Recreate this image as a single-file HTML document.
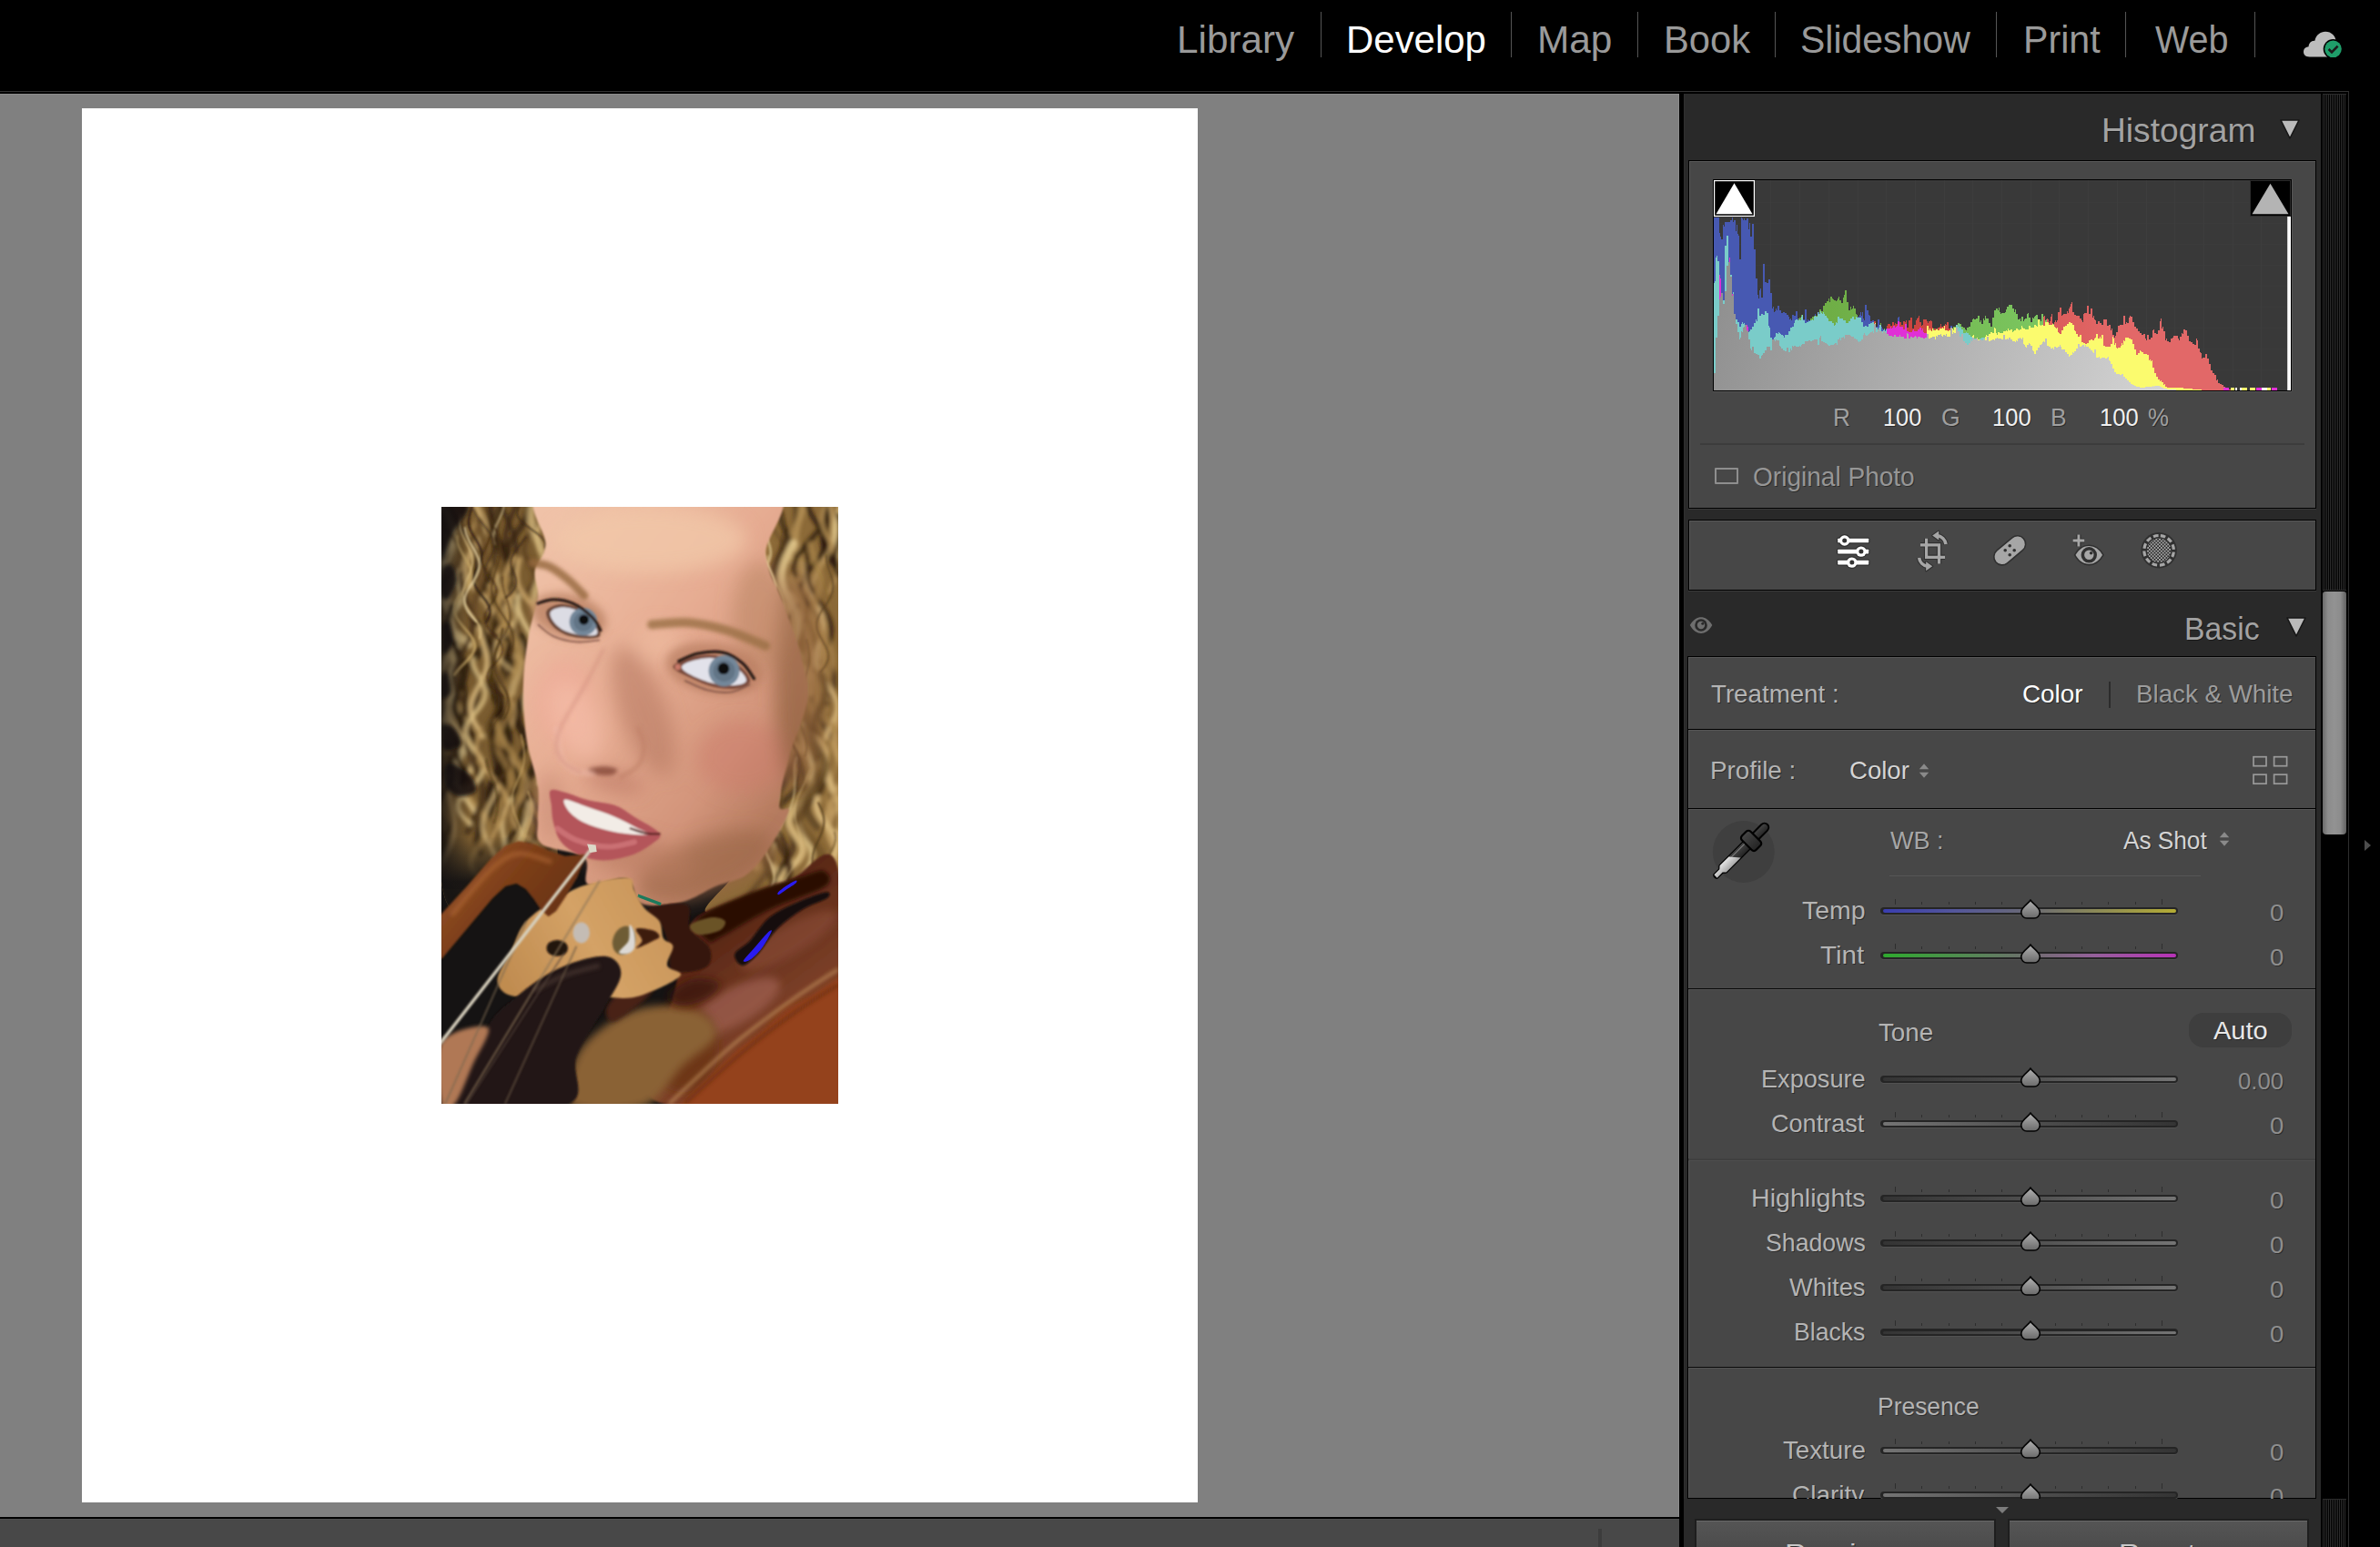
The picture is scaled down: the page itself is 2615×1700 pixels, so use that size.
<!DOCTYPE html><html><head><meta charset="utf-8"><title>Lightroom Classic - Develop</title><style>
*{margin:0;padding:0;box-sizing:border-box}
html,body{width:2615px;height:1700px;background:#000;overflow:hidden}
body{position:relative;font-family:"Liberation Sans",sans-serif}
.a{position:absolute}
.t{position:absolute;white-space:nowrap;line-height:1;transform-origin:0 0;font-family:"Liberation Sans",sans-serif}
.box{position:absolute;left:1855px;width:690px;background:#474747;border:1px solid #000;box-shadow:inset 1px 1px 0 #585858}
.trk{position:absolute;left:2066px;width:327px;height:8px;border-radius:4px;background:#252525;box-shadow:0 1px 0 #525252}
.trk i{position:absolute;left:2.5px;right:2.5px;top:2.3px;height:3.4px;border-radius:2px}
.kn{position:absolute;left:2218px}
.tk{position:absolute;left:2082px;width:294px;height:3px;background:repeating-linear-gradient(90deg,#2e2e2e 0,#2e2e2e 1px,transparent 1px,transparent 29.3px)}
.tk:before,.tk:after{content:"";position:absolute;top:-3px;width:1px;height:4px;background:#2e2e2e}
.tk:before{left:0}.tk:after{left:293px}
.sep{position:absolute;left:1855px;width:689px;height:1px}
.tri{position:absolute;width:0;height:0}
</style></head><body>
<svg width="0" height="0" style="position:absolute"><defs><linearGradient id="kg" x1="0" y1="0" x2="0" y2="1"><stop offset="0" stop-color="#b4b4b4"/><stop offset="0.5" stop-color="#8e8e8e"/><stop offset="1" stop-color="#6a6a6a"/></linearGradient></defs></svg>
<div class="a" style="left:0;top:100px;width:2581px;height:1px;background:#333"></div>
<div class="a" style="left:2580px;top:100px;width:1px;height:1600px;background:#2e2e2e"></div>
<div class="a" style="left:1451.0px;top:13px;width:1px;height:50px;background:#555"></div>
<div class="a" style="left:1660.1px;top:13px;width:1px;height:50px;background:#555"></div>
<div class="a" style="left:1798.9px;top:13px;width:1px;height:50px;background:#555"></div>
<div class="a" style="left:1949.9px;top:13px;width:1px;height:50px;background:#555"></div>
<div class="a" style="left:2192.5px;top:13px;width:1px;height:50px;background:#555"></div>
<div class="a" style="left:2334.5px;top:13px;width:1px;height:50px;background:#555"></div>
<div class="a" style="left:2476.5px;top:13px;width:1px;height:50px;background:#555"></div>
<div class="a" style="left:0;top:103px;width:1845px;height:1564px;background:#808080;box-shadow:inset 0 1px 0 #8c8c8c,inset -1px 0 0 #8c8c8c"></div>
<div class="a" style="left:90px;top:119px;width:1226px;height:1532px;background:#fff"></div>
<div class="a" style="left:485px;top:557px;width:436px;height:656px;background:#7a5030;overflow:hidden"><svg width="436" height="656" viewBox="0 0 436 656" style="position:absolute;left:0;top:0"><defs><filter id="b1" filterUnits="userSpaceOnUse" x="-40" y="-40" width="516" height="736"><feGaussianBlur stdDeviation="0.8"/></filter><filter id="b2" filterUnits="userSpaceOnUse" x="-40" y="-40" width="516" height="736"><feGaussianBlur stdDeviation="2"/></filter><filter id="b4" filterUnits="userSpaceOnUse" x="-40" y="-40" width="516" height="736"><feGaussianBlur stdDeviation="5"/></filter><filter id="b8" filterUnits="userSpaceOnUse" x="-40" y="-40" width="516" height="736"><feGaussianBlur stdDeviation="10"/></filter><linearGradient id="skin" gradientUnits="userSpaceOnUse" x1="90" y1="60" x2="400" y2="300"><stop offset="0" stop-color="#f0c2a8"/><stop offset="0.45" stop-color="#e6ac92"/><stop offset="0.8" stop-color="#d2947a"/><stop offset="1" stop-color="#b47a5e"/></linearGradient><linearGradient id="hairL" gradientUnits="userSpaceOnUse" x1="0" y1="0" x2="110" y2="60"><stop offset="0" stop-color="#5e4426"/><stop offset="0.5" stop-color="#a8864e"/><stop offset="1" stop-color="#866434"/></linearGradient><linearGradient id="hairR" gradientUnits="userSpaceOnUse" x1="350" y1="0" x2="436" y2="60"><stop offset="0" stop-color="#8e6c3c"/><stop offset="0.5" stop-color="#b8945a"/><stop offset="1" stop-color="#94703c"/></linearGradient><linearGradient id="vbody" gradientUnits="userSpaceOnUse" x1="260" y1="420" x2="436" y2="656"><stop offset="0" stop-color="#40180c"/><stop offset="0.35" stop-color="#66301c"/><stop offset="0.6" stop-color="#7c4028"/><stop offset="1" stop-color="#8a3c1c"/></linearGradient><linearGradient id="frog" gradientUnits="userSpaceOnUse" x1="20" y1="380" x2="130" y2="470"><stop offset="0" stop-color="#96522a"/><stop offset="0.45" stop-color="#7c3e18"/><stop offset="1" stop-color="#643014"/></linearGradient><linearGradient id="bridge" gradientUnits="userSpaceOnUse" x1="70" y1="520" x2="250" y2="420"><stop offset="0" stop-color="#c08c50"/><stop offset="0.5" stop-color="#d4a266"/><stop offset="1" stop-color="#c89458"/></linearGradient><linearGradient id="hfade" gradientUnits="userSpaceOnUse" x1="0" y1="362" x2="0" y2="412"><stop offset="0" stop-color="#151313" stop-opacity="0"/><stop offset="0.6" stop-color="#151313" stop-opacity="0.55"/><stop offset="1" stop-color="#151313" stop-opacity="0.95"/></linearGradient><linearGradient id="hfadeL" gradientUnits="userSpaceOnUse" x1="0" y1="0" x2="30" y2="0"><stop offset="0" stop-color="#151313" stop-opacity="0.75"/><stop offset="1" stop-color="#151313" stop-opacity="0"/></linearGradient><clipPath id="pc"><rect x="0" y="0" width="436" height="656"/></clipPath></defs><g clip-path="url(#pc)"><rect width="436" height="656" fill="#151313"/><clipPath id="hcL"><path d="M0.0 0.0 C23.2 -68.7 117.0 -7.0 139.0 0.0 C161.0 7.0 134.8 30.3 132.0 42.0 C129.2 53.7 123.3 60.3 122.0 70.0 C120.7 79.7 125.5 88.7 124.0 100.0 C122.5 111.3 115.8 122.8 113.0 138.0 C110.2 153.2 107.7 171.7 107.0 191.0 C106.3 210.3 106.5 234.7 109.0 254.0 C111.5 273.3 118.2 294.7 122.0 307.0 C125.8 319.3 131.0 318.2 132.0 328.0 C133.0 337.8 130.0 354.0 128.0 366.0 C126.0 378.0 131.3 392.0 120.0 400.0 C108.7 408.0 80.0 412.0 60.0 414.0 C40.0 416.0 10.0 481.0 0.0 412.0 C-10.0 343.0 -23.2 68.7 0.0 0.0 Z"/></clipPath><clipPath id="hcR"><path d="M436.0 0.0 C419.7 -67.5 354.5 -8.8 338.0 0.0 C321.5 8.8 334.2 35.3 337.0 53.0 C339.8 70.7 348.8 88.0 355.0 106.0 C361.2 124.0 369.5 143.3 374.0 161.0 C378.5 178.7 383.7 192.8 382.0 212.0 C380.3 231.2 368.5 256.7 364.0 276.0 C359.5 295.3 357.0 316.5 355.0 328.0 C353.0 339.5 357.0 333.0 352.0 345.0 C347.0 357.0 335.3 383.3 325.0 400.0 C314.7 416.7 285.8 439.2 290.0 445.0 C294.2 450.8 325.7 441.7 350.0 435.0 C374.3 428.3 421.7 477.5 436.0 405.0 C450.3 332.5 452.3 67.5 436.0 0.0 Z"/></clipPath><g clip-path="url(#hcL)"><rect x="0" y="0" width="436" height="470" fill="#7a5c30"/><g filter="url(#b2)"><path d="M104.0 274.2 C103.8 275.4 103.5 279.2 102.6 281.8 C101.8 284.3 100.3 286.8 98.8 289.3 C97.4 291.9 95.4 294.4 93.8 296.9 C92.1 299.4 90.3 302.0 89.1 304.5 C87.9 307.0 86.9 309.5 86.5 312.1 C86.2 314.6 86.4 317.1 87.1 319.6 C87.9 322.2 89.3 324.7 90.8 327.2 C92.4 329.7 94.6 332.3 96.5 334.8 C98.3 337.3 100.5 339.8 102.1 342.3 C103.6 344.9 105.0 347.4 105.5 349.9 C106.1 352.4 106.1 355.0 105.5 357.5 C104.9 360.0 103.4 362.5 101.7 365.1 C100.0 367.6 97.5 370.1 95.2 372.6 C93.0 375.2 90.3 377.7 88.3 380.2 C86.3 382.7 84.3 385.3 83.3 387.8 C82.2 390.3 81.7 392.8 82.0 395.4 C82.3 397.9 83.5 400.4 85.2 402.9 C86.8 405.5 89.4 408.0 91.7 410.5 C94.1 413.0 97.2 415.6 99.5 418.1 C101.8 420.6 104.3 423.1 105.7 425.7 C107.1 428.2 108.1 430.7 108.0 433.2 C108.0 435.8 107.0 438.3 105.4 440.8 C103.8 443.3 101.1 445.9 98.5 448.4 C95.9 450.9 92.4 453.4 89.6 456.0 C86.8 458.5 83.0 462.3 81.7 463.5" fill="none" stroke="#34220e" stroke-width="6.1" opacity="0.81" stroke-linecap="round"/><path d="M-0.7 58.3 C-0.1 59.5 1.3 63.1 2.8 65.5 C4.3 67.8 6.4 70.2 8.5 72.6 C10.5 75.0 12.9 77.3 14.9 79.7 C16.8 82.1 18.9 84.5 20.1 86.8 C21.4 89.2 22.3 91.6 22.5 94.0 C22.6 96.4 22.1 98.7 21.2 101.1 C20.3 103.5 18.5 105.9 16.9 108.2 C15.4 110.6 13.2 113.0 11.7 115.4 C10.3 117.7 8.7 120.1 8.1 122.5 C7.6 124.9 7.5 127.3 8.3 129.6 C9.1 132.0 10.9 134.4 13.1 136.8 C15.3 139.1 18.5 141.5 21.5 143.9 C24.6 146.3 29.6 149.8 31.2 151.0" fill="none" stroke="#e2c88c" stroke-width="8.8" opacity="0.83" stroke-linecap="round"/><path d="M74.7 183.0 C74.6 184.3 74.3 188.1 73.9 190.6 C73.6 193.1 73.1 195.6 72.5 198.1 C71.9 200.6 71.2 203.2 70.4 205.7 C69.6 208.2 68.7 210.7 67.8 213.2 C66.9 215.8 65.9 218.3 64.9 220.8 C64.0 223.3 63.0 225.8 62.2 228.4 C61.3 230.9 60.5 233.4 59.8 235.9 C59.1 238.4 58.5 240.9 58.1 243.5 C57.6 246.0 57.3 248.5 57.2 251.0 C57.0 253.5 57.1 256.1 57.2 258.6 C57.3 261.1 57.6 263.6 57.9 266.1 C58.2 268.6 58.6 271.2 59.0 273.7 C59.5 276.2 59.9 278.7 60.3 281.2 C60.7 283.8 61.1 286.3 61.3 288.8 C61.5 291.3 61.7 293.8 61.6 296.3 C61.6 298.9 61.4 301.4 61.0 303.9 C60.6 306.4 60.0 308.9 59.3 311.5 C58.6 314.0 57.7 316.5 56.7 319.0 C55.7 321.5 54.5 324.1 53.3 326.6 C52.1 329.1 50.8 331.6 49.5 334.1 C48.3 336.6 47.0 339.2 45.9 341.7 C44.8 344.2 43.7 346.7 42.9 349.2 C42.0 351.8 41.3 354.3 40.8 356.8 C40.3 359.3 40.0 361.8 39.9 364.3 C39.8 366.9 40.0 369.4 40.3 371.9 C40.6 374.4 41.4 378.2 41.7 379.5" fill="none" stroke="#2a1a0a" stroke-width="7.8" opacity="0.71" stroke-linecap="round"/><path d="M87.3 142.5 C87.6 143.7 88.3 147.4 89.1 149.8 C90.0 152.3 91.1 154.8 92.3 157.2 C93.4 159.7 94.8 162.1 96.0 164.6 C97.2 167.0 98.5 169.5 99.4 172.0 C100.3 174.4 101.1 176.9 101.6 179.3 C102.0 181.8 102.1 184.3 101.8 186.7 C101.6 189.2 100.9 191.6 100.0 194.1 C99.2 196.5 97.8 199.0 96.5 201.5 C95.1 203.9 93.4 206.4 91.9 208.8 C90.4 211.3 88.8 213.8 87.5 216.2 C86.2 218.7 85.0 221.1 84.3 223.6 C83.6 226.0 83.2 228.5 83.3 231.0 C83.4 233.4 83.9 235.9 84.8 238.3 C85.7 240.8 87.1 243.3 88.6 245.7 C90.1 248.2 92.1 250.6 93.9 253.1 C95.6 255.6 97.7 258.0 99.3 260.5 C101.0 262.9 102.6 265.4 103.6 267.8 C104.7 270.3 105.4 272.8 105.6 275.2 C105.8 277.7 105.5 280.1 104.7 282.6 C103.9 285.1 102.5 287.5 100.9 290.0 C99.3 292.4 97.2 294.9 95.1 297.3 C93.1 299.8 90.6 302.3 88.7 304.7 C86.7 307.2 84.0 310.9 83.1 312.1" fill="none" stroke="#2a1a0a" stroke-width="9.0" opacity="0.95" stroke-linecap="round"/><path d="M77.4 63.0 C77.5 64.1 78.0 67.6 78.3 70.0 C78.5 72.3 78.9 74.6 79.1 77.0 C79.3 79.3 79.6 81.7 79.6 84.0 C79.7 86.3 79.7 88.7 79.6 91.0 C79.4 93.3 79.1 95.7 78.7 98.0 C78.3 100.3 77.7 102.7 77.0 105.0 C76.3 107.4 75.4 109.7 74.5 112.0 C73.6 114.4 72.5 116.7 71.5 119.0 C70.4 121.4 69.3 123.7 68.2 126.0 C67.2 128.4 66.1 130.7 65.2 133.1 C64.3 135.4 63.5 137.7 62.9 140.1 C62.2 142.4 61.7 144.7 61.4 147.1 C61.2 149.4 61.1 151.7 61.2 154.1 C61.2 156.4 61.6 158.8 62.0 161.1 C62.4 163.4 63.1 165.8 63.7 168.1 C64.4 170.4 65.7 173.9 66.1 175.1" fill="none" stroke="#c8a468" stroke-width="8.2" opacity="0.74" stroke-linecap="round"/><path d="M90.6 -59.8 C91.2 -58.6 92.9 -54.9 94.1 -52.5 C95.4 -50.1 96.8 -47.6 98.2 -45.2 C99.6 -42.8 101.1 -40.3 102.4 -37.9 C103.8 -35.5 105.2 -33.1 106.4 -30.6 C107.7 -28.2 108.9 -25.8 109.8 -23.3 C110.8 -20.9 111.6 -18.5 112.1 -16.0 C112.7 -13.6 113.1 -11.2 113.3 -8.8 C113.4 -6.3 113.4 -3.9 113.2 -1.5 C112.9 1.0 112.5 3.4 111.9 5.8 C111.4 8.3 110.7 10.7 110.0 13.1 C109.3 15.5 108.5 18.0 107.9 20.4 C107.2 22.8 106.5 25.3 106.1 27.7 C105.7 30.1 105.3 32.6 105.2 35.0 C105.2 37.4 105.3 39.9 105.8 42.3 C106.3 44.7 107.6 48.4 108.0 49.6" fill="none" stroke="#d8b87c" stroke-width="3.9" opacity="0.82" stroke-linecap="round"/><path d="M22.5 -26.0 C23.4 -24.8 26.3 -21.1 28.3 -18.6 C30.3 -16.1 32.7 -13.6 34.6 -11.1 C36.5 -8.6 38.4 -6.2 39.6 -3.7 C40.7 -1.2 41.5 1.3 41.7 3.8 C41.8 6.2 41.3 8.7 40.5 11.2 C39.7 13.7 38.2 16.2 36.8 18.7 C35.5 21.1 33.7 23.6 32.5 26.1 C31.3 28.6 30.1 31.1 29.8 33.5 C29.5 36.0 29.6 38.5 30.5 41.0 C31.5 43.5 33.2 46.0 35.4 48.4 C37.5 50.9 40.5 53.4 43.3 55.9 C46.1 58.4 49.6 60.8 52.3 63.3 C54.9 65.8 57.7 68.3 59.4 70.8 C61.1 73.3 62.3 75.7 62.5 78.2 C62.7 80.7 62.0 83.2 60.7 85.7 C59.5 88.1 57.2 90.6 55.1 93.1 C53.0 95.6 49.3 99.3 48.1 100.5" fill="none" stroke="#bc985c" stroke-width="4.1" opacity="0.62" stroke-linecap="round"/><path d="M8.9 158.1 C8.7 159.4 7.7 163.1 7.8 165.6 C7.9 168.1 8.6 170.6 9.5 173.1 C10.4 175.6 11.9 178.1 13.1 180.6 C14.4 183.1 16.0 185.7 17.1 188.2 C18.1 190.7 19.2 193.2 19.5 195.7 C19.8 198.2 19.6 200.7 18.8 203.2 C18.1 205.7 16.6 208.2 14.8 210.7 C13.0 213.2 10.5 215.7 8.2 218.2 C6.0 220.7 3.2 223.2 1.2 225.7 C-0.9 228.2 -3.0 230.7 -4.1 233.2 C-5.3 235.7 -5.9 238.2 -5.8 240.7 C-5.7 243.2 -4.8 245.7 -3.4 248.2 C-2.1 250.7 0.1 253.2 2.0 255.7 C4.0 258.2 6.6 260.7 8.3 263.2 C10.1 265.7 11.9 268.2 12.7 270.7 C13.5 273.2 13.7 275.7 13.0 278.2 C12.3 280.7 10.6 283.2 8.5 285.7 C6.4 288.3 3.2 290.8 0.2 293.3 C-2.7 295.8 -7.6 299.5 -9.2 300.8" fill="none" stroke="#34220e" stroke-width="4.1" opacity="0.75" stroke-linecap="round"/><path d="M-0.4 277.1 C0.3 278.3 2.7 282.1 3.4 284.6 C4.2 287.0 4.4 289.5 3.9 292.0 C3.5 294.5 2.2 297.0 0.7 299.5 C-0.7 302.0 -3.0 304.5 -4.9 306.9 C-6.8 309.4 -9.1 311.9 -10.6 314.4 C-12.1 316.9 -13.4 319.4 -13.8 321.9 C-14.1 324.4 -13.8 326.9 -12.8 329.3 C-11.8 331.8 -9.8 334.3 -7.8 336.8 C-5.8 339.3 -2.9 341.8 -0.6 344.3 C1.6 346.8 4.2 349.3 5.8 351.7 C7.4 354.2 8.6 356.7 8.7 359.2 C8.9 361.7 8.1 364.2 6.8 366.7 C5.5 369.2 3.0 371.6 0.7 374.1 C-1.6 376.6 -4.8 379.1 -7.1 381.6 C-9.4 384.1 -11.9 386.6 -13.2 389.1 C-14.5 391.6 -15.1 394.0 -14.7 396.5 C-14.4 399.0 -12.8 401.5 -10.8 404.0 C-8.8 406.5 -5.6 409.0 -2.8 411.5 C0.0 413.9 3.6 416.4 6.1 418.9 C8.6 421.4 11.1 423.9 12.2 426.4 C13.3 428.9 13.6 431.4 12.8 433.9 C12.1 436.3 9.9 438.8 7.6 441.3 C5.2 443.8 1.5 446.3 -1.5 448.8 C-4.5 451.3 -8.2 453.8 -10.5 456.2 C-12.8 458.7 -14.9 461.2 -15.5 463.7 C-16.1 466.2 -15.6 468.7 -14.1 471.2 C-12.6 473.7 -9.6 476.2 -6.6 478.6 C-3.5 481.1 0.8 483.6 4.1 486.1 C7.5 488.6 12.1 492.3 13.6 493.6" fill="none" stroke="#5a4020" stroke-width="9.0" opacity="0.81" stroke-linecap="round"/><path d="M9.7 325.8 C10.1 327.0 11.5 330.7 12.1 333.2 C12.7 335.6 13.1 338.0 13.1 340.5 C13.0 342.9 12.6 345.4 11.8 347.8 C10.9 350.2 9.6 352.7 8.1 355.1 C6.5 357.6 4.5 360.0 2.5 362.4 C0.6 364.9 -1.7 367.3 -3.7 369.8 C-5.6 372.2 -7.6 374.7 -9.1 377.1 C-10.5 379.5 -11.7 382.0 -12.2 384.4 C-12.7 386.9 -12.8 389.3 -12.3 391.7 C-11.8 394.2 -10.6 396.6 -9.2 399.1 C-7.9 401.5 -5.9 403.9 -4.1 406.4 C-2.2 408.8 -0.0 411.3 1.7 413.7 C3.4 416.2 5.1 418.6 6.0 421.0 C7.0 423.5 7.5 425.9 7.3 428.4 C7.1 430.8 5.2 434.5 4.7 435.7" fill="none" stroke="#2a1a0a" stroke-width="3.9" opacity="0.63" stroke-linecap="round"/><path d="M73.5 -54.0 C73.5 -52.7 73.5 -49.1 73.2 -46.6 C73.0 -44.2 72.5 -41.8 72.1 -39.3 C71.6 -36.9 70.9 -34.5 70.3 -32.0 C69.7 -29.6 69.0 -27.1 68.5 -24.7 C67.9 -22.3 67.3 -19.8 67.0 -17.4 C66.6 -15.0 66.4 -12.5 66.3 -10.1 C66.3 -7.6 66.5 -5.2 66.9 -2.8 C67.2 -0.3 67.8 2.1 68.6 4.5 C69.3 7.0 70.3 9.4 71.3 11.9 C72.4 14.3 73.6 16.7 74.7 19.2 C75.8 21.6 77.0 24.0 78.0 26.5 C79.0 28.9 79.9 31.4 80.6 33.8 C81.3 36.2 81.8 38.7 82.0 41.1 C82.2 43.5 82.2 46.0 81.9 48.4 C81.6 50.9 81.0 53.3 80.3 55.7 C79.6 58.2 78.5 60.6 77.5 63.0 C76.5 65.5 75.3 67.9 74.2 70.4 C73.2 72.8 71.7 76.4 71.2 77.7" fill="none" stroke="#2a1a0a" stroke-width="4.2" opacity="0.74" stroke-linecap="round"/><path d="M8.8 294.3 C8.6 295.5 8.0 299.3 7.8 301.8 C7.6 304.3 7.6 306.8 7.7 309.2 C7.8 311.7 8.1 314.2 8.4 316.7 C8.8 319.2 9.3 321.7 9.9 324.2 C10.4 326.7 11.0 329.2 11.6 331.7 C12.2 334.2 12.8 336.7 13.2 339.2 C13.6 341.7 14.0 344.2 14.2 346.6 C14.4 349.1 14.5 351.6 14.3 354.1 C14.1 356.6 13.8 359.1 13.3 361.6 C12.7 364.1 12.0 366.6 11.1 369.1 C10.3 371.6 9.2 374.1 8.1 376.6 C7.1 379.1 5.9 381.6 4.7 384.1 C3.6 386.5 2.4 389.0 1.4 391.5 C0.4 394.0 -0.5 396.5 -1.2 399.0 C-1.9 401.5 -2.5 404.0 -2.7 406.5 C-3.0 409.0 -3.1 411.5 -2.9 414.0 C-2.8 416.5 -2.4 419.0 -1.8 421.5 C-1.2 423.9 -0.4 426.4 0.4 428.9 C1.2 431.4 2.2 433.9 3.2 436.4 C4.1 438.9 5.1 441.4 5.9 443.9 C6.6 446.4 7.4 448.9 7.8 451.4 C8.3 453.9 8.6 456.4 8.6 458.9 C8.6 461.3 8.3 463.8 7.8 466.3 C7.3 468.8 6.4 471.3 5.4 473.8 C4.4 476.3 3.1 478.8 1.7 481.3 C0.4 483.8 -2.0 487.5 -2.7 488.8" fill="none" stroke="#bc985c" stroke-width="4.6" opacity="0.93" stroke-linecap="round"/><path d="M64.6 104.4 C65.0 105.6 66.4 109.2 67.2 111.6 C68.0 114.1 68.9 116.5 69.3 118.9 C69.7 121.3 69.8 123.8 69.3 126.2 C68.8 128.6 67.9 131.0 66.3 133.5 C64.8 135.9 62.6 138.3 60.2 140.7 C57.8 143.2 54.7 145.6 51.9 148.0 C49.0 150.4 45.8 152.8 43.2 155.3 C40.5 157.7 37.9 160.1 36.2 162.5 C34.5 165.0 33.2 167.4 32.8 169.8 C32.3 172.2 32.7 174.7 33.6 177.1 C34.5 179.5 36.3 181.9 38.1 184.4 C40.0 186.8 42.5 189.2 44.5 191.6 C46.6 194.1 49.3 197.7 50.2 198.9" fill="none" stroke="#34220e" stroke-width="4.9" opacity="0.89" stroke-linecap="round"/><path d="M56.2 142.8 C56.5 144.1 57.5 147.8 57.8 150.3 C58.2 152.8 58.4 155.3 58.4 157.8 C58.4 160.3 58.2 162.8 57.9 165.3 C57.6 167.8 57.1 170.3 56.7 172.8 C56.3 175.3 55.7 177.8 55.3 180.3 C54.9 182.8 54.5 185.3 54.4 187.8 C54.2 190.3 54.2 192.9 54.4 195.4 C54.6 197.9 55.0 200.4 55.7 202.9 C56.3 205.4 57.2 207.9 58.2 210.4 C59.2 212.9 60.5 215.4 61.7 217.9 C63.0 220.4 64.4 222.9 65.6 225.4 C66.9 227.9 68.2 230.4 69.2 232.9 C70.2 235.4 71.1 237.9 71.7 240.4 C72.3 242.9 72.7 245.4 72.8 247.9 C73.0 250.4 72.8 252.9 72.4 255.4 C72.1 257.9 71.4 260.4 70.7 262.9 C70.1 265.4 69.2 267.9 68.4 270.4 C67.7 272.9 66.9 275.4 66.4 277.9 C65.8 280.4 65.4 282.9 65.3 285.4 C65.2 287.9 65.3 290.4 65.8 292.9 C66.2 295.4 67.0 297.9 68.0 300.4 C69.0 302.9 70.4 305.4 71.8 307.9 C73.2 310.4 75.0 312.9 76.5 315.4 C78.1 317.9 79.8 320.4 81.2 322.9 C82.7 325.4 84.0 327.9 85.0 330.4 C86.0 332.9 86.8 335.4 87.1 337.9 C87.5 340.4 87.5 342.9 87.3 345.4 C87.0 347.9 85.8 351.7 85.5 352.9" fill="none" stroke="#2a1a0a" stroke-width="6.9" opacity="0.63" stroke-linecap="round"/><path d="M104.3 19.6 C103.5 20.7 101.2 24.1 99.7 26.4 C98.2 28.7 96.4 31.0 95.1 33.3 C93.8 35.6 92.5 37.8 91.8 40.1 C91.1 42.4 90.7 44.7 90.8 47.0 C90.9 49.3 91.5 51.6 92.4 53.9 C93.2 56.1 94.6 58.4 95.8 60.7 C97.1 63.0 98.6 65.3 99.7 67.6 C100.7 69.9 101.8 72.1 102.1 74.4 C102.5 76.7 102.4 79.0 101.7 81.3 C101.0 83.6 99.6 85.9 97.8 88.2 C96.1 90.4 93.5 92.7 91.2 95.0 C88.8 97.3 84.8 100.7 83.5 101.9" fill="none" stroke="#5a4020" stroke-width="5.5" opacity="0.80" stroke-linecap="round"/><path d="M1.1 -6.0 C1.6 -4.8 2.7 -1.0 3.6 1.5 C4.6 4.0 5.8 6.5 6.8 9.0 C7.9 11.5 9.1 14.1 9.9 16.6 C10.7 19.1 11.5 21.6 11.8 24.1 C12.2 26.6 12.3 29.1 12.0 31.6 C11.6 34.1 10.9 36.6 9.9 39.2 C8.9 41.7 7.5 44.2 5.9 46.7 C4.4 49.2 2.4 51.7 0.7 54.2 C-1.1 56.7 -3.1 59.2 -4.7 61.7 C-6.4 64.2 -8.0 66.8 -9.1 69.3 C-10.2 71.8 -11.0 74.3 -11.3 76.8 C-11.6 79.3 -11.5 81.8 -10.9 84.3 C-10.3 86.8 -9.2 89.3 -7.9 91.9 C-6.6 94.4 -4.7 96.9 -3.0 99.4 C-1.2 101.9 0.9 104.4 2.6 106.9 C4.3 109.4 6.1 111.9 7.4 114.4 C8.6 117.0 9.6 119.5 9.9 122.0 C10.3 124.5 10.1 127.0 9.4 129.5 C8.7 132.0 6.3 135.8 5.7 137.0" fill="none" stroke="#e2c88c" stroke-width="6.7" opacity="0.92" stroke-linecap="round"/><path d="M101.5 213.4 C101.9 214.7 103.2 218.5 103.8 221.0 C104.5 223.6 105.2 226.2 105.5 228.7 C105.9 231.3 106.0 233.8 105.8 236.4 C105.5 238.9 105.0 241.5 104.1 244.1 C103.3 246.6 102.1 249.2 100.7 251.7 C99.3 254.3 97.6 256.8 95.9 259.4 C94.3 262.0 92.4 264.5 90.8 267.1 C89.2 269.6 87.5 272.2 86.3 274.7 C85.1 277.3 84.1 279.9 83.5 282.4 C83.0 285.0 82.8 287.5 82.9 290.1 C83.1 292.6 83.8 295.2 84.6 297.8 C85.4 300.3 86.7 302.9 87.9 305.4 C89.1 308.0 90.5 310.5 91.7 313.1 C92.9 315.7 94.1 318.2 94.9 320.8 C95.6 323.3 96.2 325.9 96.2 328.4 C96.2 331.0 95.8 333.6 94.9 336.1 C94.1 338.7 92.7 341.2 91.1 343.8 C89.5 346.3 87.4 348.9 85.3 351.5 C83.2 354.0 80.8 356.6 78.7 359.1 C76.6 361.7 74.3 364.2 72.7 366.8 C71.0 369.4 69.5 371.9 68.6 374.5 C67.8 377.0 67.4 379.6 67.5 382.1 C67.6 384.7 68.3 387.3 69.3 389.8 C70.3 392.4 71.9 394.9 73.5 397.5 C75.1 400.0 77.1 402.6 78.8 405.2 C80.5 407.7 82.3 410.3 83.5 412.8 C84.8 415.4 85.9 417.9 86.2 420.5 C86.6 423.1 85.9 426.9 85.8 428.2" fill="none" stroke="#34220e" stroke-width="5.3" opacity="0.95" stroke-linecap="round"/><path d="M50.5 83.4 C51.5 84.6 54.8 88.2 56.5 90.6 C58.2 93.0 59.8 95.4 60.7 97.8 C61.6 100.2 62.1 102.6 62.1 105.0 C62.1 107.4 61.5 109.8 60.6 112.2 C59.8 114.6 58.4 117.0 57.2 119.4 C56.1 121.8 54.6 124.2 53.7 126.5 C52.9 128.9 52.2 131.3 52.3 133.7 C52.4 136.1 53.0 138.5 54.4 140.9 C55.7 143.3 57.9 145.7 60.5 148.1 C63.0 150.5 66.4 152.9 69.5 155.3 C72.7 157.7 76.4 160.1 79.4 162.5 C82.3 164.9 85.9 168.5 87.3 169.7" fill="none" stroke="#c8a468" stroke-width="5.4" opacity="0.63" stroke-linecap="round"/><path d="M102.2 279.7 C101.8 280.9 100.4 284.6 99.5 287.0 C98.6 289.4 97.5 291.9 96.8 294.3 C96.0 296.7 95.3 299.2 94.9 301.6 C94.6 304.0 94.5 306.4 94.7 308.9 C95.0 311.3 95.5 313.7 96.5 316.2 C97.4 318.6 98.7 321.0 100.2 323.4 C101.7 325.9 103.6 328.3 105.5 330.7 C107.3 333.1 109.5 335.6 111.4 338.0 C113.2 340.4 115.3 342.9 116.8 345.3 C118.4 347.7 119.9 350.1 120.8 352.6 C121.8 355.0 122.4 357.4 122.6 359.9 C122.7 362.3 122.4 364.7 121.7 367.1 C121.0 369.6 119.8 372.0 118.4 374.4 C117.1 376.9 115.2 379.3 113.6 381.7 C111.9 384.1 109.9 386.6 108.2 389.0 C106.6 391.4 105.0 393.8 103.9 396.3 C102.8 398.7 101.9 401.1 101.6 403.6 C101.4 406.0 101.6 408.4 102.3 410.8 C103.1 413.3 105.6 416.9 106.2 418.1" fill="none" stroke="#34220e" stroke-width="5.6" opacity="0.80" stroke-linecap="round"/><path d="M-1.1 -24.6 C-1.5 -23.5 -3.0 -20.1 -3.5 -17.8 C-4.1 -15.5 -4.5 -13.2 -4.6 -10.9 C-4.6 -8.6 -4.4 -6.3 -4.0 -4.0 C-3.6 -1.7 -2.8 0.5 -2.1 2.8 C-1.3 5.1 -0.3 7.4 0.5 9.7 C1.4 12.0 2.4 14.3 3.0 16.6 C3.6 18.9 4.2 21.2 4.3 23.4 C4.4 25.7 4.2 28.0 3.7 30.3 C3.1 32.6 2.2 34.9 0.9 37.2 C-0.3 39.5 -2.0 41.8 -3.8 44.1 C-5.5 46.3 -7.6 48.6 -9.6 50.9 C-11.5 53.2 -13.7 55.5 -15.4 57.8 C-17.1 60.1 -18.8 62.4 -20.0 64.7 C-21.1 67.0 -21.9 70.4 -22.3 71.5" fill="none" stroke="#2a1a0a" stroke-width="7.3" opacity="0.76" stroke-linecap="round"/><path d="M90.7 -27.3 C91.1 -26.1 92.1 -22.4 92.8 -19.9 C93.5 -17.5 94.3 -15.0 94.9 -12.5 C95.4 -10.1 96.0 -7.6 96.2 -5.1 C96.4 -2.7 96.4 -0.2 96.1 2.3 C95.8 4.7 95.1 7.2 94.2 9.7 C93.2 12.1 91.9 14.6 90.5 17.1 C89.1 19.5 87.3 22.0 85.7 24.5 C84.0 27.0 82.1 29.4 80.4 31.9 C78.8 34.4 77.1 36.8 75.8 39.3 C74.6 41.8 73.5 44.2 72.8 46.7 C72.2 49.2 71.8 51.6 71.9 54.1 C72.0 56.6 72.5 59.0 73.2 61.5 C73.9 64.0 75.0 66.4 76.2 68.9 C77.3 71.4 78.7 73.8 79.9 76.3 C81.1 78.8 82.4 81.2 83.3 83.7 C84.2 86.2 84.9 88.6 85.1 91.1 C85.4 93.6 85.2 96.0 84.6 98.5 C84.0 101.0 82.9 103.4 81.5 105.9 C80.1 108.4 78.2 110.8 76.1 113.3 C74.1 115.8 71.7 118.2 69.5 120.7 C67.3 123.2 64.8 125.6 62.8 128.1 C60.8 130.6 58.9 133.0 57.5 135.5 C56.2 138.0 55.1 140.4 54.7 142.9 C54.2 145.4 54.3 147.8 54.8 150.3 C55.3 152.8 57.3 156.5 57.8 157.7" fill="none" stroke="#34220e" stroke-width="7.3" opacity="0.77" stroke-linecap="round"/><path d="M68.2 129.7 C68.4 130.9 68.6 134.7 69.0 137.3 C69.4 139.8 69.9 142.3 70.5 144.9 C71.1 147.4 71.8 150.0 72.4 152.5 C73.0 155.0 73.7 157.6 74.2 160.1 C74.7 162.6 75.2 165.2 75.5 167.7 C75.7 170.2 75.8 172.8 75.7 175.3 C75.6 177.9 75.3 180.4 74.8 182.9 C74.3 185.5 73.5 188.0 72.7 190.5 C71.9 193.1 70.9 195.6 70.0 198.2 C69.0 200.7 67.9 203.2 67.0 205.8 C66.0 208.3 65.0 210.8 64.3 213.4 C63.6 215.9 63.0 218.5 62.7 221.0 C62.3 223.5 62.2 226.1 62.3 228.6 C62.4 231.1 62.8 233.7 63.3 236.2 C63.9 238.7 64.7 241.3 65.5 243.8 C66.4 246.4 67.4 248.9 68.4 251.4 C69.3 254.0 70.4 256.5 71.2 259.0 C72.0 261.6 72.8 264.1 73.2 266.7 C73.7 269.2 74.0 271.7 74.0 274.3 C73.9 276.8 73.6 279.3 73.1 281.9 C72.5 284.4 71.6 287.0 70.6 289.5 C69.6 292.0 68.3 294.6 67.1 297.1 C65.8 299.6 64.3 302.2 63.1 304.7 C61.8 307.2 60.5 309.8 59.5 312.3 C58.5 314.9 57.6 317.4 57.0 319.9 C56.5 322.5 56.2 325.0 56.3 327.5 C56.4 330.1 57.2 333.9 57.4 335.2" fill="none" stroke="#2a1a0a" stroke-width="7.6" opacity="0.72" stroke-linecap="round"/><path d="M56.0 34.2 C56.3 35.4 57.2 39.0 57.7 41.4 C58.1 43.8 58.5 46.2 58.7 48.6 C58.8 51.0 58.8 53.4 58.6 55.8 C58.4 58.2 57.9 60.6 57.2 63.0 C56.6 65.3 55.7 67.7 54.6 70.1 C53.5 72.5 52.2 74.9 50.8 77.3 C49.5 79.7 47.9 82.1 46.4 84.5 C45.0 86.9 43.4 89.3 42.0 91.7 C40.6 94.1 39.2 96.5 38.1 98.9 C37.1 101.3 36.1 103.7 35.5 106.1 C34.8 108.5 34.5 110.9 34.4 113.3 C34.3 115.7 34.6 118.1 35.1 120.5 C35.6 122.9 36.4 125.3 37.4 127.7 C38.4 130.1 39.6 132.5 40.9 134.9 C42.1 137.3 43.6 139.7 44.9 142.1 C46.2 144.5 47.5 146.9 48.6 149.3 C49.6 151.7 50.6 154.1 51.2 156.5 C51.8 158.9 52.1 161.3 52.0 163.7 C52.0 166.0 51.0 169.6 50.8 170.8" fill="none" stroke="#34220e" stroke-width="4.6" opacity="0.67" stroke-linecap="round"/><path d="M70.7 63.4 C70.6 64.6 70.5 68.1 70.1 70.5 C69.7 72.9 69.0 75.2 68.2 77.6 C67.3 79.9 66.3 82.3 65.1 84.7 C64.0 87.0 62.7 89.4 61.4 91.7 C60.1 94.1 58.7 96.5 57.5 98.8 C56.3 101.2 55.1 103.5 54.1 105.9 C53.2 108.2 52.4 110.6 51.9 113.0 C51.5 115.3 51.2 117.7 51.4 120.0 C51.5 122.4 51.9 124.8 52.7 127.1 C53.4 129.5 54.5 131.8 55.8 134.2 C57.1 136.5 58.8 138.9 60.5 141.3 C62.1 143.6 64.1 146.0 65.9 148.3 C67.7 150.7 69.7 153.1 71.3 155.4 C73.0 157.8 75.0 161.3 75.8 162.5" fill="none" stroke="#5a4020" stroke-width="8.7" opacity="0.70" stroke-linecap="round"/><path d="M7.0 123.8 C7.5 125.1 9.3 128.8 10.4 131.3 C11.5 133.8 12.7 136.3 13.6 138.8 C14.5 141.3 15.4 143.8 16.0 146.3 C16.6 148.8 17.0 151.3 17.2 153.8 C17.3 156.3 17.2 158.8 16.8 161.3 C16.5 163.8 15.9 166.2 15.2 168.7 C14.5 171.2 13.6 173.7 12.8 176.2 C11.9 178.7 10.9 181.2 10.2 183.7 C9.5 186.2 8.8 188.7 8.4 191.2 C8.0 193.7 7.8 196.2 7.9 198.7 C8.1 201.2 8.5 203.7 9.2 206.2 C9.9 208.7 10.9 211.2 12.1 213.7 C13.3 216.2 14.8 218.6 16.3 221.1 C17.8 223.6 19.5 226.1 20.9 228.6 C22.4 231.1 23.9 233.6 25.0 236.1 C26.2 238.6 27.2 241.1 27.8 243.6 C28.5 246.1 28.8 248.6 28.7 251.1 C28.7 253.6 28.2 256.1 27.6 258.6 C26.9 261.1 25.8 263.6 24.7 266.1 C23.6 268.6 22.2 271.0 21.0 273.5 C19.8 276.0 18.4 278.5 17.4 281.0 C16.4 283.5 15.5 286.0 15.0 288.5 C14.6 291.0 14.4 293.5 14.6 296.0 C14.9 298.5 15.5 301.0 16.5 303.5 C17.5 306.0 19.0 308.5 20.6 311.0 C22.2 313.5 24.2 316.0 26.1 318.5 C27.9 321.0 30.1 323.4 31.8 325.9 C33.6 328.4 35.9 332.2 36.7 333.4" fill="none" stroke="#e2c88c" stroke-width="7.4" opacity="0.89" stroke-linecap="round"/><path d="M51.7 -30.9 C51.9 -29.7 52.8 -26.2 53.2 -23.8 C53.6 -21.5 53.8 -19.2 54.0 -16.8 C54.1 -14.5 54.1 -12.1 54.1 -9.8 C54.1 -7.4 54.0 -5.1 53.9 -2.7 C53.9 -0.4 53.8 2.0 53.8 4.3 C53.8 6.6 53.8 9.0 54.0 11.3 C54.2 13.7 54.5 16.0 55.0 18.4 C55.5 20.7 56.1 23.1 57.0 25.4 C57.9 27.7 58.9 30.1 60.2 32.4 C61.4 34.8 62.8 37.1 64.3 39.5 C65.8 41.8 67.4 44.2 69.0 46.5 C70.7 48.8 73.1 52.4 74.0 53.5" fill="none" stroke="#2a1a0a" stroke-width="5.2" opacity="0.88" stroke-linecap="round"/><path d="M65.4 98.0 C65.5 99.2 65.6 102.8 65.9 105.1 C66.2 107.5 66.7 109.9 67.3 112.2 C67.9 114.6 68.7 117.0 69.6 119.3 C70.5 121.7 71.6 124.1 72.7 126.4 C73.9 128.8 75.2 131.2 76.4 133.6 C77.6 135.9 78.9 138.3 80.1 140.7 C81.3 143.0 82.5 145.4 83.5 147.8 C84.4 150.1 85.3 152.5 86.0 154.9 C86.6 157.2 87.1 159.6 87.3 162.0 C87.5 164.3 87.5 166.7 87.3 169.1 C87.1 171.5 86.7 173.8 86.1 176.2 C85.5 178.6 84.7 180.9 84.0 183.3 C83.2 185.7 82.2 188.0 81.4 190.4 C80.6 192.8 79.6 195.1 79.0 197.5 C78.3 199.9 77.7 203.4 77.4 204.6" fill="none" stroke="#d8b87c" stroke-width="8.9" opacity="0.64" stroke-linecap="round"/><path d="M65.4 195.5 C66.2 196.7 68.7 200.4 70.4 202.9 C72.0 205.4 74.0 207.8 75.4 210.3 C76.9 212.8 78.3 215.3 79.2 217.7 C80.0 220.2 80.6 222.7 80.6 225.2 C80.6 227.6 80.2 230.1 79.4 232.6 C78.7 235.1 77.4 237.5 76.2 240.0 C75.1 242.5 73.5 245.0 72.4 247.4 C71.2 249.9 70.0 252.4 69.5 254.9 C68.9 257.3 68.6 259.8 69.0 262.3 C69.3 264.8 70.2 267.2 71.5 269.7 C72.9 272.2 74.8 274.7 76.9 277.1 C78.9 279.6 81.4 282.1 83.6 284.6 C85.8 287.0 88.2 289.5 89.9 292.0 C91.6 294.5 93.1 296.9 93.9 299.4 C94.7 301.9 94.9 304.4 94.6 306.8 C94.2 309.3 93.1 311.8 91.8 314.3 C90.5 316.7 88.5 319.2 86.8 321.7 C85.0 324.2 82.9 326.6 81.4 329.1 C79.9 331.6 78.5 334.1 77.9 336.5 C77.3 339.0 77.2 341.5 77.9 344.0 C78.5 346.4 80.0 348.9 81.9 351.4 C83.7 353.9 86.5 356.3 89.1 358.8 C91.7 361.3 94.9 363.8 97.5 366.2 C100.1 368.7 102.9 371.2 104.8 373.7 C106.6 376.1 108.1 378.6 108.6 381.1 C109.2 383.6 108.2 387.3 108.1 388.5" fill="none" stroke="#c8a468" stroke-width="4.5" opacity="0.60" stroke-linecap="round"/><path d="M61.5 -45.9 C62.0 -44.7 63.7 -40.9 64.6 -38.4 C65.4 -36.0 66.2 -33.5 66.8 -31.0 C67.4 -28.5 67.8 -26.0 68.0 -23.6 C68.2 -21.1 68.1 -18.6 67.9 -16.1 C67.7 -13.6 67.3 -11.1 66.8 -8.7 C66.2 -6.2 65.5 -3.7 64.7 -1.2 C64.0 1.3 63.1 3.8 62.3 6.2 C61.5 8.7 60.7 11.2 60.1 13.7 C59.4 16.2 58.9 18.6 58.6 21.1 C58.3 23.6 58.2 26.1 58.4 28.6 C58.6 31.1 59.1 33.5 59.8 36.0 C60.6 38.5 61.7 41.0 62.9 43.5 C64.2 46.0 65.8 48.4 67.5 50.9 C69.2 53.4 71.2 55.9 73.1 58.4 C75.0 60.8 78.1 64.6 79.0 65.8" fill="none" stroke="#34220e" stroke-width="9.0" opacity="0.66" stroke-linecap="round"/><path d="M104.5 -26.0 C104.3 -24.7 103.9 -21.0 103.4 -18.5 C103.0 -16.0 102.3 -13.5 101.7 -10.9 C101.1 -8.4 100.5 -5.9 99.9 -3.4 C99.4 -0.9 98.9 1.6 98.7 4.1 C98.4 6.6 98.3 9.1 98.4 11.6 C98.6 14.1 98.9 16.6 99.5 19.1 C100.0 21.6 100.8 24.1 101.7 26.7 C102.5 29.2 103.7 31.7 104.7 34.2 C105.7 36.7 106.9 39.2 107.9 41.7 C108.9 44.2 109.9 46.7 110.6 49.2 C111.3 51.7 111.9 54.2 112.1 56.7 C112.4 59.2 112.4 61.7 112.2 64.3 C112.0 66.8 111.4 69.3 110.8 71.8 C110.2 74.3 109.2 76.8 108.4 79.3 C107.5 81.8 106.5 84.3 105.6 86.8 C104.8 89.3 103.9 91.8 103.4 94.3 C102.9 96.8 102.5 99.3 102.4 101.9 C102.4 104.4 102.6 106.9 103.1 109.4 C103.6 111.9 104.5 114.4 105.5 116.9 C106.5 119.4 107.9 121.9 109.2 124.4 C110.5 126.9 112.0 129.4 113.4 131.9 C114.7 134.4 116.1 136.9 117.1 139.5 C118.1 142.0 119.0 144.5 119.5 147.0 C120.0 149.5 120.2 152.0 120.0 154.5 C119.9 157.0 119.3 159.5 118.6 162.0 C117.8 164.5 116.7 167.0 115.6 169.5 C114.5 172.0 113.1 174.5 111.9 177.1 C110.8 179.6 109.2 183.3 108.6 184.6" fill="none" stroke="#dcc084" stroke-width="8.5" opacity="0.73" stroke-linecap="round"/><path d="M76.5 136.0 C76.4 137.3 76.4 141.0 76.1 143.5 C75.8 146.0 75.3 148.5 74.8 151.0 C74.2 153.5 73.5 156.0 72.7 158.5 C72.0 161.0 71.1 163.5 70.2 166.0 C69.3 168.5 68.3 171.0 67.4 173.5 C66.6 176.0 65.6 178.5 64.9 181.0 C64.1 183.5 63.4 186.0 62.9 188.5 C62.3 191.0 61.9 193.5 61.7 195.9 C61.5 198.4 61.5 200.9 61.6 203.4 C61.7 205.9 62.1 208.4 62.5 210.9 C63.0 213.4 63.7 215.9 64.4 218.4 C65.1 220.9 66.0 223.4 66.8 225.9 C67.7 228.4 68.6 230.9 69.4 233.4 C70.3 235.9 71.1 238.4 71.8 240.9 C72.4 243.4 73.0 245.9 73.4 248.4 C73.8 250.9 74.0 253.4 73.9 255.9 C73.9 258.4 73.6 260.9 73.2 263.4 C72.7 265.8 72.0 268.3 71.1 270.8 C70.2 273.3 69.1 275.8 68.0 278.3 C66.8 280.8 65.5 283.3 64.2 285.8 C62.9 288.3 61.5 290.8 60.2 293.3 C59.0 295.8 57.7 298.3 56.7 300.8 C55.6 303.3 54.7 305.8 54.0 308.3 C53.4 310.8 52.9 313.3 52.7 315.8 C52.6 318.3 52.6 320.8 53.0 323.3 C53.3 325.8 54.4 329.5 54.7 330.8" fill="none" stroke="#2a1a0a" stroke-width="8.3" opacity="0.88" stroke-linecap="round"/><path d="M14.5 34.5 C14.3 35.7 13.8 39.5 13.3 42.0 C12.8 44.5 12.1 47.0 11.3 49.5 C10.4 51.9 9.5 54.4 8.4 56.9 C7.3 59.4 6.1 61.9 4.9 64.4 C3.6 66.9 2.3 69.4 1.0 71.9 C-0.3 74.4 -1.7 76.9 -2.9 79.4 C-4.1 81.9 -5.3 84.4 -6.3 86.9 C-7.3 89.3 -8.2 91.8 -8.8 94.3 C-9.5 96.8 -10.0 99.3 -10.3 101.8 C-10.6 104.3 -10.7 106.8 -10.6 109.3 C-10.5 111.8 -10.1 114.3 -9.7 116.8 C-9.3 119.3 -8.7 121.8 -8.1 124.2 C-7.5 126.7 -6.7 129.2 -6.1 131.7 C-5.4 134.2 -4.7 136.7 -4.2 139.2 C-3.7 141.7 -3.2 144.2 -3.0 146.7 C-2.8 149.2 -2.8 151.7 -3.0 154.2 C-3.2 156.7 -3.7 159.2 -4.4 161.6 C-5.1 164.1 -6.9 167.9 -7.4 169.1" fill="none" stroke="#dcc084" stroke-width="4.9" opacity="0.85" stroke-linecap="round"/><path d="M28.5 -27.7 C28.6 -26.5 28.4 -22.7 28.9 -20.3 C29.3 -17.8 30.1 -15.3 31.1 -12.8 C32.1 -10.3 33.4 -7.8 34.8 -5.3 C36.1 -2.9 37.8 -0.4 39.2 2.1 C40.6 4.6 42.1 7.1 43.3 9.6 C44.4 12.1 45.5 14.6 46.0 17.0 C46.6 19.5 46.8 22.0 46.6 24.5 C46.4 27.0 45.7 29.5 44.7 32.0 C43.8 34.4 42.3 36.9 40.8 39.4 C39.3 41.9 37.3 44.4 35.6 46.9 C33.9 49.4 32.0 51.8 30.5 54.3 C29.0 56.8 27.6 59.3 26.8 61.8 C26.0 64.3 25.5 66.8 25.6 69.3 C25.7 71.7 26.3 74.2 27.4 76.7 C28.4 79.2 30.1 81.7 31.9 84.2 C33.7 86.7 36.1 89.1 38.3 91.6 C40.5 94.1 43.0 96.6 45.0 99.1 C47.0 101.6 49.1 104.1 50.5 106.5 C51.9 109.0 52.8 112.8 53.3 114.0" fill="none" stroke="#d8b87c" stroke-width="8.0" opacity="0.62" stroke-linecap="round"/><path d="M16.2 70.7 C15.7 71.9 14.2 75.7 13.2 78.3 C12.2 80.8 11.1 83.3 10.3 85.9 C9.4 88.4 8.6 91.0 8.0 93.5 C7.5 96.0 7.1 98.6 6.9 101.1 C6.7 103.6 6.7 106.2 6.9 108.7 C7.1 111.3 7.6 113.8 8.1 116.3 C8.6 118.9 9.2 121.4 9.8 123.9 C10.4 126.5 11.1 129.0 11.6 131.5 C12.1 134.1 12.6 136.6 12.7 139.2 C12.9 141.7 12.9 144.2 12.6 146.8 C12.4 149.3 11.8 151.8 11.1 154.4 C10.3 156.9 9.2 159.5 8.1 162.0 C6.9 164.5 5.5 167.1 4.2 169.6 C2.9 172.1 1.4 174.7 0.1 177.2 C-1.2 179.8 -2.5 182.3 -3.4 184.8 C-4.4 187.4 -5.2 189.9 -5.6 192.4 C-6.1 195.0 -6.2 197.5 -6.1 200.1 C-6.0 202.6 -5.5 205.1 -4.9 207.7 C-4.3 210.2 -3.4 212.7 -2.5 215.3 C-1.6 217.8 -0.5 220.4 0.4 222.9 C1.3 225.4 2.3 228.0 2.9 230.5 C3.5 233.0 4.0 235.6 4.1 238.1 C4.2 240.7 4.0 243.2 3.4 245.7 C2.8 248.3 1.9 250.8 0.7 253.3 C-0.5 255.9 -2.9 259.7 -3.6 261.0" fill="none" stroke="#d8b87c" stroke-width="8.1" opacity="0.84" stroke-linecap="round"/><path d="M65.3 208.7 C64.8 210.0 63.5 213.7 62.6 216.2 C61.6 218.7 60.6 221.1 59.7 223.6 C58.7 226.1 57.8 228.6 57.0 231.1 C56.3 233.5 55.6 236.0 55.2 238.5 C54.8 241.0 54.5 243.5 54.5 246.0 C54.5 248.4 54.7 250.9 55.1 253.4 C55.6 255.9 56.2 258.4 57.0 260.8 C57.8 263.3 58.9 265.8 59.9 268.3 C61.0 270.8 62.2 273.2 63.3 275.7 C64.4 278.2 65.6 280.7 66.5 283.2 C67.5 285.7 68.4 288.1 69.0 290.6 C69.6 293.1 70.1 295.6 70.2 298.1 C70.4 300.5 70.3 303.0 69.9 305.5 C69.5 308.0 68.8 310.5 67.9 312.9 C67.0 315.4 65.8 317.9 64.5 320.4 C63.3 322.9 61.7 325.4 60.3 327.8 C58.9 330.3 57.2 332.8 55.9 335.3 C54.5 337.8 53.1 340.2 52.0 342.7 C50.9 345.2 50.0 347.7 49.4 350.2 C48.9 352.7 48.5 355.1 48.6 357.6 C48.7 360.1 49.1 362.6 49.7 365.1 C50.4 367.5 51.5 370.0 52.7 372.5 C53.9 375.0 55.5 377.5 57.0 379.9 C58.6 382.4 60.4 384.9 62.0 387.4 C63.6 389.9 65.9 393.6 66.6 394.8" fill="none" stroke="#34220e" stroke-width="4.4" opacity="0.78" stroke-linecap="round"/><path d="M24.6 201.8 C24.2 203.1 22.6 206.9 21.9 209.4 C21.1 212.0 20.4 214.5 20.1 217.1 C19.9 219.6 19.9 222.2 20.3 224.7 C20.7 227.2 21.6 229.8 22.7 232.3 C23.8 234.9 25.4 237.4 26.9 240.0 C28.5 242.5 30.4 245.0 32.1 247.6 C33.7 250.1 35.5 252.7 36.7 255.2 C38.0 257.8 39.1 260.3 39.6 262.9 C40.2 265.4 40.3 267.9 40.1 270.5 C39.8 273.0 38.9 275.6 37.9 278.1 C36.9 280.7 35.4 283.2 34.1 285.7 C32.7 288.3 31.0 290.8 29.8 293.4 C28.6 295.9 27.4 298.5 26.8 301.0 C26.3 303.6 26.0 306.1 26.4 308.6 C26.7 311.2 27.6 313.7 28.9 316.3 C30.2 318.8 32.1 321.4 34.1 323.9 C36.0 326.4 38.5 329.0 40.6 331.5 C42.7 334.1 45.0 336.6 46.7 339.2 C48.4 341.7 49.9 344.3 50.7 346.8 C51.5 349.3 51.8 351.9 51.5 354.4 C51.2 357.0 50.2 359.5 48.9 362.1 C47.7 364.6 45.7 367.1 44.0 369.7 C42.2 372.2 39.9 374.8 38.3 377.3 C36.6 379.9 34.8 382.4 33.9 385.0 C32.9 387.5 32.3 390.0 32.5 392.6 C32.7 395.1 33.5 397.7 34.9 400.2 C36.3 402.8 38.5 405.3 40.8 407.8 C43.0 410.4 47.3 414.2 48.6 415.5" fill="none" stroke="#a8844a" stroke-width="6.5" opacity="0.70" stroke-linecap="round"/><path d="M14.8 149.0 C14.9 150.3 15.2 154.0 15.5 156.5 C15.8 159.0 16.3 161.5 16.8 164.0 C17.3 166.6 17.9 169.1 18.5 171.6 C19.2 174.1 19.9 176.6 20.6 179.1 C21.3 181.6 22.0 184.1 22.7 186.6 C23.3 189.1 23.9 191.6 24.4 194.1 C24.9 196.6 25.4 199.2 25.7 201.7 C26.0 204.2 26.1 206.7 26.2 209.2 C26.2 211.7 26.0 214.2 25.8 216.7 C25.6 219.2 25.1 221.7 24.7 224.2 C24.2 226.7 23.6 229.2 22.9 231.7 C22.3 234.3 21.6 236.8 20.9 239.3 C20.3 241.8 19.6 244.3 19.0 246.8 C18.4 249.3 17.9 251.8 17.5 254.3 C17.1 256.8 16.9 259.3 16.8 261.8 C16.7 264.3 16.8 266.9 17.1 269.4 C17.3 271.9 17.8 274.4 18.4 276.9 C19.0 279.4 19.8 281.9 20.7 284.4 C21.6 286.9 22.6 289.4 23.7 291.9 C24.7 294.4 26.4 298.2 26.9 299.4" fill="none" stroke="#34220e" stroke-width="5.7" opacity="0.88" stroke-linecap="round"/><path d="M5.9 -23.6 C5.9 -22.4 5.7 -18.7 5.8 -16.3 C5.9 -13.8 6.0 -11.3 6.4 -8.9 C6.8 -6.4 7.3 -4.0 8.0 -1.5 C8.7 1.0 9.6 3.4 10.7 5.9 C11.8 8.3 13.1 10.8 14.6 13.3 C16.0 15.7 17.7 18.2 19.3 20.6 C21.0 23.1 22.8 25.6 24.6 28.0 C26.3 30.5 28.1 33.0 29.7 35.4 C31.4 37.9 33.0 40.3 34.3 42.8 C35.6 45.3 36.8 47.7 37.6 50.2 C38.5 52.6 39.1 55.1 39.5 57.6 C39.8 60.0 39.8 62.5 39.6 64.9 C39.4 67.4 38.9 69.9 38.3 72.3 C37.7 74.8 36.3 78.5 35.9 79.7" fill="none" stroke="#2a1a0a" stroke-width="5.7" opacity="0.69" stroke-linecap="round"/><path d="M11.2 109.1 C10.8 110.4 9.6 114.1 8.9 116.6 C8.2 119.1 7.4 121.6 6.9 124.1 C6.4 126.6 6.1 129.1 6.1 131.5 C6.2 134.0 6.6 136.5 7.3 139.0 C7.9 141.5 9.0 144.0 10.3 146.5 C11.5 149.0 13.2 151.5 14.7 153.9 C16.3 156.4 18.1 158.9 19.6 161.4 C21.1 163.9 22.6 166.4 23.7 168.9 C24.8 171.4 25.7 173.9 26.1 176.4 C26.5 178.8 26.5 181.3 26.2 183.8 C25.8 186.3 25.0 188.8 24.1 191.3 C23.1 193.8 21.8 196.3 20.6 198.8 C19.4 201.3 18.0 203.7 17.0 206.2 C16.0 208.7 15.0 211.2 14.6 213.7 C14.2 216.2 14.1 218.7 14.5 221.2 C14.9 223.7 15.9 226.2 17.1 228.6 C18.4 231.1 20.2 233.6 22.1 236.1 C24.0 238.6 26.3 241.1 28.3 243.6 C30.3 246.1 32.5 248.6 34.2 251.0 C35.9 253.5 37.4 256.0 38.3 258.5 C39.2 261.0 39.7 263.5 39.6 266.0 C39.5 268.5 38.8 271.0 37.8 273.5 C36.8 275.9 35.2 278.4 33.6 280.9 C32.1 283.4 30.1 285.9 28.5 288.4 C26.9 290.9 25.2 293.4 24.2 295.9 C23.1 298.4 22.6 302.1 22.3 303.3" fill="none" stroke="#34220e" stroke-width="6.9" opacity="0.92" stroke-linecap="round"/><path d="M76.3 321.1 C75.7 322.3 73.8 325.9 72.6 328.2 C71.5 330.6 70.4 332.9 69.6 335.3 C68.7 337.7 68.0 340.0 67.6 342.4 C67.1 344.7 66.9 347.1 66.8 349.5 C66.8 351.8 67.0 354.2 67.2 356.6 C67.5 358.9 68.0 361.3 68.3 363.6 C68.6 366.0 69.1 368.4 69.3 370.7 C69.4 373.1 69.5 375.4 69.3 377.8 C69.0 380.2 68.6 382.5 67.8 384.9 C67.0 387.2 65.8 389.6 64.5 392.0 C63.2 394.3 61.5 396.7 59.7 399.0 C58.0 401.4 55.2 404.9 54.3 406.1" fill="none" stroke="#e2c88c" stroke-width="4.8" opacity="0.77" stroke-linecap="round"/><path d="M84.7 -12.1 C84.4 -10.9 83.6 -7.1 82.8 -4.5 C82.0 -2.0 81.0 0.5 80.0 3.0 C79.0 5.6 77.8 8.1 76.7 10.6 C75.7 13.1 74.5 15.7 73.6 18.2 C72.7 20.7 71.9 23.2 71.3 25.8 C70.7 28.3 70.4 30.8 70.2 33.3 C70.1 35.8 70.3 38.4 70.6 40.9 C70.9 43.4 71.5 45.9 72.2 48.5 C72.8 51.0 73.8 53.5 74.5 56.0 C75.3 58.6 76.3 61.1 76.9 63.6 C77.6 66.1 78.3 68.7 78.6 71.2 C78.9 73.7 79.0 76.2 78.8 78.8 C78.6 81.3 78.1 83.8 77.3 86.3 C76.5 88.9 75.4 91.4 74.1 93.9 C72.9 96.4 71.3 99.0 69.8 101.5 C68.3 104.0 66.6 106.5 65.2 109.1 C63.7 111.6 62.2 114.1 61.1 116.6 C60.0 119.2 59.0 121.7 58.5 124.2 C58.0 126.7 57.8 129.3 57.9 131.8 C58.1 134.3 59.1 138.1 59.4 139.4" fill="none" stroke="#34220e" stroke-width="5.6" opacity="0.74" stroke-linecap="round"/><path d="M69.8 149.9 C69.4 151.1 68.2 154.9 67.4 157.3 C66.5 159.8 65.5 162.3 64.7 164.8 C63.9 167.3 63.1 169.7 62.7 172.2 C62.2 174.7 62.0 177.2 62.0 179.7 C62.1 182.1 62.5 184.6 63.2 187.1 C63.8 189.6 64.8 192.1 65.8 194.5 C66.8 197.0 68.1 199.5 69.2 202.0 C70.2 204.5 71.4 206.9 72.2 209.4 C73.0 211.9 73.6 214.4 73.9 216.9 C74.1 219.4 74.0 221.8 73.6 224.3 C73.1 226.8 72.3 229.3 71.3 231.8 C70.3 234.2 69.0 236.7 67.8 239.2 C66.6 241.7 65.1 244.2 64.1 246.6 C63.1 249.1 62.1 251.6 61.6 254.1 C61.1 256.6 60.9 259.0 61.1 261.5 C61.3 264.0 62.0 266.5 63.0 269.0 C63.9 271.4 65.3 273.9 66.7 276.4 C68.0 278.9 69.8 281.4 71.1 283.8 C72.5 286.3 73.9 288.8 74.9 291.3 C75.8 293.8 76.5 296.3 76.6 298.7 C76.8 301.2 76.5 303.7 75.8 306.2 C75.1 308.7 73.8 311.1 72.5 313.6 C71.2 316.1 69.4 318.6 67.8 321.1 C66.3 323.5 64.5 326.0 63.3 328.5 C62.0 331.0 60.9 333.5 60.4 335.9 C59.9 338.4 59.8 340.9 60.2 343.4 C60.7 345.9 62.5 349.6 63.0 350.8" fill="none" stroke="#a8844a" stroke-width="6.7" opacity="0.65" stroke-linecap="round"/><path d="M60.7 75.6 C60.8 76.7 60.6 80.2 61.2 82.6 C61.8 84.9 62.9 87.3 64.2 89.6 C65.6 92.0 67.5 94.3 69.2 96.6 C71.0 99.0 73.2 101.3 74.9 103.7 C76.7 106.0 78.5 108.3 79.7 110.7 C80.8 113.0 81.7 115.4 82.0 117.7 C82.2 120.0 81.8 122.4 80.9 124.7 C80.0 127.1 78.4 129.4 76.7 131.8 C75.0 134.1 72.6 136.4 70.5 138.8 C68.5 141.1 66.0 143.5 64.3 145.8 C62.5 148.1 60.9 150.5 60.1 152.8 C59.3 155.2 59.0 157.5 59.6 159.8 C60.1 162.2 61.5 164.5 63.3 166.9 C65.2 169.2 67.9 171.6 70.6 173.9 C73.3 176.2 78.0 179.8 79.5 180.9" fill="none" stroke="#dcc084" stroke-width="4.6" opacity="0.63" stroke-linecap="round"/><path d="M13.4 -25.6 C12.7 -24.4 10.6 -20.6 9.2 -18.2 C7.8 -15.7 6.2 -13.2 4.9 -10.7 C3.6 -8.2 2.3 -5.7 1.5 -3.2 C0.6 -0.8 -0.1 1.7 -0.3 4.2 C-0.5 6.7 -0.3 9.2 0.2 11.7 C0.8 14.2 1.8 16.7 3.1 19.1 C4.3 21.6 6.0 24.1 7.6 26.6 C9.3 29.1 11.2 31.6 12.9 34.1 C14.6 36.6 16.4 39.0 17.6 41.5 C18.9 44.0 20.1 46.5 20.6 49.0 C21.1 51.5 21.2 54.0 20.8 56.5 C20.4 58.9 19.4 61.4 18.1 63.9 C16.7 66.4 14.8 68.9 12.7 71.4 C10.7 73.9 8.1 76.3 5.8 78.8 C3.5 81.3 0.9 83.8 -1.1 86.3 C-3.2 88.8 -5.2 91.3 -6.5 93.8 C-7.8 96.2 -8.7 98.7 -9.0 101.2 C-9.2 103.7 -8.0 107.4 -7.9 108.7" fill="none" stroke="#5a4020" stroke-width="4.6" opacity="0.82" stroke-linecap="round"/><path d="M11.0 162.3 C11.4 163.5 12.5 167.1 12.9 169.5 C13.4 171.9 13.7 174.3 13.8 176.7 C13.9 179.1 13.8 181.5 13.6 183.9 C13.4 186.3 12.9 188.8 12.4 191.2 C11.9 193.6 11.3 196.0 10.7 198.4 C10.1 200.8 9.4 203.2 8.8 205.6 C8.3 208.0 7.8 210.4 7.5 212.8 C7.2 215.2 7.1 217.7 7.2 220.1 C7.3 222.5 7.6 224.9 8.2 227.3 C8.8 229.7 9.7 232.1 10.7 234.5 C11.8 236.9 13.1 239.3 14.5 241.7 C15.9 244.2 17.6 246.6 19.2 249.0 C20.8 251.4 22.6 253.8 24.1 256.2 C25.7 258.6 27.2 261.0 28.5 263.4 C29.8 265.8 30.9 268.2 31.7 270.6 C32.5 273.1 33.1 275.5 33.3 277.9 C33.5 280.3 33.4 282.7 33.0 285.1 C32.6 287.5 31.3 291.1 31.0 292.3" fill="none" stroke="#d8b87c" stroke-width="5.4" opacity="0.95" stroke-linecap="round"/><path d="M85.3 128.0 C85.2 129.2 84.6 132.6 84.4 135.0 C84.2 137.3 84.1 139.6 84.1 141.9 C84.2 144.2 84.4 146.5 84.8 148.9 C85.2 151.2 85.8 153.5 86.6 155.8 C87.5 158.1 88.6 160.4 89.8 162.8 C91.0 165.1 92.5 167.4 94.1 169.7 C95.6 172.0 97.4 174.3 99.1 176.7 C100.8 179.0 102.7 181.3 104.4 183.6 C106.1 185.9 107.9 188.2 109.4 190.6 C110.8 192.9 112.3 195.2 113.4 197.5 C114.4 199.8 115.3 202.1 115.9 204.5 C116.4 206.8 116.5 210.3 116.6 211.4" fill="none" stroke="#5a4020" stroke-width="4.5" opacity="0.64" stroke-linecap="round"/><path d="M97.2 326.2 C97.0 327.5 96.7 331.2 96.3 333.7 C95.8 336.2 95.3 338.7 94.7 341.2 C94.1 343.7 93.3 346.2 92.6 348.7 C91.8 351.2 90.9 353.7 90.0 356.2 C89.2 358.7 88.2 361.2 87.4 363.7 C86.5 366.2 85.6 368.7 84.9 371.2 C84.1 373.7 83.4 376.2 82.8 378.7 C82.2 381.2 81.7 383.7 81.4 386.2 C81.0 388.6 80.8 391.1 80.7 393.6 C80.6 396.1 80.7 398.6 80.9 401.1 C81.1 403.6 81.4 406.1 81.7 408.6 C82.1 411.1 82.5 413.6 83.0 416.1 C83.4 418.6 83.9 421.1 84.3 423.6 C84.7 426.1 85.2 428.6 85.4 431.1 C85.7 433.6 85.9 436.1 85.9 438.6 C85.9 441.1 85.8 443.6 85.5 446.1 C85.3 448.6 84.8 451.1 84.2 453.6 C83.6 456.1 82.8 458.6 81.9 461.1 C81.0 463.6 80.0 466.1 78.9 468.6 C77.8 471.1 76.6 473.6 75.4 476.0 C74.3 478.5 73.1 481.0 72.0 483.5 C70.9 486.0 69.8 488.5 68.9 491.0 C68.0 493.5 67.2 496.0 66.6 498.5 C66.0 501.0 65.5 503.5 65.3 506.0 C65.1 508.5 65.0 511.0 65.2 513.5 C65.3 516.0 65.7 518.5 66.1 521.0 C66.6 523.5 67.2 526.0 67.9 528.5 C68.6 531.0 69.7 534.7 70.1 536.0" fill="none" stroke="#e2c88c" stroke-width="7.7" opacity="0.71" stroke-linecap="round"/><path d="M51.4 78.3 C51.0 79.5 50.1 83.1 48.9 85.6 C47.8 88.0 46.0 90.4 44.4 92.9 C42.7 95.3 40.6 97.7 39.1 100.2 C37.5 102.6 35.9 105.0 35.0 107.5 C34.1 109.9 33.6 112.3 33.8 114.8 C34.0 117.2 34.9 119.6 36.1 122.0 C37.4 124.5 39.3 126.9 41.1 129.3 C42.9 131.8 45.1 134.2 46.7 136.6 C48.2 139.1 49.8 141.5 50.4 143.9 C51.0 146.4 51.1 148.8 50.4 151.2 C49.6 153.7 48.0 156.1 46.0 158.5 C44.1 160.9 41.2 163.4 38.6 165.8 C36.1 168.2 33.0 170.7 30.8 173.1 C28.6 175.5 26.5 178.0 25.5 180.4 C24.5 182.8 24.9 186.5 24.8 187.7" fill="none" stroke="#34220e" stroke-width="5.7" opacity="0.73" stroke-linecap="round"/><path d="M41.2 16.1 C41.4 17.3 42.1 21.0 42.7 23.5 C43.2 25.9 43.8 28.4 44.4 30.8 C44.9 33.3 45.5 35.7 46.0 38.2 C46.4 40.6 46.9 43.1 47.1 45.6 C47.4 48.0 47.6 50.5 47.7 52.9 C47.7 55.4 47.6 57.8 47.3 60.3 C47.1 62.7 46.7 65.2 46.2 67.7 C45.7 70.1 45.0 72.6 44.4 75.0 C43.7 77.5 42.8 79.9 42.1 82.4 C41.3 84.8 40.4 87.3 39.7 89.7 C39.0 92.2 38.2 94.7 37.7 97.1 C37.1 99.6 36.7 102.0 36.4 104.5 C36.2 106.9 36.0 109.4 36.2 111.8 C36.3 114.3 36.9 118.0 37.1 119.2" fill="none" stroke="#6c4e28" stroke-width="7.4" opacity="0.90" stroke-linecap="round"/><path d="M99.8 162.2 C99.9 163.4 100.2 166.9 100.7 169.3 C101.1 171.7 101.8 174.0 102.5 176.4 C103.2 178.8 104.1 181.2 105.1 183.5 C106.0 185.9 107.1 188.3 108.1 190.6 C109.1 193.0 110.1 195.4 111.1 197.8 C112.0 200.1 112.8 202.5 113.5 204.9 C114.1 207.2 114.7 209.6 115.0 212.0 C115.2 214.4 115.3 216.7 115.2 219.1 C115.0 221.5 114.6 223.8 114.0 226.2 C113.4 228.6 112.5 231.0 111.6 233.3 C110.7 235.7 109.5 238.1 108.4 240.4 C107.3 242.8 106.1 245.2 105.0 247.6 C103.9 249.9 102.8 252.3 102.0 254.7 C101.1 257.1 100.4 259.4 100.0 261.8 C99.6 264.2 99.7 267.7 99.6 268.9" fill="none" stroke="#bc985c" stroke-width="4.1" opacity="0.86" stroke-linecap="round"/><path d="M84.2 98.2 C84.1 99.5 83.8 103.3 84.0 105.8 C84.1 108.3 84.5 110.9 85.1 113.4 C85.8 116.0 86.7 118.5 87.7 121.0 C88.8 123.6 90.1 126.1 91.4 128.6 C92.8 131.2 94.4 133.7 95.8 136.3 C97.3 138.8 98.8 141.3 100.1 143.9 C101.5 146.4 102.8 148.9 103.7 151.5 C104.7 154.0 105.5 156.6 106.0 159.1 C106.5 161.6 106.7 164.2 106.6 166.7 C106.5 169.2 106.1 171.8 105.4 174.3 C104.8 176.9 103.8 179.4 102.8 181.9 C101.8 184.5 100.6 187.0 99.4 189.5 C98.3 192.1 97.0 194.6 96.0 197.2 C95.0 199.7 94.0 202.2 93.4 204.8 C92.7 207.3 92.3 209.8 92.3 212.4 C92.3 214.9 92.6 217.4 93.3 220.0 C93.9 222.5 95.0 225.1 96.3 227.6 C97.6 230.1 99.3 232.7 101.1 235.2 C102.9 237.7 105.0 240.3 107.0 242.8 C108.9 245.4 111.1 247.9 112.9 250.4 C114.7 253.0 116.6 255.5 117.9 258.0 C119.3 260.6 120.5 263.1 121.2 265.7 C121.9 268.2 122.3 270.7 122.2 273.3 C122.1 275.8 121.5 278.3 120.7 280.9 C119.9 283.4 118.5 286.0 117.1 288.5 C115.7 291.0 113.9 293.6 112.3 296.1 C110.6 298.6 108.0 302.4 107.2 303.7" fill="none" stroke="#e2c88c" stroke-width="5.7" opacity="0.85" stroke-linecap="round"/><path d="M85.7 57.7 C85.4 58.9 84.6 62.5 84.2 64.9 C83.8 67.3 83.4 69.7 83.2 72.1 C83.1 74.6 83.1 77.0 83.4 79.4 C83.7 81.8 84.2 84.2 85.1 86.6 C86.0 89.0 87.1 91.4 88.6 93.9 C90.0 96.3 91.8 98.7 93.7 101.1 C95.6 103.5 97.8 105.9 100.1 108.3 C102.3 110.8 104.8 113.2 107.1 115.6 C109.4 118.0 111.8 120.4 113.9 122.8 C115.9 125.2 118.0 127.6 119.5 130.1 C121.1 132.5 122.5 134.9 123.4 137.3 C124.3 139.7 124.8 142.1 124.9 144.5 C125.0 147.0 124.1 150.6 123.9 151.8" fill="none" stroke="#c8a468" stroke-width="5.0" opacity="0.94" stroke-linecap="round"/><path d="M39.8 197.3 C39.7 198.6 39.6 202.4 39.2 204.9 C38.9 207.4 38.4 210.0 37.8 212.5 C37.2 215.1 36.4 217.6 35.7 220.1 C34.9 222.7 34.0 225.2 33.2 227.7 C32.4 230.3 31.5 232.8 30.8 235.3 C30.1 237.9 29.4 240.4 29.0 242.9 C28.5 245.5 28.1 248.0 27.9 250.6 C27.8 253.1 27.8 255.6 28.0 258.2 C28.3 260.7 28.7 263.2 29.3 265.8 C29.9 268.3 30.8 270.8 31.7 273.4 C32.6 275.9 33.7 278.4 34.8 281.0 C35.9 283.5 37.1 286.1 38.3 288.6 C39.4 291.1 40.5 293.7 41.5 296.2 C42.5 298.7 43.4 301.3 44.0 303.8 C44.6 306.3 45.1 308.9 45.3 311.4 C45.5 313.9 45.5 316.5 45.2 319.0 C44.9 321.5 44.3 324.1 43.5 326.6 C42.8 329.2 41.7 331.7 40.6 334.2 C39.5 336.8 38.1 339.3 36.8 341.8 C35.5 344.4 34.0 346.9 32.7 349.4 C31.4 352.0 29.7 355.8 29.0 357.0" fill="none" stroke="#46301a" stroke-width="7.4" opacity="0.87" stroke-linecap="round"/><path d="M-7.3 180.0 C-7.5 181.3 -8.6 185.1 -8.6 187.6 C-8.6 190.2 -8.1 192.7 -7.4 195.3 C-6.7 197.8 -5.5 200.4 -4.4 202.9 C-3.3 205.5 -1.9 208.0 -1.0 210.6 C-0.1 213.1 0.8 215.7 1.0 218.2 C1.3 220.8 1.1 223.3 0.4 225.9 C-0.2 228.4 -1.5 231.0 -3.0 233.5 C-4.4 236.1 -6.5 238.6 -8.2 241.1 C-9.9 243.7 -11.9 246.2 -13.2 248.8 C-14.6 251.3 -15.7 253.9 -16.2 256.4 C-16.6 259.0 -16.5 261.5 -15.9 264.1 C-15.3 266.6 -13.9 269.2 -12.6 271.7 C-11.2 274.3 -9.2 276.8 -7.7 279.4 C-6.2 281.9 -4.5 284.5 -3.7 287.0 C-2.8 289.6 -2.2 292.1 -2.5 294.6 C-2.7 297.2 -3.7 299.7 -5.1 302.3 C-6.5 304.8 -8.8 307.4 -10.9 309.9 C-13.0 312.5 -15.7 315.0 -17.7 317.6 C-19.7 320.1 -21.7 322.7 -22.9 325.2 C-24.0 327.8 -24.6 330.3 -24.4 332.9 C-24.2 335.4 -23.1 338.0 -21.7 340.5 C-20.3 343.1 -17.9 345.6 -15.9 348.1 C-14.0 350.7 -11.5 353.2 -9.9 355.8 C-8.2 358.3 -6.9 362.2 -6.3 363.4" fill="none" stroke="#2a1a0a" stroke-width="5.6" opacity="0.63" stroke-linecap="round"/><path d="M21.2 72.9 C21.2 74.2 21.0 77.9 21.2 80.3 C21.3 82.8 21.7 85.3 22.2 87.8 C22.8 90.2 23.5 92.7 24.3 95.2 C25.0 97.6 26.0 100.1 26.9 102.6 C27.8 105.1 28.8 107.5 29.7 110.0 C30.5 112.5 31.4 114.9 32.0 117.4 C32.6 119.9 33.2 122.3 33.5 124.8 C33.7 127.3 33.8 129.8 33.6 132.2 C33.4 134.7 33.0 137.2 32.3 139.6 C31.7 142.1 30.8 144.6 29.7 147.1 C28.7 149.5 27.3 152.0 26.0 154.5 C24.7 156.9 23.3 159.4 21.9 161.9 C20.6 164.4 19.1 166.8 18.0 169.3 C16.8 171.8 15.7 174.2 14.9 176.7 C14.1 179.2 13.5 181.7 13.2 184.1 C12.9 186.6 13.0 189.1 13.3 191.5 C13.6 194.0 14.3 196.5 15.2 198.9 C16.0 201.4 17.3 203.9 18.6 206.4 C19.9 208.8 21.4 211.3 22.9 213.8 C24.4 216.2 26.0 218.7 27.5 221.2 C28.9 223.7 30.7 227.4 31.4 228.6" fill="none" stroke="#46301a" stroke-width="5.9" opacity="0.83" stroke-linecap="round"/><path d="M60.8 236.1 C61.1 237.3 61.7 240.9 62.4 243.3 C63.1 245.7 63.9 248.1 65.0 250.5 C66.1 252.9 67.4 255.3 68.8 257.7 C70.2 260.1 71.9 262.5 73.5 264.9 C75.1 267.3 76.9 269.7 78.5 272.1 C80.1 274.5 81.8 276.9 83.2 279.3 C84.6 281.7 85.9 284.1 86.8 286.5 C87.8 288.9 88.5 291.3 88.9 293.7 C89.4 296.0 89.4 298.4 89.4 300.8 C89.3 303.2 88.8 305.6 88.4 308.0 C87.9 310.4 87.2 312.8 86.6 315.2 C86.0 317.6 85.2 321.2 85.0 322.4" fill="none" stroke="#a8844a" stroke-width="6.2" opacity="0.81" stroke-linecap="round"/><path d="M41.4 132.9 C41.6 134.1 42.2 137.9 42.8 140.4 C43.5 142.9 44.3 145.3 45.1 147.8 C45.9 150.3 46.8 152.8 47.5 155.3 C48.2 157.8 48.9 160.3 49.4 162.8 C49.8 165.3 50.1 167.8 50.1 170.3 C50.0 172.8 49.7 175.3 49.2 177.8 C48.6 180.3 47.8 182.8 46.7 185.3 C45.7 187.8 44.4 190.3 43.1 192.8 C41.8 195.3 40.3 197.8 38.9 200.3 C37.6 202.8 36.2 205.3 35.2 207.8 C34.1 210.3 33.2 212.7 32.7 215.2 C32.2 217.7 31.9 220.2 32.1 222.7 C32.2 225.2 32.8 227.7 33.6 230.2 C34.4 232.7 35.6 235.2 36.8 237.7 C38.1 240.2 39.7 242.7 41.1 245.2 C42.5 247.7 44.6 251.4 45.3 252.7" fill="none" stroke="#d8b87c" stroke-width="5.0" opacity="0.93" stroke-linecap="round"/><path d="M79.6 55.5 C79.0 56.6 77.3 60.0 76.1 62.3 C75.0 64.6 73.8 66.8 72.8 69.1 C71.8 71.4 70.9 73.7 70.3 75.9 C69.7 78.2 69.3 80.5 69.2 82.8 C69.0 85.1 69.2 87.3 69.5 89.6 C69.8 91.9 70.5 94.2 71.0 96.4 C71.6 98.7 72.4 101.0 72.9 103.3 C73.5 105.5 74.0 107.8 74.2 110.1 C74.4 112.4 74.4 114.7 74.0 116.9 C73.6 119.2 72.9 121.5 71.8 123.8 C70.8 126.0 69.3 128.3 67.7 130.6 C66.2 132.9 63.4 136.3 62.5 137.4" fill="none" stroke="#bc985c" stroke-width="5.6" opacity="0.91" stroke-linecap="round"/><path d="M34.2 166.9 C34.4 168.1 34.7 171.9 35.4 174.4 C36.2 176.9 37.5 179.5 38.8 182.0 C40.0 184.5 41.7 187.0 43.0 189.5 C44.4 192.1 45.8 194.6 46.7 197.1 C47.6 199.6 48.2 202.1 48.2 204.6 C48.3 207.2 47.8 209.7 46.8 212.2 C45.9 214.7 44.3 217.2 42.6 219.7 C40.9 222.3 38.6 224.8 36.6 227.3 C34.7 229.8 32.4 232.3 30.8 234.8 C29.2 237.4 27.6 239.9 26.9 242.4 C26.1 244.9 25.9 247.4 26.3 249.9 C26.6 252.5 27.8 255.0 29.2 257.5 C30.6 260.0 32.7 262.5 34.6 265.0 C36.6 267.6 39.0 270.1 40.8 272.6 C42.6 275.1 44.4 277.6 45.4 280.1 C46.4 282.7 46.9 285.2 46.6 287.7 C46.4 290.2 45.3 292.7 43.7 295.3 C42.2 297.8 39.8 300.3 37.4 302.8 C35.0 305.3 31.9 307.8 29.3 310.4 C26.8 312.9 24.0 315.4 22.2 317.9 C20.3 320.4 18.8 322.9 18.2 325.5 C17.7 328.0 17.9 330.5 18.8 333.0 C19.8 335.5 21.7 338.0 23.8 340.6 C25.9 343.1 30.2 346.9 31.5 348.1" fill="none" stroke="#dcc084" stroke-width="4.9" opacity="0.86" stroke-linecap="round"/><path d="M62.6 305.5 C62.1 306.8 60.9 310.6 59.8 313.1 C58.8 315.6 57.4 318.1 56.2 320.6 C54.9 323.2 53.5 325.7 52.2 328.2 C51.0 330.7 49.7 333.2 48.7 335.7 C47.7 338.2 46.8 340.8 46.3 343.3 C45.7 345.8 45.4 348.3 45.5 350.8 C45.5 353.3 45.9 355.9 46.6 358.4 C47.3 360.9 48.3 363.4 49.5 365.9 C50.7 368.4 52.2 371.0 53.7 373.5 C55.2 376.0 57.0 378.5 58.6 381.0 C60.2 383.5 61.8 386.1 63.1 388.6 C64.5 391.1 65.7 393.6 66.5 396.1 C67.3 398.6 67.9 401.2 68.0 403.7 C68.1 406.2 67.8 408.7 67.2 411.2 C66.5 413.7 65.4 416.3 64.1 418.8 C62.7 421.3 60.9 423.8 59.1 426.3 C57.3 428.8 55.1 431.4 53.1 433.9 C51.1 436.4 49.0 438.9 47.2 441.4 C45.4 443.9 43.6 446.5 42.4 449.0 C41.1 451.5 40.1 454.0 39.6 456.5 C39.2 459.0 39.1 461.6 39.6 464.1 C40.0 466.6 41.0 469.1 42.3 471.6 C43.6 474.1 45.4 476.7 47.4 479.2 C49.3 481.7 52.9 485.5 54.0 486.7" fill="none" stroke="#d8b87c" stroke-width="4.1" opacity="0.82" stroke-linecap="round"/><path d="M8.8 275.8 C9.2 277.0 10.3 280.7 10.8 283.1 C11.3 285.5 11.9 287.9 12.0 290.3 C12.1 292.7 12.0 295.1 11.5 297.5 C10.9 299.9 10.0 302.3 8.8 304.7 C7.6 307.1 5.9 309.5 4.3 311.9 C2.7 314.3 0.8 316.7 -0.9 319.2 C-2.5 321.6 -4.2 324.0 -5.5 326.4 C-6.7 328.8 -7.7 331.2 -8.1 333.6 C-8.6 336.0 -8.6 338.4 -8.2 340.8 C-7.8 343.2 -6.8 345.6 -5.8 348.0 C-4.8 350.4 -3.3 352.8 -2.1 355.2 C-0.9 357.7 0.5 360.1 1.3 362.5 C2.2 364.9 2.9 367.3 2.9 369.7 C2.9 372.1 2.4 374.5 1.4 376.9 C0.4 379.3 -1.2 381.7 -3.1 384.1 C-4.9 386.5 -7.4 388.9 -9.7 391.3 C-11.9 393.7 -14.6 396.2 -16.6 398.6 C-18.6 401.0 -20.9 404.6 -21.8 405.8" fill="none" stroke="#34220e" stroke-width="6.8" opacity="0.82" stroke-linecap="round"/><path d="M43.1 243.4 C42.7 244.6 41.6 248.3 41.0 250.8 C40.4 253.2 39.8 255.7 39.4 258.1 C39.1 260.6 38.9 263.0 39.1 265.5 C39.3 267.9 39.7 270.3 40.4 272.8 C41.2 275.2 42.3 277.7 43.6 280.1 C44.9 282.6 46.6 285.0 48.3 287.5 C50.1 289.9 52.2 292.4 54.2 294.8 C56.2 297.3 58.4 299.7 60.3 302.2 C62.3 304.6 64.3 307.1 65.9 309.5 C67.5 312.0 68.9 314.4 70.0 316.9 C71.0 319.3 71.7 321.8 72.0 324.2 C72.3 326.7 72.2 329.1 71.7 331.6 C71.3 334.0 70.4 336.5 69.3 338.9 C68.2 341.4 66.8 343.8 65.4 346.3 C64.0 348.7 62.3 351.2 60.8 353.6 C59.4 356.1 57.9 358.5 56.9 361.0 C55.8 363.4 54.9 365.9 54.5 368.3 C54.1 370.8 54.0 373.2 54.5 375.7 C55.0 378.1 56.0 380.6 57.4 383.0 C58.8 385.5 60.7 387.9 62.9 390.4 C65.1 392.8 69.2 396.5 70.5 397.7" fill="none" stroke="#bc985c" stroke-width="4.1" opacity="0.91" stroke-linecap="round"/><path d="M70.5 80.1 C70.1 81.3 69.0 85.0 68.3 87.5 C67.5 89.9 66.6 92.4 65.8 94.8 C65.1 97.3 64.3 99.8 63.8 102.2 C63.4 104.7 63.0 107.1 63.0 109.6 C63.0 112.0 63.3 114.5 63.9 117.0 C64.4 119.4 65.4 121.9 66.5 124.3 C67.6 126.8 69.1 129.3 70.6 131.7 C72.1 134.2 73.9 136.6 75.5 139.1 C77.2 141.5 79.0 144.0 80.4 146.5 C81.9 148.9 83.3 151.4 84.3 153.8 C85.3 156.3 86.1 158.8 86.4 161.2 C86.7 163.7 86.6 166.1 86.2 168.6 C85.8 171.0 84.9 173.5 83.8 176.0 C82.7 178.4 81.1 180.9 79.6 183.3 C78.1 185.8 76.3 188.3 74.8 190.7 C73.2 193.2 71.1 196.9 70.4 198.1" fill="none" stroke="#a8844a" stroke-width="7.6" opacity="0.67" stroke-linecap="round"/><path d="M54.7 194.6 C55.5 195.8 58.1 199.4 59.4 201.8 C60.8 204.2 62.0 206.6 62.6 209.0 C63.2 211.4 63.4 213.7 63.0 216.1 C62.6 218.5 61.5 220.9 60.3 223.3 C59.1 225.7 57.2 228.1 55.7 230.5 C54.2 232.8 52.4 235.2 51.3 237.6 C50.2 240.0 49.3 242.4 49.2 244.8 C49.2 247.2 49.7 249.6 50.9 251.9 C52.1 254.3 54.1 256.7 56.3 259.1 C58.4 261.5 61.3 263.9 63.7 266.3 C66.1 268.7 68.9 271.0 70.7 273.4 C72.4 275.8 74.0 278.2 74.4 280.6 C74.9 283.0 74.6 285.4 73.6 287.8 C72.5 290.1 70.4 292.5 68.3 294.9 C66.2 297.3 62.2 300.9 60.9 302.1" fill="none" stroke="#5a4020" stroke-width="3.6" opacity="0.61" stroke-linecap="round"/></g><g filter="url(#b1)"><path d="M60.2 -29.6 C60.8 -28.4 62.8 -24.9 63.9 -22.5 C65.0 -20.2 66.2 -17.8 67.0 -15.5 C67.8 -13.1 68.4 -10.8 68.7 -8.4 C69.0 -6.1 69.0 -3.7 68.7 -1.4 C68.4 0.9 67.8 3.3 67.0 5.6 C66.2 8.0 65.1 10.3 64.0 12.7 C63.0 15.0 61.7 17.4 60.7 19.7 C59.7 22.1 58.6 24.4 58.0 26.7 C57.5 29.1 57.1 31.4 57.2 33.8 C57.3 36.1 58.5 39.6 58.7 40.8" fill="none" stroke="#e8d49c" stroke-width="2.5" opacity="0.53" stroke-linecap="round"/><path d="M48.0 -4.0 C48.3 -2.7 49.1 1.0 49.9 3.5 C50.6 6.0 51.7 8.5 52.7 11.0 C53.8 13.4 55.0 15.9 56.1 18.4 C57.3 20.9 58.5 23.4 59.6 25.9 C60.7 28.4 61.7 30.9 62.5 33.4 C63.3 35.9 64.0 38.3 64.3 40.8 C64.7 43.3 64.9 45.8 64.8 48.3 C64.7 50.8 64.3 53.3 63.8 55.8 C63.4 58.3 62.6 60.8 61.8 63.2 C61.0 65.7 60.1 68.2 59.2 70.7 C58.4 73.2 57.5 75.7 56.9 78.2 C56.2 80.7 55.6 83.2 55.4 85.7 C55.1 88.1 55.1 90.6 55.4 93.1 C55.7 95.6 56.3 98.1 57.1 100.6 C58.0 103.1 59.2 105.6 60.5 108.1 C61.9 110.6 63.5 113.1 65.1 115.5 C66.7 118.0 68.5 120.5 70.1 123.0 C71.6 125.5 73.3 128.0 74.5 130.5 C75.8 133.0 77.0 135.5 77.7 138.0 C78.5 140.4 78.9 142.9 79.0 145.4 C79.1 147.9 78.8 150.4 78.2 152.9 C77.6 155.4 76.0 159.1 75.6 160.4" fill="none" stroke="#50381a" stroke-width="3.0" opacity="0.63" stroke-linecap="round"/><path d="M35.1 3.3 C35.7 4.5 37.2 8.0 38.7 10.4 C40.2 12.8 42.2 15.2 44.2 17.5 C46.1 19.9 48.4 22.3 50.2 24.7 C52.1 27.1 54.1 29.4 55.4 31.8 C56.7 34.2 57.7 36.6 58.2 38.9 C58.6 41.3 58.4 43.7 57.9 46.1 C57.4 48.4 56.2 50.8 55.0 53.2 C53.9 55.6 52.2 57.9 51.0 60.3 C49.8 62.7 48.5 65.1 48.0 67.4 C47.4 69.8 47.2 72.2 47.8 74.6 C48.4 77.0 51.0 80.5 51.7 81.7" fill="none" stroke="#3a2610" stroke-width="3.1" opacity="0.52" stroke-linecap="round"/><path d="M67.3 134.0 C67.1 135.2 66.5 138.8 65.9 141.1 C65.3 143.5 64.4 145.8 63.5 148.2 C62.7 150.5 61.6 152.9 60.7 155.2 C59.9 157.6 58.9 159.9 58.3 162.3 C57.7 164.7 57.2 167.0 57.0 169.4 C56.9 171.7 57.0 174.1 57.4 176.4 C57.8 178.8 58.6 181.1 59.5 183.5 C60.5 185.9 61.8 188.2 63.1 190.6 C64.4 192.9 66.0 195.3 67.3 197.6 C68.7 200.0 70.2 202.3 71.3 204.7 C72.3 207.0 73.3 209.4 73.8 211.8 C74.3 214.1 74.5 216.5 74.3 218.8 C74.0 221.2 73.3 223.5 72.4 225.9 C71.4 228.2 69.2 231.8 68.5 232.9" fill="none" stroke="#50381a" stroke-width="2.4" opacity="0.78" stroke-linecap="round"/><path d="M4.0 29.6 C4.1 30.8 4.6 34.5 4.8 36.9 C5.0 39.4 5.3 41.8 5.3 44.2 C5.4 46.7 5.3 49.1 5.1 51.6 C4.8 54.0 4.3 56.5 3.7 58.9 C3.0 61.4 2.1 63.8 1.0 66.3 C-0.0 68.7 -1.3 71.2 -2.6 73.6 C-3.9 76.1 -5.4 78.5 -6.7 80.9 C-8.1 83.4 -9.6 85.8 -10.8 88.3 C-12.0 90.7 -13.2 93.2 -14.1 95.6 C-15.0 98.1 -15.7 100.5 -16.1 103.0 C-16.5 105.4 -16.6 107.9 -16.5 110.3 C-16.4 112.8 -16.0 115.2 -15.5 117.6 C-15.0 120.1 -14.2 122.5 -13.5 125.0 C-12.8 127.4 -11.9 129.9 -11.3 132.3 C-10.6 134.8 -9.9 137.2 -9.6 139.7 C-9.2 142.1 -9.0 144.6 -9.1 147.0 C-9.3 149.4 -9.7 151.9 -10.5 154.3 C-11.3 156.8 -12.4 159.2 -13.8 161.7 C-15.1 164.1 -17.7 167.8 -18.5 169.0" fill="none" stroke="#ecd8a4" stroke-width="2.1" opacity="0.51" stroke-linecap="round"/><path d="M66.8 77.4 C66.9 78.6 66.8 82.3 67.1 84.7 C67.4 87.2 68.0 89.6 68.6 92.0 C69.3 94.5 70.2 96.9 71.0 99.4 C71.7 101.8 72.7 104.3 73.4 106.7 C74.1 109.2 74.8 111.6 75.1 114.1 C75.5 116.5 75.7 118.9 75.6 121.4 C75.4 123.8 75.0 126.3 74.3 128.7 C73.6 131.2 72.6 133.6 71.5 136.1 C70.4 138.5 68.9 141.0 67.6 143.4 C66.3 145.8 64.8 148.3 63.5 150.7 C62.3 153.2 61.1 155.6 60.3 158.1 C59.4 160.5 58.8 163.0 58.6 165.4 C58.3 167.9 58.4 170.3 58.9 172.7 C59.3 175.2 60.1 177.6 61.1 180.1 C62.0 182.5 63.4 185.0 64.6 187.4 C65.8 189.9 67.3 192.3 68.4 194.8 C69.6 197.2 70.7 199.7 71.4 202.1 C72.1 204.5 72.6 207.0 72.7 209.4 C72.7 211.9 72.3 214.3 71.5 216.8 C70.8 219.2 69.6 221.7 68.2 224.1 C66.8 226.6 64.9 229.0 63.2 231.4 C61.4 233.9 59.4 236.3 57.7 238.8 C56.0 241.2 53.8 244.9 53.1 246.1" fill="none" stroke="#50381a" stroke-width="2.8" opacity="0.56" stroke-linecap="round"/><path d="M53.2 32.9 C52.8 34.1 51.7 37.8 50.7 40.2 C49.7 42.7 48.2 45.1 47.2 47.6 C46.2 50.0 45.1 52.5 44.7 54.9 C44.3 57.4 44.3 59.8 44.8 62.3 C45.4 64.7 46.7 67.2 48.1 69.6 C49.5 72.1 51.6 74.5 53.3 76.9 C55.0 79.4 57.0 81.8 58.2 84.3 C59.4 86.7 60.3 89.2 60.5 91.6 C60.7 94.1 60.1 96.5 59.2 99.0 C58.3 101.4 56.5 103.9 55.0 106.3 C53.5 108.7 51.5 111.2 50.2 113.6 C49.0 116.1 47.8 118.5 47.5 121.0 C47.2 123.4 47.6 125.9 48.7 128.3 C49.7 130.8 51.7 133.2 53.6 135.7 C55.6 138.1 58.3 140.5 60.4 143.0 C62.4 145.4 64.7 147.9 65.9 150.3 C67.0 152.8 67.7 155.2 67.5 157.7 C67.3 160.1 66.1 162.6 64.6 165.0 C63.1 167.5 60.6 169.9 58.6 172.3 C56.7 174.8 54.2 177.2 52.8 179.7 C51.5 182.1 50.4 184.6 50.4 187.0 C50.5 189.5 51.5 191.9 53.1 194.4 C54.7 196.8 57.4 199.3 59.9 201.7 C62.4 204.1 66.7 207.8 68.0 209.0" fill="none" stroke="#3a2610" stroke-width="1.6" opacity="0.72" stroke-linecap="round"/><path d="M87.5 250.3 C87.7 251.5 88.5 254.9 88.9 257.3 C89.4 259.6 90.0 261.9 90.3 264.2 C90.7 266.5 91.0 268.8 91.1 271.1 C91.3 273.5 91.3 275.8 91.0 278.1 C90.8 280.4 90.4 282.7 89.8 285.0 C89.2 287.4 88.4 289.7 87.5 292.0 C86.6 294.3 85.5 296.6 84.5 298.9 C83.5 301.2 82.4 303.6 81.5 305.9 C80.5 308.2 79.6 310.5 78.9 312.8 C78.3 315.1 77.7 317.5 77.5 319.8 C77.3 322.1 77.3 324.4 77.6 326.7 C77.8 329.0 78.4 331.3 79.0 333.7 C79.7 336.0 80.7 338.3 81.6 340.6 C82.5 342.9 83.7 345.2 84.6 347.6 C85.5 349.9 86.8 353.3 87.2 354.5" fill="none" stroke="#c8a868" stroke-width="1.8" opacity="0.63" stroke-linecap="round"/><path d="M93.0 32.9 C92.2 34.0 89.9 37.4 88.2 39.6 C86.5 41.8 84.4 44.1 82.7 46.3 C81.1 48.5 79.4 50.8 78.3 53.0 C77.2 55.2 76.4 57.5 76.2 59.7 C76.0 61.9 76.4 64.2 76.9 66.4 C77.5 68.6 78.6 70.8 79.4 73.1 C80.2 75.3 81.4 77.5 81.7 79.8 C82.1 82.0 82.2 84.2 81.5 86.5 C80.9 88.7 79.5 90.9 77.7 93.2 C75.9 95.4 71.9 98.7 70.7 99.8" fill="none" stroke="#3a2610" stroke-width="2.4" opacity="0.68" stroke-linecap="round"/><path d="M94.5 -24.7 C94.6 -23.5 95.3 -20.0 94.8 -17.7 C94.4 -15.4 93.1 -13.1 91.8 -10.7 C90.5 -8.4 88.4 -6.1 87.0 -3.8 C85.6 -1.4 84.0 0.9 83.5 3.2 C82.9 5.5 82.8 7.9 83.8 10.2 C84.7 12.5 86.7 14.9 89.1 17.2 C91.4 19.5 95.0 21.8 98.1 24.2 C101.2 26.5 105.0 28.8 107.6 31.1 C110.2 33.5 112.7 35.8 113.8 38.1 C114.8 40.4 113.9 43.9 113.9 45.1" fill="none" stroke="#3a2610" stroke-width="1.9" opacity="0.75" stroke-linecap="round"/><path d="M17.0 32.6 C17.2 33.9 17.3 37.7 17.9 40.2 C18.6 42.7 19.8 45.2 21.1 47.8 C22.3 50.3 24.1 52.8 25.5 55.4 C27.0 57.9 28.6 60.4 29.8 63.0 C30.9 65.5 31.9 68.0 32.3 70.5 C32.6 73.1 32.6 75.6 32.0 78.1 C31.4 80.7 30.2 83.2 28.8 85.7 C27.4 88.3 25.4 90.8 23.7 93.3 C21.9 95.9 19.9 98.4 18.4 100.9 C16.9 103.4 15.5 106.0 14.9 108.5 C14.2 111.0 14.0 113.6 14.5 116.1 C15.0 118.6 16.2 121.2 17.7 123.7 C19.2 126.2 21.5 128.8 23.6 131.3 C25.6 133.8 28.2 136.3 30.1 138.9 C32.1 141.4 34.0 143.9 35.1 146.5 C36.2 149.0 36.8 151.5 36.7 154.1 C36.5 156.6 35.5 159.1 34.0 161.7 C32.5 164.2 30.2 166.7 27.9 169.2 C25.6 171.8 22.7 174.3 20.4 176.8 C18.1 179.4 15.2 183.2 14.1 184.4" fill="none" stroke="#c8a868" stroke-width="3.3" opacity="0.72" stroke-linecap="round"/><path d="M49.3 278.0 C49.5 279.2 50.1 282.6 50.7 284.9 C51.3 287.2 52.0 289.5 52.8 291.7 C53.5 294.0 54.4 296.3 55.3 298.6 C56.1 300.9 57.0 303.2 57.8 305.5 C58.6 307.8 59.4 310.1 60.0 312.4 C60.6 314.6 61.2 316.9 61.5 319.2 C61.8 321.5 62.0 323.8 62.0 326.1 C62.0 328.4 61.8 330.7 61.4 333.0 C61.1 335.3 60.5 337.5 60.0 339.8 C59.4 342.1 58.3 345.6 57.9 346.7" fill="none" stroke="#2c1c0c" stroke-width="2.2" opacity="0.45" stroke-linecap="round"/><path d="M95.3 313.2 C95.8 314.5 97.2 318.3 97.9 320.8 C98.5 323.4 99.0 325.9 99.3 328.4 C99.5 331.0 99.5 333.5 99.2 336.0 C99.0 338.6 98.4 341.1 97.7 343.7 C97.1 346.2 96.1 348.7 95.1 351.3 C94.2 353.8 93.0 356.3 92.1 358.9 C91.2 361.4 90.2 363.9 89.5 366.5 C88.9 369.0 88.3 371.5 88.2 374.1 C88.0 376.6 88.1 379.1 88.6 381.7 C89.0 384.2 89.8 386.8 90.8 389.3 C91.8 391.8 93.2 394.4 94.6 396.9 C95.9 399.4 97.6 402.0 99.0 404.5 C100.5 407.0 102.0 409.6 103.2 412.1 C104.4 414.6 105.5 417.2 106.1 419.7 C106.7 422.2 107.1 424.8 107.0 427.3 C106.9 429.9 106.4 432.4 105.7 434.9 C104.9 437.5 103.7 440.0 102.4 442.5 C101.1 445.1 99.5 447.6 98.1 450.1 C96.6 452.7 95.0 455.2 93.7 457.7 C92.5 460.3 91.3 462.8 90.6 465.3 C90.0 467.9 89.6 470.4 89.7 473.0 C89.8 475.5 90.4 478.0 91.4 480.6 C92.3 483.1 94.7 486.9 95.4 488.2" fill="none" stroke="#c8a868" stroke-width="2.4" opacity="0.62" stroke-linecap="round"/><path d="M20.4 8.1 C20.3 9.3 19.6 12.9 19.6 15.3 C19.6 17.7 19.8 20.1 20.3 22.5 C20.8 24.9 21.6 27.3 22.5 29.7 C23.4 32.0 24.7 34.4 25.9 36.8 C27.0 39.2 28.4 41.6 29.5 44.0 C30.7 46.4 31.8 48.8 32.5 51.2 C33.3 53.6 33.8 55.9 34.0 58.3 C34.2 60.7 34.0 63.1 33.5 65.5 C33.0 67.9 32.2 70.3 31.2 72.7 C30.3 75.1 29.1 77.5 28.0 79.8 C27.0 82.2 25.8 84.6 25.1 87.0 C24.3 89.4 23.6 91.8 23.5 94.2 C23.3 96.6 23.5 99.0 24.1 101.4 C24.7 103.7 25.8 106.1 27.1 108.5 C28.4 110.9 30.1 113.3 31.8 115.7 C33.4 118.1 35.4 120.5 36.9 122.9 C38.5 125.2 40.1 127.6 41.1 130.0 C42.1 132.4 42.9 134.8 43.0 137.2 C43.2 139.6 42.4 143.2 42.2 144.4" fill="none" stroke="#d8bc80" stroke-width="2.1" opacity="0.80" stroke-linecap="round"/><path d="M34.9 -11.8 C34.9 -10.6 34.9 -6.9 34.6 -4.5 C34.2 -2.1 33.4 0.3 32.7 2.7 C32.1 5.1 31.2 7.6 30.7 10.0 C30.2 12.4 29.8 14.8 29.9 17.2 C30.1 19.6 30.6 22.1 31.5 24.5 C32.3 26.9 33.8 29.3 35.1 31.7 C36.5 34.1 38.3 36.6 39.7 39.0 C41.0 41.4 42.4 43.8 43.2 46.2 C44.0 48.6 44.4 51.1 44.3 53.5 C44.2 55.9 43.4 58.3 42.6 60.7 C41.7 63.1 40.3 65.6 39.3 68.0 C38.2 70.4 37.0 72.8 36.4 75.2 C35.9 77.6 35.6 80.1 35.9 82.5 C36.3 84.9 37.4 87.3 38.7 89.7 C40.1 92.1 42.2 94.6 44.0 97.0 C45.8 99.4 48.1 101.8 49.6 104.2 C51.1 106.6 52.6 109.1 53.1 111.5 C53.7 113.9 53.7 116.3 53.1 118.7 C52.5 121.1 50.3 124.8 49.8 126.0" fill="none" stroke="#2c1c0c" stroke-width="2.7" opacity="0.81" stroke-linecap="round"/><path d="M25.8 23.0 C26.1 24.2 26.6 27.9 27.4 30.4 C28.3 32.8 29.5 35.3 30.7 37.7 C32.0 40.2 33.5 42.6 34.9 45.1 C36.2 47.6 37.8 50.0 38.8 52.5 C39.9 54.9 40.9 57.4 41.3 59.8 C41.8 62.3 41.9 64.7 41.6 67.2 C41.2 69.7 40.4 72.1 39.3 74.6 C38.3 77.0 36.7 79.5 35.2 81.9 C33.7 84.4 31.8 86.8 30.4 89.3 C29.0 91.7 27.5 94.2 26.6 96.7 C25.8 99.1 25.2 101.6 25.2 104.0 C25.3 106.5 25.9 108.9 27.0 111.4 C28.1 113.8 29.8 116.3 31.7 118.8 C33.6 121.2 37.2 124.9 38.2 126.1" fill="none" stroke="#ecd8a4" stroke-width="2.4" opacity="0.81" stroke-linecap="round"/></g><path d="M0.0 0.0 C5.0 -9.7 28.0 -5.0 30.0 0.0 C32.0 5.0 17.0 20.3 12.0 30.0 C7.0 39.7 2.0 63.0 0.0 58.0 C-2.0 53.0 -5.0 9.7 0.0 0.0 Z" fill="#16110e" opacity="0.9" filter="url(#b2)"/><path d="M0.0 70.0 C1.8 64.3 7.8 61.8 10.6 63.6 C13.4 65.4 17.3 74.6 17.0 80.6 C16.6 86.6 11.3 96.8 8.5 99.7 C5.7 102.5 1.4 102.5 0.0 97.5 C-1.4 92.6 -1.8 75.6 0.0 70.0 Z" fill="#16110e" opacity="0.9" filter="url(#b2)"/><path d="M0.0 131.5 C1.4 126.5 6.4 124.4 8.5 127.2 C10.6 130.1 13.4 142.8 12.7 148.4 C12.0 154.1 6.4 159.7 4.2 161.2 C2.1 162.6 0.7 161.9 0.0 156.9 C-0.7 152.0 -1.4 136.4 0.0 131.5 Z" fill="#16110e" opacity="0.9" filter="url(#b2)"/><path d="M0.0 239.6 C2.5 236.4 11.3 240.3 14.8 243.9 C18.4 247.4 22.3 256.9 21.2 260.8 C20.1 264.7 12.0 266.8 8.5 267.2 C4.9 267.5 1.4 267.5 0.0 262.9 C-1.4 258.3 -2.5 242.8 0.0 239.6 Z" fill="#16110e" opacity="0.9" filter="url(#b2)"/><path d="M6.4 282.0 C10.6 279.9 24.4 287.7 29.7 292.6 C35.0 297.6 39.9 307.5 38.2 311.7 C36.4 315.9 24.7 319.1 19.1 318.1 C13.4 317.0 6.4 311.4 4.2 305.3 C2.1 299.3 2.1 284.1 6.4 282.0 Z" fill="#16110e" opacity="0.9" filter="url(#b2)"/><path d="M0.0 186.6 C1.1 182.0 4.6 179.5 6.4 182.4 C8.1 185.2 11.7 199.0 10.6 203.6 C9.5 208.2 1.8 212.8 0.0 209.9 C-1.8 207.1 -1.1 191.2 0.0 186.6 Z" fill="#16110e" opacity="0.9" filter="url(#b2)"/><rect x="0" y="320" width="140" height="140" fill="url(#hfade)"/><rect x="0" y="0" width="30" height="420" fill="url(#hfadeL)"/></g><g clip-path="url(#hcR)"><rect x="0" y="0" width="436" height="470" fill="#8c6a38"/><g filter="url(#b2)"><path d="M345.6 235.4 C345.8 236.6 346.0 240.3 346.7 242.7 C347.3 245.1 348.3 247.5 349.5 250.0 C350.6 252.4 352.1 254.8 353.5 257.2 C355.0 259.7 356.7 262.1 358.1 264.5 C359.5 266.9 360.9 269.4 362.0 271.8 C363.0 274.2 363.9 276.6 364.2 279.1 C364.6 281.5 364.6 283.9 364.2 286.3 C363.8 288.8 362.9 291.2 361.8 293.6 C360.6 296.0 359.0 298.5 357.3 300.9 C355.6 303.3 353.6 305.7 351.8 308.2 C350.0 310.6 348.1 313.0 346.6 315.4 C345.2 317.9 343.8 320.3 343.1 322.7 C342.3 325.1 342.0 327.6 342.2 330.0 C342.4 332.4 343.2 334.8 344.4 337.2 C345.6 339.7 347.4 342.1 349.4 344.5 C351.4 346.9 353.9 349.4 356.3 351.8 C358.6 354.2 362.2 357.9 363.4 359.1" fill="none" stroke="#b08c52" stroke-width="8.4" opacity="0.92" stroke-linecap="round"/><path d="M408.0 241.0 C408.6 242.1 410.7 245.7 411.7 248.1 C412.7 250.5 413.4 252.9 413.8 255.3 C414.2 257.6 414.2 260.0 414.0 262.4 C413.8 264.8 413.1 267.2 412.5 269.6 C411.8 271.9 410.8 274.3 410.1 276.7 C409.3 279.1 408.4 281.5 408.0 283.9 C407.6 286.2 407.3 288.6 407.6 291.0 C407.9 293.4 408.6 295.8 409.7 298.1 C410.8 300.5 412.5 302.9 414.4 305.3 C416.3 307.7 418.7 310.1 420.9 312.4 C423.2 314.8 425.9 317.2 428.0 319.6 C430.2 322.0 432.3 324.4 433.9 326.7 C435.4 329.1 436.5 332.7 437.1 333.9" fill="none" stroke="#6c4e28" stroke-width="7.9" opacity="0.94" stroke-linecap="round"/><path d="M420.2 247.2 C420.9 248.3 423.4 251.7 424.8 254.0 C426.3 256.2 427.7 258.5 428.9 260.8 C430.0 263.0 431.1 265.3 431.8 267.5 C432.6 269.8 433.2 272.0 433.4 274.3 C433.7 276.6 433.7 278.8 433.6 281.1 C433.4 283.3 432.9 285.6 432.3 287.9 C431.7 290.1 430.9 292.4 430.1 294.6 C429.2 296.9 428.2 299.2 427.4 301.4 C426.5 303.7 425.6 305.9 424.9 308.2 C424.2 310.5 423.6 312.7 423.3 315.0 C423.1 317.2 423.0 319.5 423.3 321.8 C423.6 324.0 424.3 326.3 425.3 328.5 C426.3 330.8 428.7 334.2 429.4 335.3" fill="none" stroke="#a8844a" stroke-width="6.0" opacity="0.69" stroke-linecap="round"/><path d="M397.7 1.3 C397.3 2.6 395.9 6.2 395.0 8.6 C394.1 11.1 393.2 13.5 392.5 15.9 C391.7 18.3 391.0 20.8 390.6 23.2 C390.1 25.6 389.7 28.0 389.5 30.5 C389.3 32.9 389.3 35.3 389.5 37.8 C389.7 40.2 390.0 42.6 390.5 45.0 C391.0 47.5 391.6 49.9 392.3 52.3 C393.0 54.8 393.8 57.2 394.6 59.6 C395.3 62.0 396.1 64.5 396.7 66.9 C397.4 69.3 398.0 71.7 398.3 74.2 C398.7 76.6 398.9 79.0 398.9 81.5 C398.8 83.9 398.6 86.3 398.0 88.7 C397.5 91.2 396.7 93.6 395.8 96.0 C394.8 98.5 392.8 102.1 392.2 103.3" fill="none" stroke="#b08c52" stroke-width="7.0" opacity="0.95" stroke-linecap="round"/><path d="M384.9 -39.4 C384.9 -38.1 384.8 -34.5 384.9 -32.1 C384.9 -29.7 385.2 -27.2 385.4 -24.8 C385.7 -22.4 386.1 -20.0 386.5 -17.5 C386.9 -15.1 387.3 -12.7 387.7 -10.3 C388.1 -7.8 388.5 -5.4 388.7 -3.0 C389.0 -0.5 389.2 1.9 389.3 4.3 C389.3 6.7 389.3 9.2 389.1 11.6 C388.8 14.0 388.5 16.4 387.9 18.9 C387.4 21.3 386.7 23.7 385.8 26.1 C385.0 28.6 384.0 31.0 382.9 33.4 C381.9 35.8 380.7 38.3 379.5 40.7 C378.3 43.1 377.0 45.5 375.9 48.0 C374.7 50.4 373.6 52.8 372.6 55.2 C371.6 57.7 370.6 60.1 369.9 62.5 C369.2 64.9 368.7 67.4 368.3 69.8 C368.0 72.2 367.8 74.6 367.9 77.1 C367.9 79.5 368.2 81.9 368.6 84.3 C369.0 86.8 369.7 89.2 370.3 91.6 C371.0 94.0 371.9 96.5 372.7 98.9 C373.5 101.3 374.4 103.7 375.2 106.2 C375.9 108.6 376.7 111.0 377.2 113.4 C377.8 115.9 378.2 119.5 378.4 120.7" fill="none" stroke="#46301a" stroke-width="4.2" opacity="0.72" stroke-linecap="round"/><path d="M404.0 -22.1 C403.7 -20.9 402.3 -17.2 401.8 -14.7 C401.3 -12.3 401.1 -9.8 401.3 -7.4 C401.4 -4.9 401.9 -2.5 402.7 -0.0 C403.4 2.4 404.6 4.9 405.9 7.3 C407.1 9.8 408.8 12.2 410.3 14.7 C411.8 17.2 413.5 19.6 414.9 22.1 C416.3 24.5 417.8 27.0 418.7 29.4 C419.7 31.9 420.5 34.3 420.9 36.8 C421.2 39.2 421.1 41.7 420.6 44.1 C420.1 46.6 419.1 49.0 417.8 51.5 C416.5 54.0 414.8 56.4 413.0 58.9 C411.1 61.3 408.9 63.8 406.9 66.2 C405.0 68.7 402.8 71.1 401.0 73.6 C399.3 76.0 397.6 78.5 396.5 80.9 C395.4 83.4 394.7 85.9 394.5 88.3 C394.3 90.8 394.7 93.2 395.5 95.7 C396.3 98.1 397.8 100.6 399.5 103.0 C401.2 105.5 403.5 107.9 405.7 110.4 C408.0 112.8 410.6 115.3 412.9 117.7 C415.2 120.2 418.4 123.9 419.5 125.1" fill="none" stroke="#2a1a0a" stroke-width="5.2" opacity="0.88" stroke-linecap="round"/><path d="M351.5 206.1 C351.6 207.3 351.7 211.1 352.0 213.6 C352.3 216.2 352.8 218.7 353.4 221.2 C353.9 223.7 354.7 226.3 355.4 228.8 C356.0 231.3 356.8 233.8 357.3 236.4 C357.9 238.9 358.4 241.4 358.7 243.9 C359.0 246.5 359.2 249.0 359.1 251.5 C359.0 254.1 358.6 256.6 358.1 259.1 C357.6 261.6 356.8 264.2 356.0 266.7 C355.2 269.2 354.2 271.7 353.3 274.3 C352.4 276.8 351.4 279.3 350.6 281.8 C349.8 284.4 349.1 286.9 348.7 289.4 C348.2 291.9 348.0 294.5 348.0 297.0 C348.0 299.5 348.4 302.0 348.9 304.6 C349.4 307.1 350.2 309.6 351.0 312.1 C351.9 314.7 353.0 317.2 354.0 319.7 C354.9 322.2 356.0 324.8 356.8 327.3 C357.6 329.8 358.3 332.3 358.7 334.9 C359.1 337.4 359.3 339.9 359.1 342.4 C359.0 345.0 358.5 347.5 357.8 350.0 C357.1 352.5 356.0 355.1 354.9 357.6 C353.8 360.1 352.4 362.6 351.2 365.2 C350.0 367.7 348.7 370.2 347.7 372.7 C346.7 375.3 345.7 377.8 345.2 380.3 C344.7 382.8 344.4 385.4 344.5 387.9 C344.6 390.4 345.6 394.2 345.8 395.5" fill="none" stroke="#b08c52" stroke-width="8.7" opacity="0.94" stroke-linecap="round"/><path d="M373.5 -30.4 C373.0 -29.1 371.9 -25.5 370.8 -23.1 C369.8 -20.7 368.3 -18.3 367.0 -15.9 C365.7 -13.5 364.1 -11.1 362.8 -8.7 C361.6 -6.3 360.3 -3.9 359.5 -1.5 C358.7 1.0 358.1 3.4 358.0 5.8 C357.8 8.2 358.1 10.6 358.8 13.0 C359.5 15.4 360.6 17.8 362.0 20.2 C363.3 22.6 365.1 25.0 366.8 27.4 C368.4 29.8 370.4 32.3 371.9 34.7 C373.5 37.1 375.1 39.5 376.1 41.9 C377.1 44.3 377.8 46.7 377.9 49.1 C378.1 51.5 377.7 53.9 376.8 56.3 C375.9 58.7 374.4 61.1 372.7 63.6 C371.0 66.0 368.7 68.4 366.5 70.8 C364.4 73.2 361.9 75.6 359.8 78.0 C357.8 80.4 355.7 82.8 354.4 85.2 C353.0 87.6 352.1 91.2 351.6 92.4" fill="none" stroke="#6c4e28" stroke-width="4.1" opacity="0.74" stroke-linecap="round"/><path d="M406.1 245.9 C406.3 247.1 406.6 250.5 407.2 252.9 C407.7 255.2 408.6 257.5 409.5 259.8 C410.5 262.1 411.7 264.4 412.8 266.7 C414.0 269.0 415.4 271.3 416.6 273.7 C417.8 276.0 419.1 278.3 420.1 280.6 C421.0 282.9 422.0 285.2 422.5 287.5 C423.0 289.8 423.4 292.1 423.3 294.5 C423.3 296.8 422.9 299.1 422.2 301.4 C421.4 303.7 420.3 306.0 419.0 308.3 C417.7 310.6 415.9 312.9 414.2 315.3 C412.4 317.6 410.3 319.9 408.4 322.2 C406.5 324.5 404.4 326.8 402.6 329.1 C400.8 331.4 399.1 333.7 397.8 336.1 C396.5 338.4 395.3 341.8 394.8 343.0" fill="none" stroke="#34220e" stroke-width="5.1" opacity="0.64" stroke-linecap="round"/><path d="M422.4 269.4 C422.3 270.6 422.0 274.4 421.9 276.9 C421.9 279.4 421.9 281.9 422.2 284.4 C422.5 286.9 422.9 289.4 423.5 291.9 C424.1 294.5 424.9 297.0 425.8 299.5 C426.7 302.0 427.8 304.5 428.9 307.0 C430.0 309.5 431.2 312.0 432.3 314.5 C433.5 317.0 434.7 319.6 435.7 322.1 C436.6 324.6 437.6 327.1 438.3 329.6 C439.0 332.1 439.5 334.6 439.8 337.1 C440.2 339.6 440.2 342.1 440.1 344.6 C440.0 347.2 439.6 349.7 439.2 352.2 C438.7 354.7 438.1 357.2 437.4 359.7 C436.8 362.2 436.0 364.7 435.4 367.2 C434.8 369.7 434.1 372.3 433.8 374.8 C433.4 377.3 433.1 379.8 433.1 382.3 C433.1 384.8 433.4 387.3 433.9 389.8 C434.4 392.3 435.2 394.8 436.2 397.3 C437.2 399.9 438.5 402.4 439.9 404.9 C441.2 407.4 442.8 409.9 444.3 412.4 C445.8 414.9 447.5 417.4 448.9 419.9 C450.3 422.4 451.7 425.0 452.7 427.5 C453.8 430.0 454.7 432.5 455.2 435.0 C455.7 437.5 456.0 440.0 456.0 442.5 C455.9 445.0 455.1 448.8 455.0 450.1" fill="none" stroke="#d8b87c" stroke-width="7.6" opacity="0.93" stroke-linecap="round"/><path d="M392.5 -26.1 C392.8 -24.9 393.7 -21.4 394.3 -19.0 C394.8 -16.6 395.5 -14.3 395.9 -11.9 C396.3 -9.5 396.6 -7.2 396.7 -4.8 C396.8 -2.5 396.7 -0.1 396.3 2.3 C396.0 4.6 395.3 7.0 394.5 9.4 C393.7 11.7 392.6 14.1 391.6 16.5 C390.5 18.8 389.1 21.2 388.0 23.6 C386.9 25.9 385.6 28.3 384.7 30.7 C383.8 33.0 382.9 35.4 382.4 37.7 C382.0 40.1 381.7 42.5 381.8 44.8 C382.0 47.2 382.4 49.6 383.1 51.9 C383.7 54.3 384.8 56.7 385.8 59.0 C386.8 61.4 388.1 63.8 389.2 66.1 C390.3 68.5 391.5 70.9 392.3 73.2 C393.1 75.6 393.7 79.1 394.0 80.3" fill="none" stroke="#b08c52" stroke-width="6.1" opacity="0.82" stroke-linecap="round"/><path d="M419.8 -24.0 C420.0 -22.8 420.6 -19.3 421.0 -16.9 C421.4 -14.5 422.0 -12.1 422.4 -9.8 C422.9 -7.4 423.3 -5.0 423.5 -2.6 C423.7 -0.3 423.8 2.1 423.6 4.5 C423.3 6.9 422.9 9.2 422.1 11.6 C421.4 14.0 420.3 16.3 419.0 18.7 C417.7 21.1 416.1 23.5 414.3 25.8 C412.5 28.2 410.4 30.6 408.4 33.0 C406.3 35.3 404.1 37.7 402.0 40.1 C399.9 42.5 397.8 44.8 396.0 47.2 C394.2 49.6 392.4 52.0 391.2 54.3 C389.9 56.7 388.9 59.1 388.3 61.5 C387.7 63.8 387.5 66.2 387.7 68.6 C387.9 71.0 389.1 74.5 389.3 75.7" fill="none" stroke="#34220e" stroke-width="5.7" opacity="0.89" stroke-linecap="round"/><path d="M413.5 -20.8 C414.2 -19.7 416.2 -16.1 417.4 -13.8 C418.5 -11.4 419.5 -9.1 420.3 -6.7 C421.1 -4.4 421.7 -2.0 422.1 0.3 C422.5 2.6 422.7 5.0 422.7 7.3 C422.8 9.7 422.6 12.0 422.4 14.4 C422.1 16.7 421.7 19.1 421.4 21.4 C421.1 23.8 420.7 26.1 420.5 28.5 C420.2 30.8 420.0 33.2 420.1 35.5 C420.2 37.9 420.4 40.2 420.9 42.6 C421.5 44.9 422.3 47.3 423.4 49.6 C424.5 52.0 425.9 54.3 427.5 56.7 C429.2 59.0 432.3 62.5 433.3 63.7" fill="none" stroke="#2a1a0a" stroke-width="8.0" opacity="0.92" stroke-linecap="round"/><path d="M398.7 239.1 C398.5 240.3 397.5 244.1 397.3 246.6 C397.1 249.1 397.1 251.6 397.4 254.1 C397.6 256.6 398.2 259.1 398.8 261.6 C399.5 264.1 400.5 266.6 401.3 269.1 C402.2 271.6 403.3 274.1 404.2 276.6 C405.1 279.1 406.0 281.6 406.6 284.1 C407.1 286.6 407.6 289.1 407.7 291.6 C407.8 294.1 407.6 296.6 407.1 299.1 C406.6 301.6 405.7 304.1 404.7 306.6 C403.8 309.1 402.4 311.6 401.2 314.1 C399.9 316.6 398.4 319.1 397.2 321.6 C395.9 324.1 394.6 326.6 393.7 329.1 C392.9 331.6 392.1 334.1 391.8 336.6 C391.5 339.1 391.5 341.6 391.9 344.1 C392.3 346.6 393.1 349.1 394.0 351.6 C395.0 354.0 396.3 356.5 397.6 359.0 C398.9 361.5 400.4 364.0 401.7 366.5 C402.9 369.0 404.3 371.5 405.1 374.0 C406.0 376.5 406.7 379.0 406.8 381.5 C407.0 384.0 406.8 386.5 406.3 389.0 C405.7 391.5 404.6 394.0 403.3 396.5 C402.1 399.0 400.3 401.5 398.7 404.0 C397.0 406.5 395.1 409.0 393.5 411.5 C391.8 414.0 390.1 416.5 388.9 419.0 C387.8 421.5 386.8 424.0 386.3 426.5 C385.9 429.0 386.4 432.8 386.4 434.0" fill="none" stroke="#e2c88c" stroke-width="5.7" opacity="0.84" stroke-linecap="round"/><path d="M399.8 177.4 C399.9 178.5 400.0 181.9 400.2 184.2 C400.5 186.5 401.0 188.8 401.5 191.1 C402.0 193.4 402.7 195.7 403.3 198.0 C403.9 200.3 404.7 202.6 405.2 204.9 C405.8 207.2 406.3 209.5 406.6 211.8 C407.0 214.1 407.2 216.4 407.1 218.7 C407.0 220.9 406.7 223.2 406.2 225.5 C405.7 227.8 404.8 230.1 403.8 232.4 C402.8 234.7 401.5 237.0 400.1 239.3 C398.7 241.6 397.0 243.9 395.4 246.2 C393.8 248.5 392.1 250.8 390.5 253.1 C388.9 255.4 386.8 258.8 386.0 260.0" fill="none" stroke="#5a4020" stroke-width="5.6" opacity="0.78" stroke-linecap="round"/><path d="M428.9 178.5 C429.3 179.7 430.8 183.3 431.3 185.8 C431.7 188.2 431.9 190.6 431.7 193.1 C431.5 195.5 431.0 197.9 430.2 200.4 C429.5 202.8 428.3 205.2 427.2 207.7 C426.0 210.1 424.6 212.5 423.4 214.9 C422.2 217.4 420.9 219.8 420.0 222.2 C419.1 224.7 418.3 227.1 418.1 229.5 C417.9 232.0 418.0 234.4 418.6 236.8 C419.2 239.3 420.4 241.7 421.9 244.1 C423.4 246.6 425.4 249.0 427.6 251.4 C429.8 253.9 432.5 256.3 435.1 258.7 C437.6 261.2 440.4 263.6 442.8 266.0 C445.2 268.5 447.6 270.9 449.4 273.3 C451.2 275.8 452.8 279.4 453.4 280.6" fill="none" stroke="#46301a" stroke-width="6.3" opacity="0.65" stroke-linecap="round"/><path d="M361.3 304.1 C361.7 305.3 363.5 309.1 364.1 311.6 C364.8 314.2 365.2 316.7 365.2 319.2 C365.3 321.8 364.9 324.3 364.3 326.8 C363.8 329.3 362.7 331.9 361.6 334.4 C360.5 336.9 359.1 339.4 357.8 342.0 C356.4 344.5 354.9 347.0 353.7 349.5 C352.4 352.1 351.2 354.6 350.4 357.1 C349.6 359.6 349.1 362.2 349.0 364.7 C348.9 367.2 349.1 369.7 349.8 372.3 C350.5 374.8 351.7 377.3 353.1 379.9 C354.4 382.4 356.3 384.9 358.1 387.4 C359.9 390.0 362.1 392.5 364.0 395.0 C365.8 397.5 367.8 400.1 369.4 402.6 C370.9 405.1 372.3 407.6 373.1 410.2 C374.0 412.7 374.4 415.2 374.4 417.7 C374.3 420.3 373.7 422.8 372.8 425.3 C371.8 427.8 370.3 430.4 368.7 432.9 C367.1 435.4 365.0 438.0 363.1 440.5 C361.2 443.0 359.1 445.5 357.4 448.1 C355.7 450.6 354.0 453.1 352.9 455.6 C351.8 458.2 351.0 460.7 350.9 463.2 C350.8 465.7 351.2 468.3 352.1 470.8 C353.0 473.3 354.6 475.8 356.4 478.4 C358.2 480.9 360.6 483.4 363.0 485.9 C365.4 488.5 368.2 491.0 370.6 493.5 C373.0 496.1 375.6 498.6 377.5 501.1 C379.4 503.6 381.2 506.2 382.2 508.7 C383.2 511.2 383.7 513.7 383.5 516.3 C383.3 518.8 381.6 522.6 381.2 523.8" fill="none" stroke="#dcc084" stroke-width="7.1" opacity="0.87" stroke-linecap="round"/><path d="M367.6 164.8 C367.0 166.1 365.6 169.8 364.3 172.2 C363.0 174.7 361.2 177.2 359.6 179.6 C358.0 182.1 356.1 184.6 354.6 187.0 C353.1 189.5 351.6 192.0 350.7 194.4 C349.7 196.9 349.0 199.4 348.8 201.8 C348.6 204.3 348.9 206.8 349.6 209.2 C350.3 211.7 351.6 214.2 352.9 216.6 C354.3 219.1 356.2 221.6 357.8 224.0 C359.5 226.5 361.4 229.0 362.9 231.4 C364.4 233.9 365.8 236.4 366.6 238.8 C367.4 241.3 367.9 243.8 367.7 246.2 C367.5 248.7 366.8 251.2 365.6 253.6 C364.4 256.1 362.5 258.6 360.5 261.0 C358.6 263.5 356.0 266.0 353.7 268.4 C351.4 270.9 348.8 273.4 346.8 275.8 C344.8 278.3 342.9 280.8 341.7 283.2 C340.5 285.7 339.7 288.2 339.7 290.6 C339.7 293.1 340.4 295.6 341.5 298.0 C342.7 300.5 344.6 303.0 346.6 305.4 C348.7 307.9 351.4 310.4 353.7 312.8 C356.0 315.3 358.7 317.8 360.7 320.2 C362.6 322.7 364.5 325.2 365.5 327.6 C366.4 330.1 366.9 332.6 366.5 335.0 C366.2 337.5 363.8 341.2 363.3 342.4" fill="none" stroke="#e2c88c" stroke-width="4.2" opacity="0.94" stroke-linecap="round"/><path d="M352.7 162.0 C353.0 163.3 353.4 167.0 354.3 169.5 C355.1 172.0 356.5 174.5 357.8 176.9 C359.0 179.4 360.6 181.9 361.6 184.4 C362.7 186.9 363.7 189.4 364.0 191.8 C364.3 194.3 364.2 196.8 363.4 199.3 C362.7 201.8 361.2 204.3 359.4 206.7 C357.6 209.2 355.1 211.7 352.7 214.2 C350.4 216.7 347.5 219.2 345.1 221.6 C342.8 224.1 340.4 226.6 338.9 229.1 C337.3 231.6 336.2 234.1 335.8 236.5 C335.5 239.0 336.0 241.5 336.9 244.0 C337.8 246.5 339.7 249.0 341.5 251.4 C343.3 253.9 345.8 256.4 347.8 258.9 C349.7 261.4 351.9 263.9 353.1 266.3 C354.3 268.8 355.2 271.3 355.0 273.8 C354.9 276.3 353.9 278.8 352.3 281.2 C350.6 283.7 347.9 286.2 345.1 288.7 C342.3 291.2 338.6 293.7 335.4 296.1 C332.2 298.6 328.6 301.1 326.0 303.6 C323.4 306.1 321.1 308.6 319.9 311.0 C318.7 313.5 319.1 317.3 319.0 318.5" fill="none" stroke="#e2c88c" stroke-width="8.4" opacity="0.72" stroke-linecap="round"/><path d="M348.4 261.6 C348.2 262.8 347.8 266.3 347.5 268.7 C347.3 271.1 347.0 273.4 346.9 275.8 C346.7 278.1 346.6 280.5 346.8 282.9 C346.9 285.2 347.2 287.6 347.7 289.9 C348.2 292.3 348.9 294.7 349.8 297.0 C350.6 299.4 351.8 301.7 353.0 304.1 C354.2 306.5 355.7 308.8 357.1 311.2 C358.6 313.6 360.1 315.9 361.6 318.3 C363.0 320.6 364.5 323.0 365.8 325.4 C367.0 327.7 368.2 330.1 369.1 332.4 C370.0 334.8 370.7 337.2 371.0 339.5 C371.4 341.9 371.5 344.2 371.4 346.6 C371.3 349.0 370.8 351.3 370.3 353.7 C369.7 356.0 368.9 358.4 368.1 360.8 C367.3 363.1 366.3 365.5 365.6 367.9 C364.8 370.2 364.0 372.6 363.5 374.9 C363.0 377.3 362.7 380.8 362.6 382.0" fill="none" stroke="#e2c88c" stroke-width="4.5" opacity="0.79" stroke-linecap="round"/><path d="M383.9 97.3 C384.9 98.6 388.2 102.4 389.8 104.9 C391.4 107.4 392.9 110.0 393.7 112.5 C394.4 115.0 394.7 117.5 394.3 120.1 C394.0 122.6 392.9 125.1 391.6 127.7 C390.4 130.2 388.4 132.7 386.8 135.2 C385.2 137.8 383.2 140.3 382.0 142.8 C380.8 145.3 379.7 147.9 379.5 150.4 C379.2 152.9 379.6 155.5 380.7 158.0 C381.8 160.5 383.8 163.0 385.9 165.6 C388.1 168.1 391.1 170.6 393.7 173.2 C396.3 175.7 399.4 178.2 401.6 180.7 C403.9 183.3 406.0 185.8 407.1 188.3 C408.1 190.8 408.5 193.4 408.1 195.9 C407.7 198.4 406.3 201.0 404.6 203.5 C402.9 206.0 400.2 208.5 398.0 211.1 C395.7 213.6 392.9 216.1 391.1 218.7 C389.2 221.2 387.4 223.7 386.8 226.2 C386.3 228.8 386.4 231.3 387.5 233.8 C388.6 236.3 390.8 238.9 393.4 241.4 C396.0 243.9 399.6 246.5 402.9 249.0 C406.2 251.5 410.1 254.0 413.0 256.6 C415.9 259.1 418.7 261.6 420.2 264.2 C421.7 266.7 422.4 269.2 422.0 271.7 C421.7 274.3 420.0 276.8 418.0 279.3 C415.9 281.8 411.1 285.6 409.7 286.9" fill="none" stroke="#c8a468" stroke-width="8.2" opacity="0.92" stroke-linecap="round"/><path d="M392.0 253.5 C391.5 254.6 389.9 258.1 389.3 260.3 C388.8 262.6 388.5 264.9 388.6 267.2 C388.8 269.5 389.3 271.8 389.9 274.1 C390.6 276.3 391.7 278.6 392.5 280.9 C393.4 283.2 394.5 285.5 395.2 287.8 C395.9 290.1 396.5 292.3 396.6 294.6 C396.6 296.9 396.3 299.2 395.5 301.5 C394.7 303.8 393.3 306.1 391.6 308.3 C389.9 310.6 387.6 312.9 385.4 315.2 C383.1 317.5 380.4 319.8 378.1 322.1 C375.8 324.3 373.3 326.6 371.5 328.9 C369.8 331.2 368.1 334.6 367.5 335.8" fill="none" stroke="#2a1a0a" stroke-width="6.6" opacity="0.66" stroke-linecap="round"/><path d="M353.9 35.2 C354.1 36.5 354.8 40.2 355.0 42.7 C355.1 45.2 355.1 47.7 354.8 50.2 C354.4 52.7 353.8 55.3 353.0 57.8 C352.1 60.3 351.0 62.8 349.7 65.3 C348.4 67.8 346.9 70.3 345.3 72.8 C343.8 75.3 342.1 77.8 340.5 80.3 C338.9 82.8 337.3 85.3 335.9 87.8 C334.6 90.3 333.3 92.8 332.4 95.3 C331.5 97.8 330.8 100.3 330.5 102.9 C330.2 105.4 330.2 107.9 330.5 110.4 C330.8 112.9 331.5 115.4 332.3 117.9 C333.1 120.4 334.3 122.9 335.5 125.4 C336.6 127.9 338.0 130.4 339.2 132.9 C340.4 135.4 341.7 137.9 342.6 140.4 C343.6 142.9 344.4 145.4 344.8 147.9 C345.2 150.5 345.4 153.0 345.1 155.5 C344.8 158.0 344.1 160.5 343.0 163.0 C342.0 165.5 340.5 168.0 338.9 170.5 C337.2 173.0 335.2 175.5 333.1 178.0 C331.1 180.5 328.7 183.0 326.6 185.5 C324.5 188.0 322.3 190.5 320.5 193.0 C318.7 195.5 317.0 198.1 315.8 200.6 C314.7 203.1 313.8 205.6 313.4 208.1 C313.0 210.6 313.1 213.1 313.5 215.6 C314.0 218.1 315.0 220.6 316.2 223.1 C317.4 225.6 319.1 228.1 320.7 230.6 C322.4 233.1 324.4 235.6 326.1 238.1 C327.8 240.6 330.2 244.4 331.1 245.7" fill="none" stroke="#a8844a" stroke-width="5.7" opacity="0.77" stroke-linecap="round"/><path d="M387.8 100.5 C387.4 101.7 386.2 105.5 385.3 108.1 C384.4 110.6 383.3 113.1 382.4 115.7 C381.5 118.2 380.5 120.7 379.8 123.3 C379.1 125.8 378.5 128.3 378.2 130.9 C377.9 133.4 377.9 136.0 378.1 138.5 C378.4 141.0 379.0 143.6 379.8 146.1 C380.7 148.6 381.8 151.2 383.1 153.7 C384.4 156.2 386.1 158.8 387.6 161.3 C389.2 163.8 391.0 166.4 392.6 168.9 C394.1 171.4 395.8 174.0 397.1 176.5 C398.4 179.1 399.6 181.6 400.3 184.1 C401.1 186.7 401.6 189.2 401.6 191.7 C401.7 194.3 401.4 196.8 400.8 199.3 C400.2 201.9 399.1 204.4 397.9 206.9 C396.7 209.5 395.1 212.0 393.5 214.5 C392.0 217.1 390.1 219.6 388.6 222.2 C387.0 224.7 385.4 227.2 384.2 229.8 C383.0 232.3 381.9 234.8 381.3 237.4 C380.7 239.9 380.5 242.4 380.7 245.0 C381.0 247.5 381.7 250.0 382.8 252.6 C383.9 255.1 385.5 257.6 387.3 260.2 C389.1 262.7 392.5 266.5 393.5 267.8" fill="none" stroke="#c8a468" stroke-width="9.0" opacity="0.89" stroke-linecap="round"/><path d="M375.4 109.2 C375.2 110.5 374.3 114.3 374.0 116.8 C373.7 119.4 373.5 121.9 373.6 124.4 C373.8 126.9 374.2 129.5 374.8 132.0 C375.5 134.5 376.5 137.0 377.7 139.6 C378.9 142.1 380.4 144.6 382.0 147.2 C383.5 149.7 385.3 152.2 386.9 154.7 C388.5 157.3 390.2 159.8 391.6 162.3 C393.0 164.8 394.3 167.4 395.2 169.9 C396.1 172.4 396.8 175.0 397.0 177.5 C397.2 180.0 397.1 182.5 396.6 185.1 C396.2 187.6 395.3 190.1 394.4 192.7 C393.5 195.2 392.2 197.7 391.0 200.2 C389.9 202.8 388.5 205.3 387.6 207.8 C386.6 210.3 385.6 212.9 385.2 215.4 C384.7 217.9 384.5 220.5 384.8 223.0 C385.1 225.5 385.9 228.0 387.0 230.6 C388.1 233.1 389.7 235.6 391.6 238.1 C393.4 240.7 395.6 243.2 397.8 245.7 C400.0 248.3 402.5 250.8 404.6 253.3 C406.7 255.8 408.9 258.4 410.5 260.9 C412.1 263.4 413.7 267.2 414.3 268.5" fill="none" stroke="#dcc084" stroke-width="8.5" opacity="0.71" stroke-linecap="round"/><path d="M365.1 180.3 C364.6 181.6 363.3 185.3 362.5 187.7 C361.7 190.2 361.0 192.7 360.4 195.1 C359.8 197.6 359.3 200.1 359.0 202.5 C358.7 205.0 358.6 207.5 358.6 209.9 C358.7 212.4 359.0 214.9 359.4 217.3 C359.8 219.8 360.5 222.3 361.2 224.7 C361.9 227.2 362.8 229.7 363.6 232.1 C364.4 234.6 365.4 237.1 366.2 239.5 C367.0 242.0 367.8 244.5 368.4 246.9 C369.0 249.4 369.5 251.9 369.8 254.3 C370.0 256.8 370.0 259.3 369.8 261.8 C369.6 264.2 369.1 266.7 368.4 269.2 C367.7 271.6 366.7 274.1 365.6 276.6 C364.5 279.0 363.2 281.5 361.8 284.0 C360.5 286.4 359.0 288.9 357.6 291.4 C356.2 293.8 354.8 296.3 353.6 298.8 C352.5 301.2 351.4 303.7 350.6 306.2 C349.8 308.6 349.3 311.1 349.0 313.6 C348.8 316.0 349.2 319.7 349.3 321.0" fill="none" stroke="#d8b87c" stroke-width="8.3" opacity="0.69" stroke-linecap="round"/><path d="M359.8 280.5 C360.1 281.7 360.9 285.5 361.4 287.9 C362.0 290.4 362.5 292.9 363.0 295.4 C363.5 297.9 363.9 300.4 364.2 302.9 C364.6 305.3 364.8 307.8 364.9 310.3 C365.0 312.8 365.0 315.3 364.8 317.8 C364.6 320.2 364.3 322.7 363.9 325.2 C363.5 327.7 363.0 330.2 362.4 332.7 C361.8 335.2 361.0 337.6 360.3 340.1 C359.6 342.6 358.8 345.1 358.1 347.6 C357.5 350.1 356.7 352.5 356.2 355.0 C355.6 357.5 355.1 360.0 354.7 362.5 C354.3 365.0 354.1 367.4 354.0 369.9 C354.0 372.4 354.1 374.9 354.3 377.4 C354.6 379.9 355.0 382.4 355.5 384.8 C356.1 387.3 356.8 389.8 357.5 392.3 C358.2 394.8 359.1 397.3 359.9 399.7 C360.8 402.2 361.7 404.7 362.4 407.2 C363.2 409.7 364.0 412.2 364.6 414.7 C365.2 417.1 365.7 419.6 366.0 422.1 C366.3 424.6 366.4 427.1 366.3 429.6 C366.3 432.0 366.0 434.5 365.6 437.0 C365.2 439.5 364.5 442.0 363.8 444.5 C363.0 447.0 362.1 449.4 361.2 451.9 C360.2 454.4 359.1 456.9 358.1 459.4 C357.1 461.9 356.1 464.3 355.2 466.8 C354.3 469.3 353.4 471.8 352.8 474.3 C352.1 476.8 351.6 479.3 351.3 481.7 C351.1 484.2 351.0 486.7 351.1 489.2 C351.3 491.7 352.1 495.4 352.2 496.6" fill="none" stroke="#34220e" stroke-width="7.1" opacity="0.93" stroke-linecap="round"/><path d="M441.6 225.0 C441.1 226.3 439.4 230.0 438.3 232.5 C437.3 235.0 436.1 237.5 435.1 240.0 C434.2 242.5 433.3 245.0 432.7 247.5 C432.1 249.9 431.7 252.4 431.6 254.9 C431.5 257.4 431.7 259.9 432.2 262.4 C432.6 264.9 433.4 267.4 434.2 269.9 C435.1 272.4 436.3 274.9 437.4 277.4 C438.5 279.9 439.8 282.4 440.8 284.9 C441.9 287.4 443.0 289.9 443.7 292.3 C444.5 294.8 445.1 297.3 445.4 299.8 C445.6 302.3 445.5 304.8 445.1 307.3 C444.7 309.8 444.0 312.3 443.0 314.8 C442.0 317.3 440.6 319.8 439.2 322.3 C437.8 324.8 436.0 327.3 434.5 329.8 C433.0 332.2 431.3 334.7 429.9 337.2 C428.6 339.7 427.3 342.2 426.4 344.7 C425.6 347.2 425.0 349.7 424.8 352.2 C424.7 354.7 424.9 357.2 425.5 359.7 C426.1 362.2 427.1 364.7 428.3 367.2 C429.5 369.7 431.2 372.2 432.7 374.6 C434.3 377.1 436.1 379.6 437.6 382.1 C439.1 384.6 440.7 387.1 441.8 389.6 C443.0 392.1 443.9 394.6 444.3 397.1 C444.8 399.6 444.8 402.1 444.4 404.6 C444.0 407.1 443.1 409.6 441.8 412.1 C440.6 414.5 438.9 417.0 437.1 419.5 C435.3 422.0 432.0 425.8 431.0 427.0" fill="none" stroke="#c8a468" stroke-width="7.1" opacity="0.75" stroke-linecap="round"/><path d="M424.2 -21.6 C424.3 -20.3 424.3 -16.5 424.6 -13.9 C424.9 -11.4 425.4 -8.8 425.9 -6.3 C426.4 -3.7 427.1 -1.2 427.7 1.4 C428.3 3.9 429.0 6.4 429.6 9.0 C430.2 11.5 430.7 14.1 431.1 16.6 C431.5 19.2 431.8 21.7 431.8 24.3 C431.9 26.8 431.7 29.4 431.4 31.9 C431.0 34.4 430.4 37.0 429.6 39.5 C428.8 42.1 427.8 44.6 426.6 47.2 C425.4 49.7 424.0 52.3 422.6 54.8 C421.2 57.4 419.6 59.9 418.2 62.4 C416.7 65.0 415.1 67.5 413.8 70.1 C412.5 72.6 411.2 75.2 410.1 77.7 C409.1 80.3 408.2 82.8 407.7 85.4 C407.1 87.9 406.8 90.5 406.8 93.0 C406.7 95.5 407.0 98.1 407.5 100.6 C407.9 103.2 408.7 105.7 409.6 108.3 C410.5 110.8 411.6 113.4 412.7 115.9 C413.8 118.5 415.1 121.0 416.2 123.5 C417.3 126.1 418.4 128.6 419.2 131.2 C420.1 133.7 420.8 136.3 421.2 138.8 C421.6 141.4 421.8 143.9 421.6 146.5 C421.4 149.0 420.9 151.5 420.1 154.1 C419.3 156.6 418.1 159.2 416.7 161.7 C415.3 164.3 412.6 168.1 411.7 169.4" fill="none" stroke="#c8a468" stroke-width="4.8" opacity="0.70" stroke-linecap="round"/><path d="M357.1 111.9 C357.0 113.2 356.8 116.9 356.4 119.4 C356.0 121.9 355.4 124.4 354.9 127.0 C354.3 129.5 353.5 132.0 352.8 134.5 C352.1 137.0 351.3 139.5 350.7 142.0 C350.1 144.5 349.4 147.0 349.0 149.5 C348.5 152.0 348.2 154.6 348.0 157.1 C347.9 159.6 348.0 162.1 348.2 164.6 C348.5 167.1 349.0 169.6 349.6 172.1 C350.2 174.6 351.0 177.1 351.9 179.6 C352.8 182.1 353.9 184.7 354.9 187.2 C355.8 189.7 356.9 192.2 357.8 194.7 C358.7 197.2 359.6 199.7 360.2 202.2 C360.8 204.7 361.3 207.2 361.5 209.7 C361.7 212.3 361.6 214.8 361.3 217.3 C361.1 219.8 360.5 222.3 359.7 224.8 C359.0 227.3 358.0 229.8 356.9 232.3 C355.9 234.8 354.6 237.3 353.5 239.9 C352.3 242.4 351.1 244.9 350.1 247.4 C349.1 249.9 347.9 253.7 347.4 254.9" fill="none" stroke="#6c4e28" stroke-width="5.2" opacity="0.76" stroke-linecap="round"/><path d="M366.2 134.4 C366.9 135.6 369.3 139.4 370.7 141.9 C372.1 144.4 373.6 146.9 374.6 149.4 C375.6 151.9 376.5 154.5 376.9 157.0 C377.3 159.5 377.3 162.0 377.0 164.5 C376.7 167.0 375.9 169.5 375.1 172.0 C374.3 174.5 373.0 177.0 372.1 179.5 C371.1 182.1 370.0 184.6 369.3 187.1 C368.6 189.6 368.1 192.1 368.1 194.6 C368.1 197.1 368.5 199.6 369.4 202.1 C370.2 204.6 371.6 207.1 373.1 209.7 C374.7 212.2 376.7 214.7 378.6 217.2 C380.4 219.7 382.6 222.2 384.2 224.7 C385.9 227.2 387.5 229.7 388.6 232.2 C389.6 234.7 390.2 237.2 390.3 239.8 C390.4 242.3 389.8 244.8 389.1 247.3 C388.3 249.8 386.8 252.3 385.5 254.8 C384.2 257.3 382.4 259.8 381.1 262.3 C379.8 264.8 378.4 267.4 377.7 269.9 C377.0 272.4 376.6 274.9 376.9 277.4 C377.2 279.9 378.1 282.4 379.4 284.9 C380.7 287.4 382.8 289.9 384.8 292.4 C386.9 295.0 389.6 297.5 391.8 300.0 C394.1 302.5 396.6 305.0 398.4 307.5 C400.2 310.0 401.7 312.5 402.5 315.0 C403.4 317.5 403.6 320.0 403.2 322.6 C402.8 325.1 401.6 327.6 400.3 330.1 C398.9 332.6 396.8 335.1 395.0 337.6 C393.2 340.1 390.4 343.9 389.5 345.1" fill="none" stroke="#6c4e28" stroke-width="8.6" opacity="0.91" stroke-linecap="round"/><path d="M374.2 275.1 C374.2 276.4 374.3 280.2 374.0 282.7 C373.7 285.2 373.1 287.8 372.3 290.3 C371.5 292.9 370.4 295.4 369.2 298.0 C368.0 300.5 366.5 303.0 365.1 305.6 C363.6 308.1 362.0 310.7 360.5 313.2 C359.0 315.8 357.4 318.3 356.2 320.8 C354.9 323.4 353.7 325.9 352.8 328.5 C351.9 331.0 351.3 333.5 351.0 336.1 C350.7 338.6 350.7 341.2 350.9 343.7 C351.2 346.3 351.8 348.8 352.6 351.3 C353.3 353.9 354.4 356.4 355.4 359.0 C356.4 361.5 357.6 364.1 358.6 366.6 C359.6 369.1 360.6 371.7 361.3 374.2 C362.0 376.8 362.6 379.3 362.7 381.8 C362.9 384.4 362.8 386.9 362.3 389.5 C361.7 392.0 360.8 394.6 359.6 397.1 C358.5 399.6 356.8 402.2 355.1 404.7 C353.4 407.3 351.3 409.8 349.3 412.3 C347.4 414.9 345.1 417.4 343.2 420.0 C341.3 422.5 339.4 425.1 337.8 427.6 C336.3 430.1 335.0 432.7 334.1 435.2 C333.3 437.8 332.8 440.3 332.7 442.9 C332.6 445.4 333.0 447.9 333.7 450.5 C334.4 453.0 335.6 455.6 336.9 458.1 C338.2 460.6 339.9 463.2 341.4 465.7 C342.9 468.3 344.7 470.8 346.1 473.4 C347.4 475.9 349.1 479.7 349.7 481.0" fill="none" stroke="#5a4020" stroke-width="6.4" opacity="0.68" stroke-linecap="round"/><path d="M402.2 59.4 C402.0 60.6 401.2 64.4 400.9 66.9 C400.6 69.3 400.4 71.8 400.4 74.3 C400.4 76.8 400.6 79.3 401.1 81.8 C401.5 84.3 402.3 86.8 403.2 89.3 C404.1 91.8 405.3 94.3 406.6 96.8 C407.8 99.3 409.3 101.8 410.7 104.3 C412.0 106.7 413.5 109.2 414.7 111.7 C415.8 114.2 417.0 116.7 417.8 119.2 C418.6 121.7 419.1 124.2 419.4 126.7 C419.6 129.2 419.6 131.7 419.3 134.2 C419.0 136.7 418.3 139.2 417.6 141.6 C417.0 144.1 416.0 146.6 415.1 149.1 C414.3 151.6 413.3 154.1 412.7 156.6 C412.0 159.1 411.4 161.6 411.2 164.1 C411.0 166.6 411.1 169.1 411.5 171.6 C412.0 174.1 412.8 176.6 413.8 179.0 C414.9 181.5 416.4 184.0 417.9 186.5 C419.5 189.0 421.4 191.5 423.1 194.0 C424.8 196.5 426.7 199.0 428.3 201.5 C429.8 204.0 431.3 206.5 432.4 209.0 C433.4 211.5 434.2 214.0 434.5 216.4 C434.8 218.9 434.7 221.4 434.3 223.9 C433.9 226.4 433.0 228.9 432.0 231.4 C431.0 233.9 429.7 236.4 428.5 238.9 C427.3 241.4 425.8 243.9 424.8 246.4 C423.8 248.9 422.7 252.6 422.3 253.8" fill="none" stroke="#d8b87c" stroke-width="5.3" opacity="0.93" stroke-linecap="round"/><path d="M371.9 6.1 C372.1 7.3 372.3 11.0 373.0 13.5 C373.6 16.0 374.6 18.4 375.6 20.9 C376.6 23.4 378.0 25.9 379.0 28.4 C380.0 30.8 381.1 33.3 381.7 35.8 C382.3 38.3 382.7 40.7 382.6 43.2 C382.4 45.7 381.9 48.2 381.0 50.6 C380.0 53.1 378.6 55.6 377.0 58.1 C375.4 60.6 373.3 63.0 371.5 65.5 C369.6 68.0 367.4 70.5 365.8 72.9 C364.1 75.4 362.5 77.9 361.5 80.4 C360.4 82.8 359.8 85.3 359.7 87.8 C359.6 90.3 360.1 92.7 360.9 95.2 C361.7 97.7 363.2 100.2 364.6 102.7 C366.0 105.1 368.0 107.6 369.5 110.1 C371.0 112.6 372.7 115.0 373.8 117.5 C374.9 120.0 375.8 122.5 375.9 124.9 C376.1 127.4 375.7 129.9 374.8 132.4 C373.9 134.9 372.2 137.3 370.3 139.8 C368.5 142.3 365.9 144.8 363.6 147.2 C361.2 149.7 358.4 152.2 356.2 154.7 C354.0 157.1 351.8 159.6 350.3 162.1 C348.9 164.6 347.8 167.1 347.5 169.5 C347.2 172.0 347.6 174.5 348.5 177.0 C349.4 179.4 351.1 181.9 352.9 184.4 C354.7 186.9 357.2 189.3 359.2 191.8 C361.3 194.3 363.7 196.8 365.3 199.2 C366.9 201.7 368.4 205.4 369.0 206.7" fill="none" stroke="#34220e" stroke-width="6.3" opacity="0.70" stroke-linecap="round"/><path d="M378.8 198.2 C378.7 199.4 378.7 203.2 378.3 205.7 C377.9 208.2 377.2 210.8 376.5 213.3 C375.7 215.8 374.7 218.3 373.9 220.8 C373.0 223.3 372.0 225.9 371.4 228.4 C370.7 230.9 370.0 233.4 369.8 235.9 C369.5 238.4 369.5 241.0 369.8 243.5 C370.1 246.0 370.7 248.5 371.5 251.0 C372.3 253.5 373.4 256.1 374.6 258.6 C375.7 261.1 377.0 263.6 378.2 266.1 C379.3 268.6 380.5 271.2 381.3 273.7 C382.0 276.2 382.7 278.7 382.9 281.2 C383.1 283.7 383.0 286.3 382.6 288.8 C382.1 291.3 381.3 293.8 380.3 296.3 C379.4 298.8 378.0 301.4 376.8 303.9 C375.6 306.4 374.2 308.9 373.2 311.4 C372.1 313.9 371.1 316.5 370.5 319.0 C370.0 321.5 369.7 324.0 369.9 326.5 C370.1 329.0 370.7 331.5 371.6 334.1 C372.5 336.6 373.9 339.1 375.2 341.6 C376.6 344.1 378.4 346.6 379.9 349.2 C381.4 351.7 383.0 354.2 384.2 356.7 C385.3 359.2 386.3 361.7 386.8 364.3 C387.3 366.8 387.3 369.3 387.0 371.8 C386.6 374.3 385.7 376.8 384.6 379.4 C383.5 381.9 381.8 384.4 380.3 386.9 C378.8 389.4 377.0 391.9 375.5 394.5 C374.1 397.0 372.3 400.7 371.7 402.0" fill="none" stroke="#46301a" stroke-width="7.2" opacity="0.70" stroke-linecap="round"/><path d="M406.4 120.5 C406.9 121.6 408.7 125.1 409.8 127.4 C410.9 129.8 412.0 132.1 413.0 134.4 C414.0 136.7 414.9 139.1 415.7 141.4 C416.5 143.7 417.2 146.0 417.8 148.4 C418.4 150.7 418.8 153.0 419.1 155.3 C419.4 157.7 419.6 160.0 419.6 162.3 C419.7 164.6 419.7 167.0 419.6 169.3 C419.5 171.6 419.3 173.9 419.1 176.3 C419.0 178.6 418.8 180.9 418.7 183.2 C418.6 185.6 418.5 187.9 418.6 190.2 C418.6 192.5 418.8 194.9 419.2 197.2 C419.5 199.5 420.0 201.8 420.7 204.2 C421.4 206.5 423.0 210.0 423.4 211.1" fill="none" stroke="#bc985c" stroke-width="6.7" opacity="0.79" stroke-linecap="round"/><path d="M424.1 -26.0 C424.2 -24.8 424.8 -21.0 424.8 -18.5 C424.7 -16.0 424.4 -13.5 423.9 -11.0 C423.4 -8.5 422.6 -6.0 421.9 -3.5 C421.3 -1.0 420.4 1.5 419.8 4.0 C419.2 6.5 418.5 9.0 418.4 11.5 C418.2 14.0 418.2 16.5 418.6 19.0 C419.0 21.5 419.8 24.0 420.9 26.5 C421.9 29.0 423.5 31.5 425.0 34.0 C426.5 36.5 428.4 39.0 430.0 41.5 C431.6 43.9 433.4 46.4 434.7 48.9 C436.0 51.4 437.2 53.9 437.8 56.4 C438.5 58.9 438.8 61.4 438.6 63.9 C438.4 66.4 437.8 68.9 436.9 71.4 C436.0 73.9 434.6 76.4 433.3 78.9 C432.1 81.4 430.5 83.9 429.3 86.4 C428.1 88.9 426.8 92.7 426.4 93.9" fill="none" stroke="#b08c52" stroke-width="4.5" opacity="0.91" stroke-linecap="round"/><path d="M406.3 297.4 C406.4 298.6 407.4 302.3 407.2 304.8 C406.9 307.2 406.1 309.7 404.9 312.1 C403.6 314.6 401.6 317.0 399.5 319.5 C397.5 321.9 394.8 324.4 392.5 326.8 C390.3 329.3 387.7 331.7 386.0 334.2 C384.3 336.6 382.8 339.1 382.1 341.6 C381.5 344.0 381.5 346.5 382.1 348.9 C382.7 351.4 384.2 353.8 385.7 356.3 C387.2 358.7 389.5 361.2 391.2 363.6 C392.8 366.1 394.8 368.5 395.8 371.0 C396.8 373.4 397.5 375.9 397.2 378.3 C396.9 380.8 395.8 383.2 394.0 385.7 C392.3 388.2 389.5 390.6 386.7 393.1 C383.9 395.5 380.3 398.0 377.4 400.4 C374.5 402.9 371.3 405.3 369.3 407.8 C367.2 410.2 365.5 412.7 365.0 415.1 C364.4 417.6 364.9 420.0 366.0 422.5 C367.1 424.9 369.4 427.4 371.6 429.9 C373.8 432.3 377.0 434.8 379.3 437.2 C381.6 439.7 384.2 442.1 385.5 444.6 C386.8 447.0 387.6 449.5 387.2 451.9 C386.8 454.4 383.6 458.1 382.9 459.3" fill="none" stroke="#d8b87c" stroke-width="7.8" opacity="0.92" stroke-linecap="round"/><path d="M398.8 245.4 C399.2 246.6 400.4 250.2 401.5 252.6 C402.5 255.0 403.8 257.5 405.0 259.9 C406.2 262.3 407.5 264.7 408.6 267.1 C409.8 269.5 410.9 272.0 411.7 274.4 C412.5 276.8 413.2 279.2 413.6 281.6 C413.9 284.1 414.0 286.5 413.7 288.9 C413.4 291.3 412.8 293.7 411.9 296.1 C411.1 298.6 409.9 301.0 408.6 303.4 C407.2 305.8 405.6 308.2 404.1 310.7 C402.5 313.1 400.8 315.5 399.3 317.9 C397.8 320.3 396.3 322.7 395.2 325.2 C394.1 327.6 393.1 330.0 392.6 332.4 C392.1 334.8 391.9 337.3 392.2 339.7 C392.4 342.1 393.1 344.5 394.1 346.9 C395.0 349.3 396.5 351.8 398.1 354.2 C399.7 356.6 401.6 359.0 403.5 361.4 C405.4 363.9 407.6 366.3 409.5 368.7 C411.3 371.1 413.3 373.5 414.7 375.9 C416.2 378.4 417.5 380.8 418.3 383.2 C419.0 385.6 419.4 388.0 419.3 390.5 C419.2 392.9 417.8 396.5 417.5 397.7" fill="none" stroke="#6c4e28" stroke-width="8.7" opacity="0.66" stroke-linecap="round"/><path d="M342.0 109.9 C342.1 111.1 342.2 114.9 342.5 117.4 C342.9 119.9 343.4 122.5 344.1 125.0 C344.7 127.5 345.5 130.0 346.3 132.5 C347.1 135.0 348.1 137.5 348.9 140.1 C349.8 142.6 350.7 145.1 351.4 147.6 C352.1 150.1 352.8 152.6 353.2 155.2 C353.6 157.7 353.9 160.2 353.9 162.7 C354.0 165.2 353.8 167.7 353.4 170.2 C353.1 172.8 352.4 175.3 351.7 177.8 C351.0 180.3 350.0 182.8 349.1 185.3 C348.2 187.9 347.0 190.4 346.1 192.9 C345.1 195.4 344.1 197.9 343.3 200.4 C342.5 203.0 341.8 205.5 341.4 208.0 C341.0 210.5 340.7 213.0 340.8 215.5 C340.8 218.0 341.1 220.6 341.7 223.1 C342.3 225.6 343.1 228.1 344.1 230.6 C345.1 233.1 346.3 235.7 347.6 238.2 C348.8 240.7 350.2 243.2 351.5 245.7 C352.7 248.2 354.0 250.7 355.1 253.3 C356.1 255.8 357.0 258.3 357.6 260.8 C358.2 263.3 358.6 265.8 358.6 268.4 C358.6 270.9 358.3 273.4 357.8 275.9 C357.2 278.4 355.6 282.2 355.2 283.5" fill="none" stroke="#e2c88c" stroke-width="4.9" opacity="0.79" stroke-linecap="round"/><path d="M401.6 41.9 C401.8 43.1 402.2 46.7 402.3 49.1 C402.4 51.6 402.4 54.0 402.3 56.4 C402.3 58.8 402.1 61.2 402.0 63.6 C401.9 66.0 401.8 68.4 401.9 70.8 C402.1 73.2 402.2 75.6 402.7 78.0 C403.1 80.4 403.7 82.9 404.6 85.3 C405.4 87.7 406.5 90.1 407.8 92.5 C409.0 94.9 410.5 97.3 412.0 99.7 C413.5 102.1 415.2 104.5 416.8 106.9 C418.4 109.3 420.1 111.7 421.5 114.2 C422.9 116.6 424.3 119.0 425.4 121.4 C426.4 123.8 427.3 126.2 427.8 128.6 C428.3 131.0 428.6 133.4 428.6 135.8 C428.6 138.2 428.2 140.6 427.8 143.0 C427.4 145.5 426.4 149.1 426.1 150.3" fill="none" stroke="#2a1a0a" stroke-width="5.3" opacity="0.81" stroke-linecap="round"/><path d="M391.6 109.5 C390.7 110.8 388.2 114.5 386.4 117.0 C384.6 119.5 382.4 121.9 380.8 124.4 C379.1 126.9 377.5 129.4 376.6 131.9 C375.8 134.4 375.4 136.9 375.6 139.4 C375.8 141.9 376.8 144.3 378.0 146.8 C379.2 149.3 381.2 151.8 382.9 154.3 C384.6 156.8 386.8 159.3 388.2 161.8 C389.6 164.3 390.9 166.7 391.3 169.2 C391.7 171.7 391.5 174.2 390.5 176.7 C389.6 179.2 387.7 181.7 385.6 184.2 C383.5 186.6 380.5 189.1 377.9 191.6 C375.4 194.1 372.3 196.6 370.2 199.1 C368.0 201.6 366.0 204.1 365.1 206.6 C364.2 209.0 364.1 211.5 364.8 214.0 C365.5 216.5 367.3 219.0 369.3 221.5 C371.3 224.0 374.3 226.5 376.8 228.9 C379.2 231.4 382.2 233.9 384.1 236.4 C385.9 238.9 387.5 241.4 387.9 243.9 C388.2 246.4 386.5 250.1 386.2 251.3" fill="none" stroke="#2a1a0a" stroke-width="6.6" opacity="0.79" stroke-linecap="round"/><path d="M360.1 -3.0 C359.4 -1.8 357.4 1.9 356.1 4.3 C354.8 6.7 353.5 9.1 352.3 11.6 C351.2 14.0 350.1 16.4 349.3 18.8 C348.5 21.3 347.8 23.7 347.4 26.1 C346.9 28.5 346.7 30.9 346.7 33.4 C346.7 35.8 347.0 38.2 347.3 40.6 C347.6 43.1 348.2 45.5 348.7 47.9 C349.2 50.3 349.9 52.7 350.4 55.2 C350.9 57.6 351.4 60.0 351.6 62.4 C351.8 64.9 352.0 67.3 351.8 69.7 C351.6 72.1 351.1 74.5 350.4 77.0 C349.6 79.4 348.6 81.8 347.3 84.2 C346.0 86.7 344.4 89.1 342.7 91.5 C341.0 93.9 339.0 96.3 337.1 98.8 C335.2 101.2 333.2 103.6 331.3 106.0 C329.5 108.5 327.7 110.9 326.2 113.3 C324.7 115.7 323.1 119.4 322.5 120.6" fill="none" stroke="#dcc084" stroke-width="5.0" opacity="0.81" stroke-linecap="round"/><path d="M401.4 139.1 C401.7 140.3 402.6 144.0 403.2 146.5 C403.9 149.0 404.6 151.4 405.2 153.9 C405.8 156.4 406.4 158.8 406.7 161.3 C407.1 163.8 407.3 166.2 407.2 168.7 C407.1 171.1 406.8 173.6 406.2 176.1 C405.6 178.5 404.8 181.0 403.7 183.5 C402.6 185.9 401.3 188.4 399.9 190.9 C398.5 193.3 396.8 195.8 395.3 198.2 C393.8 200.7 392.1 203.2 390.7 205.6 C389.2 208.1 387.8 210.6 386.8 213.0 C385.8 215.5 384.9 218.0 384.4 220.4 C383.9 222.9 383.8 225.3 383.9 227.8 C384.1 230.3 384.6 232.7 385.4 235.2 C386.1 237.7 387.3 240.1 388.5 242.6 C389.6 245.1 391.1 247.5 392.4 250.0 C393.7 252.4 395.2 254.9 396.3 257.4 C397.4 259.8 398.5 262.3 399.2 264.8 C399.8 267.2 399.9 270.9 400.1 272.2" fill="none" stroke="#c8a468" stroke-width="6.0" opacity="0.71" stroke-linecap="round"/><path d="M379.1 24.4 C378.9 25.7 378.8 29.5 378.3 32.1 C377.8 34.7 377.1 37.2 376.3 39.8 C375.4 42.4 374.3 44.9 373.2 47.5 C372.0 50.1 370.7 52.6 369.3 55.2 C368.0 57.8 366.6 60.4 365.3 62.9 C364.1 65.5 362.8 68.1 361.7 70.6 C360.7 73.2 359.8 75.8 359.2 78.3 C358.5 80.9 358.1 83.5 358.0 86.1 C357.8 88.6 357.9 91.2 358.3 93.8 C358.6 96.3 359.2 98.9 359.9 101.5 C360.6 104.0 361.6 106.6 362.4 109.2 C363.3 111.8 364.3 114.3 365.1 116.9 C365.9 119.5 366.8 122.0 367.3 124.6 C367.8 127.2 368.2 129.7 368.2 132.3 C368.2 134.9 368.0 137.5 367.5 140.0 C366.9 142.6 366.0 145.2 364.9 147.7 C363.8 150.3 362.3 152.9 360.8 155.4 C359.3 158.0 357.4 160.6 355.7 163.2 C354.0 165.7 352.0 168.3 350.4 170.9 C348.7 173.4 347.0 176.0 345.7 178.6 C344.4 181.1 343.3 183.7 342.5 186.3 C341.8 188.9 341.4 191.4 341.3 194.0 C341.2 196.6 341.6 199.1 342.1 201.7 C342.7 204.3 343.7 206.8 344.8 209.4 C345.9 212.0 347.3 214.6 348.6 217.1 C349.9 219.7 351.4 222.3 352.6 224.8 C353.8 227.4 355.0 230.0 355.8 232.5 C356.6 235.1 357.1 239.0 357.4 240.2" fill="none" stroke="#34220e" stroke-width="4.3" opacity="0.76" stroke-linecap="round"/><path d="M435.6 -58.7 C435.9 -57.5 436.6 -53.9 437.2 -51.5 C437.8 -49.1 438.5 -46.6 439.2 -44.2 C439.9 -41.8 440.7 -39.4 441.4 -37.0 C442.0 -34.6 442.6 -32.2 443.1 -29.8 C443.5 -27.4 443.9 -25.0 444.0 -22.5 C444.1 -20.1 444.1 -17.7 443.8 -15.3 C443.6 -12.9 443.1 -10.5 442.6 -8.1 C442.0 -5.7 441.2 -3.3 440.4 -0.9 C439.6 1.6 438.6 4.0 437.8 6.4 C436.9 8.8 436.0 11.2 435.3 13.6 C434.6 16.0 433.9 18.4 433.5 20.8 C433.1 23.3 432.9 25.7 432.9 28.1 C432.9 30.5 433.2 32.9 433.7 35.3 C434.2 37.7 434.9 40.1 435.8 42.5 C436.7 44.9 437.8 47.4 438.9 49.8 C440.0 52.2 441.3 54.6 442.3 57.0 C443.4 59.4 444.6 61.8 445.4 64.2 C446.3 66.6 447.1 69.0 447.5 71.5 C447.9 73.9 447.9 77.5 448.0 78.7" fill="none" stroke="#dcc084" stroke-width="8.6" opacity="0.94" stroke-linecap="round"/><path d="M435.3 237.7 C435.0 238.9 434.2 242.8 433.9 245.3 C433.6 247.8 433.6 250.4 433.7 252.9 C433.9 255.4 434.2 258.0 434.7 260.5 C435.2 263.1 435.9 265.6 436.5 268.1 C437.2 270.7 438.0 273.2 438.6 275.8 C439.3 278.3 439.9 280.8 440.3 283.4 C440.7 285.9 441.0 288.4 441.0 291.0 C441.0 293.5 440.8 296.1 440.3 298.6 C439.8 301.1 439.0 303.7 438.0 306.2 C437.1 308.8 435.9 311.3 434.6 313.8 C433.4 316.4 431.9 318.9 430.6 321.4 C429.3 324.0 427.9 326.5 426.7 329.1 C425.6 331.6 424.6 334.1 423.9 336.7 C423.2 339.2 422.7 341.8 422.6 344.3 C422.4 346.8 422.6 349.4 423.1 351.9 C423.5 354.4 424.3 357.0 425.2 359.5 C426.1 362.1 427.3 364.6 428.3 367.1 C429.4 369.7 430.6 372.2 431.6 374.8 C432.6 377.3 433.5 379.8 434.1 382.4 C434.6 384.9 435.0 387.4 434.9 390.0 C434.8 392.5 434.4 395.1 433.7 397.6 C432.9 400.1 431.8 402.7 430.4 405.2 C429.1 407.8 427.4 410.3 425.7 412.8 C424.0 415.4 421.3 419.2 420.4 420.4" fill="none" stroke="#bc985c" stroke-width="6.0" opacity="0.93" stroke-linecap="round"/><path d="M370.2 309.1 C370.4 310.3 370.9 314.1 371.0 316.6 C371.1 319.1 371.1 321.6 370.9 324.0 C370.7 326.5 370.3 329.0 369.7 331.5 C369.2 334.0 368.4 336.5 367.6 339.0 C366.8 341.5 365.8 344.0 364.8 346.5 C363.8 349.0 362.7 351.4 361.8 353.9 C360.8 356.4 359.8 358.9 359.0 361.4 C358.3 363.9 357.6 366.4 357.1 368.9 C356.7 371.4 356.4 373.9 356.4 376.4 C356.4 378.8 356.6 381.3 356.9 383.8 C357.3 386.3 357.9 388.8 358.5 391.3 C359.2 393.8 360.0 396.3 360.8 398.8 C361.5 401.3 362.4 403.8 363.0 406.2 C363.7 408.7 364.3 411.2 364.6 413.7 C365.0 416.2 365.2 418.7 365.1 421.2 C365.0 423.7 364.6 426.2 364.1 428.7 C363.5 431.2 362.6 433.7 361.6 436.1 C360.6 438.6 359.3 441.1 358.1 443.6 C356.8 446.1 355.3 448.6 354.0 451.1 C352.8 453.6 351.4 456.1 350.3 458.6 C349.2 461.1 348.3 463.5 347.6 466.0 C346.9 468.5 346.5 471.0 346.4 473.5 C346.3 476.0 346.5 478.5 346.9 481.0 C347.3 483.5 348.1 486.0 349.0 488.5 C349.8 490.9 350.9 493.4 352.0 495.9 C353.1 498.4 354.3 500.9 355.3 503.4 C356.2 505.9 357.2 508.4 357.9 510.9 C358.5 513.4 358.9 517.1 359.1 518.3" fill="none" stroke="#6c4e28" stroke-width="7.6" opacity="0.80" stroke-linecap="round"/><path d="M435.8 9.1 C436.1 10.4 437.3 14.1 437.8 16.6 C438.2 19.0 438.4 21.5 438.5 24.0 C438.5 26.5 438.2 28.9 437.9 31.4 C437.5 33.9 436.9 36.4 436.3 38.8 C435.8 41.3 435.1 43.8 434.5 46.2 C434.0 48.7 433.4 51.2 433.2 53.7 C432.9 56.1 432.8 58.6 433.0 61.1 C433.2 63.6 433.6 66.0 434.3 68.5 C435.0 71.0 436.1 73.5 437.2 75.9 C438.3 78.4 439.8 80.9 441.2 83.4 C442.5 85.8 444.1 88.3 445.4 90.8 C446.8 93.3 448.1 95.7 449.1 98.2 C450.1 100.7 451.0 103.2 451.4 105.6 C451.9 108.1 452.0 110.6 451.9 113.0 C451.8 115.5 451.2 118.0 450.6 120.5 C450.0 122.9 449.0 125.4 448.1 127.9 C447.2 130.4 446.0 132.8 445.2 135.3 C444.4 137.8 443.5 140.3 443.1 142.7 C442.6 145.2 442.4 147.7 442.5 150.2 C442.7 152.6 443.2 155.1 444.1 157.6 C445.0 160.1 446.3 162.5 447.7 165.0 C449.1 167.5 451.0 169.9 452.7 172.4 C454.4 174.9 456.4 177.4 458.0 179.8 C459.6 182.3 461.3 184.8 462.5 187.3 C463.6 189.7 464.6 192.2 465.1 194.7 C465.6 197.2 465.6 199.6 465.3 202.1 C465.0 204.6 463.7 208.3 463.3 209.5" fill="none" stroke="#2a1a0a" stroke-width="5.8" opacity="0.69" stroke-linecap="round"/><path d="M413.6 127.3 C414.1 128.5 415.3 132.0 416.4 134.4 C417.5 136.8 418.9 139.2 420.2 141.6 C421.6 144.0 423.1 146.4 424.4 148.8 C425.7 151.1 427.0 153.5 427.9 155.9 C428.9 158.3 429.7 160.7 430.0 163.1 C430.4 165.5 430.4 167.8 430.1 170.2 C429.8 172.6 429.0 175.0 428.0 177.4 C427.0 179.8 425.6 182.2 424.2 184.5 C422.8 186.9 421.0 189.3 419.5 191.7 C418.0 194.1 416.3 196.5 415.1 198.9 C413.8 201.3 412.6 203.6 412.0 206.0 C411.4 208.4 411.1 210.8 411.3 213.2 C411.4 215.6 412.1 218.0 413.2 220.3 C414.3 222.7 415.9 225.1 417.6 227.5 C419.4 229.9 421.6 232.3 423.7 234.7 C425.8 237.1 428.2 239.4 430.2 241.8 C432.2 244.2 434.2 246.6 435.6 249.0 C437.0 251.4 438.2 253.8 438.7 256.1 C439.3 258.5 438.7 262.1 438.7 263.3" fill="none" stroke="#a8844a" stroke-width="6.9" opacity="0.66" stroke-linecap="round"/><path d="M359.2 89.4 C359.8 90.5 361.5 94.0 362.4 96.3 C363.2 98.6 364.0 100.9 364.4 103.2 C364.8 105.5 365.0 107.9 364.8 110.2 C364.6 112.5 364.1 114.8 363.5 117.1 C362.8 119.4 361.8 121.7 360.9 124.0 C360.0 126.4 358.8 128.7 357.9 131.0 C357.0 133.3 356.1 135.6 355.6 137.9 C355.1 140.2 354.8 142.5 354.9 144.9 C355.1 147.2 355.6 149.5 356.6 151.8 C357.5 154.1 358.9 156.4 360.5 158.7 C362.1 161.0 364.1 163.4 366.0 165.7 C368.0 168.0 370.2 170.3 372.0 172.6 C373.9 174.9 376.2 178.4 377.1 179.5" fill="none" stroke="#34220e" stroke-width="4.5" opacity="0.69" stroke-linecap="round"/><path d="M392.4 193.3 C391.9 194.5 390.3 198.2 389.4 200.7 C388.5 203.1 387.7 205.6 387.0 208.0 C386.4 210.5 385.8 212.9 385.4 215.4 C385.0 217.8 384.8 220.3 384.7 222.7 C384.6 225.2 384.7 227.7 384.8 230.1 C384.9 232.6 385.2 235.0 385.4 237.5 C385.7 239.9 386.0 242.4 386.2 244.8 C386.4 247.3 386.6 249.7 386.7 252.2 C386.7 254.7 386.7 257.1 386.4 259.6 C386.1 262.0 385.7 264.5 385.0 266.9 C384.3 269.4 383.4 271.8 382.4 274.3 C381.3 276.7 380.0 279.2 378.7 281.7 C377.3 284.1 375.7 286.6 374.2 289.0 C372.6 291.5 370.9 293.9 369.4 296.4 C367.9 298.8 365.7 302.5 365.0 303.7" fill="none" stroke="#b08c52" stroke-width="4.3" opacity="0.68" stroke-linecap="round"/><path d="M335.5 65.6 C334.6 66.9 331.7 70.6 330.1 73.0 C328.5 75.5 327.0 78.0 326.0 80.5 C325.0 83.0 324.3 85.4 324.1 87.9 C324.0 90.4 324.3 92.9 324.9 95.3 C325.6 97.8 326.8 100.3 328.0 102.8 C329.2 105.3 330.8 107.7 332.1 110.2 C333.3 112.7 334.8 115.2 335.7 117.7 C336.5 120.1 337.2 122.6 337.2 125.1 C337.2 127.6 336.7 130.0 335.6 132.5 C334.5 135.0 332.7 137.5 330.7 140.0 C328.7 142.4 325.9 144.9 323.3 147.4 C320.7 149.9 317.6 152.3 315.1 154.8 C312.5 157.3 309.9 159.8 308.0 162.3 C306.1 164.7 304.5 167.2 303.8 169.7 C303.0 172.2 303.0 174.6 303.5 177.1 C304.1 179.6 305.5 182.1 307.2 184.6 C308.8 187.0 311.2 189.5 313.4 192.0 C315.5 194.5 319.0 198.2 320.1 199.4" fill="none" stroke="#c8a468" stroke-width="6.4" opacity="0.62" stroke-linecap="round"/><path d="M399.7 130.5 C400.1 131.7 401.4 135.2 402.0 137.6 C402.7 139.9 403.3 142.3 403.6 144.7 C403.9 147.0 404.0 149.4 403.8 151.7 C403.6 154.1 403.2 156.5 402.5 158.8 C401.9 161.2 400.9 163.6 400.0 165.9 C399.1 168.3 397.9 170.6 396.9 173.0 C395.9 175.4 394.9 177.7 394.2 180.1 C393.5 182.4 393.0 184.8 392.8 187.2 C392.7 189.5 392.9 191.9 393.4 194.3 C393.9 196.6 394.8 199.0 395.8 201.3 C396.9 203.7 398.3 206.1 399.6 208.4 C400.9 210.8 402.4 213.1 403.6 215.5 C404.8 217.9 406.0 220.2 406.7 222.6 C407.3 225.0 407.8 227.3 407.7 229.7 C407.6 232.0 406.5 235.6 406.3 236.8" fill="none" stroke="#b08c52" stroke-width="6.1" opacity="0.84" stroke-linecap="round"/><path d="M405.1 41.6 C405.4 42.8 406.1 46.6 406.8 49.1 C407.6 51.6 408.7 54.2 409.7 56.7 C410.7 59.2 411.9 61.7 412.8 64.2 C413.8 66.8 414.7 69.3 415.3 71.8 C415.9 74.3 416.4 76.9 416.4 79.4 C416.5 81.9 416.2 84.4 415.7 86.9 C415.2 89.5 414.4 92.0 413.5 94.5 C412.7 97.0 411.5 99.6 410.6 102.1 C409.7 104.6 408.8 107.1 408.2 109.6 C407.6 112.2 407.2 114.7 407.3 117.2 C407.3 119.7 407.7 122.2 408.4 124.8 C409.1 127.3 410.2 129.8 411.4 132.3 C412.6 134.9 414.3 137.4 415.6 139.9 C417.0 142.4 418.5 144.9 419.6 147.5 C420.7 150.0 421.8 152.5 422.2 155.0 C422.7 157.6 422.8 160.1 422.6 162.6 C422.3 165.1 421.5 167.6 420.5 170.2 C419.6 172.7 418.1 175.2 416.9 177.7 C415.6 180.2 414.0 182.8 412.9 185.3 C411.8 187.8 410.8 190.3 410.3 192.9 C409.8 195.4 409.6 197.9 410.0 200.4 C410.3 202.9 411.3 205.5 412.4 208.0 C413.6 210.5 415.4 213.0 417.0 215.6 C418.7 218.1 421.5 221.9 422.4 223.1" fill="none" stroke="#a8844a" stroke-width="7.4" opacity="0.74" stroke-linecap="round"/><path d="M384.6 78.7 C385.0 79.9 386.1 83.5 387.2 85.9 C388.3 88.4 389.7 90.8 390.9 93.2 C392.0 95.6 393.4 98.0 394.1 100.5 C394.9 102.9 395.5 105.3 395.4 107.7 C395.4 110.1 394.8 112.6 393.8 115.0 C392.8 117.4 391.1 119.8 389.3 122.2 C387.5 124.7 385.1 127.1 383.1 129.5 C381.0 131.9 378.6 134.3 377.0 136.8 C375.3 139.2 373.7 141.6 373.0 144.0 C372.3 146.4 372.1 148.9 372.7 151.3 C373.2 153.7 374.6 156.1 376.2 158.5 C377.8 161.0 380.2 163.4 382.4 165.8 C384.5 168.2 387.9 171.8 389.0 173.1" fill="none" stroke="#b08c52" stroke-width="7.6" opacity="0.77" stroke-linecap="round"/><path d="M413.2 320.5 C413.0 321.7 412.0 325.3 412.0 327.6 C412.1 330.0 412.5 332.4 413.4 334.8 C414.3 337.2 415.7 339.6 417.3 342.0 C418.9 344.4 421.1 346.7 423.0 349.1 C425.0 351.5 427.3 353.9 429.0 356.3 C430.8 358.7 432.5 361.1 433.6 363.4 C434.6 365.8 435.3 368.2 435.3 370.6 C435.3 373.0 434.6 375.4 433.5 377.8 C432.5 380.2 430.6 382.5 428.8 384.9 C427.0 387.3 424.5 389.7 422.5 392.1 C420.5 394.5 418.3 396.9 416.8 399.3 C415.4 401.6 414.1 404.0 413.7 406.4 C413.3 408.8 413.6 411.2 414.6 413.6 C415.5 416.0 417.4 418.3 419.6 420.7 C421.8 423.1 424.8 425.5 427.6 427.9 C430.5 430.3 433.9 432.7 436.6 435.1 C439.3 437.4 442.6 441.0 443.9 442.2" fill="none" stroke="#d8b87c" stroke-width="7.2" opacity="0.93" stroke-linecap="round"/><path d="M357.7 186.7 C358.2 187.9 359.7 191.4 360.7 193.8 C361.7 196.2 363.0 198.6 363.8 200.9 C364.5 203.3 365.2 205.7 365.3 208.0 C365.5 210.4 365.2 212.8 364.5 215.2 C363.9 217.5 362.6 219.9 361.2 222.3 C359.9 224.7 357.9 227.0 356.3 229.4 C354.6 231.8 352.7 234.2 351.4 236.5 C350.0 238.9 348.8 241.3 348.2 243.7 C347.7 246.0 347.7 248.4 348.2 250.8 C348.8 253.2 350.0 255.5 351.5 257.9 C352.9 260.3 355.1 262.6 356.9 265.0 C358.7 267.4 361.0 269.8 362.5 272.1 C364.0 274.5 365.3 278.1 365.9 279.3" fill="none" stroke="#6c4e28" stroke-width="5.3" opacity="0.77" stroke-linecap="round"/><path d="M362.1 300.9 C362.0 302.1 361.8 305.8 361.4 308.2 C361.1 310.6 360.6 313.0 360.1 315.4 C359.6 317.8 359.0 320.2 358.6 322.6 C358.1 325.0 357.6 327.4 357.3 329.8 C357.0 332.2 356.8 334.6 356.8 337.0 C356.8 339.4 357.0 341.8 357.5 344.2 C357.9 346.7 358.6 349.1 359.5 351.5 C360.4 353.9 361.6 356.3 362.9 358.7 C364.1 361.1 365.7 363.5 367.2 365.9 C368.7 368.3 370.4 370.7 372.0 373.1 C373.5 375.5 375.1 377.9 376.5 380.3 C377.8 382.7 379.1 385.2 380.0 387.6 C381.0 390.0 381.7 392.4 382.1 394.8 C382.4 397.2 382.5 399.6 382.3 402.0 C382.1 404.4 381.0 408.0 380.8 409.2" fill="none" stroke="#46301a" stroke-width="7.6" opacity="0.92" stroke-linecap="round"/><path d="M386.7 40.2 C386.1 41.5 384.1 45.3 382.9 47.9 C381.6 50.5 380.3 53.0 379.1 55.6 C378.0 58.1 376.9 60.7 376.1 63.2 C375.3 65.8 374.6 68.4 374.3 70.9 C373.9 73.5 373.8 76.0 374.0 78.6 C374.2 81.1 374.7 83.7 375.4 86.2 C376.1 88.8 377.1 91.4 378.2 93.9 C379.3 96.5 380.6 99.0 381.9 101.6 C383.2 104.1 384.6 106.7 385.8 109.3 C387.0 111.8 388.3 114.4 389.2 116.9 C390.1 119.5 390.8 122.0 391.2 124.6 C391.6 127.2 391.8 129.7 391.5 132.3 C391.3 134.8 390.7 137.4 389.7 139.9 C388.8 142.5 387.5 145.1 386.1 147.6 C384.6 150.2 382.8 152.7 381.0 155.3 C379.2 157.8 377.1 160.4 375.3 162.9 C373.4 165.5 371.4 168.1 369.8 170.6 C368.1 173.2 366.6 175.7 365.4 178.3 C364.3 180.8 363.5 183.4 363.1 186.0 C362.6 188.5 362.6 191.1 363.0 193.6 C363.4 196.2 364.2 198.7 365.4 201.3 C366.5 203.9 368.1 206.4 369.7 209.0 C371.4 211.5 373.4 214.1 375.3 216.6 C377.2 219.2 379.3 221.7 381.1 224.3 C382.9 226.9 384.6 229.4 386.0 232.0 C387.3 234.5 388.5 238.4 389.0 239.6" fill="none" stroke="#e2c88c" stroke-width="8.5" opacity="0.92" stroke-linecap="round"/><path d="M336.8 133.3 C336.6 134.5 335.6 138.2 335.3 140.6 C335.1 143.1 335.1 145.5 335.4 148.0 C335.7 150.5 336.3 152.9 337.1 155.4 C337.9 157.8 339.0 160.3 340.1 162.7 C341.1 165.2 342.4 167.6 343.4 170.1 C344.4 172.5 345.4 175.0 346.0 177.5 C346.6 179.9 347.0 182.4 346.9 184.8 C346.9 187.3 346.5 189.7 345.8 192.2 C345.1 194.6 344.0 197.1 342.8 199.5 C341.6 202.0 340.0 204.5 338.6 206.9 C337.3 209.4 335.8 211.8 334.7 214.3 C333.6 216.7 332.5 219.2 332.1 221.6 C331.6 224.1 331.4 226.6 331.7 229.0 C332.0 231.5 332.8 233.9 333.9 236.4 C334.9 238.8 336.5 241.3 337.9 243.7 C339.4 246.2 341.3 248.6 342.7 251.1 C344.2 253.6 345.7 256.0 346.7 258.5 C347.7 260.9 348.4 263.4 348.6 265.8 C348.7 268.3 348.4 270.7 347.6 273.2 C346.8 275.7 345.4 278.1 343.9 280.6 C342.4 283.0 340.4 285.5 338.5 287.9 C336.7 290.4 334.0 294.1 333.0 295.3" fill="none" stroke="#46301a" stroke-width="5.4" opacity="0.91" stroke-linecap="round"/><path d="M362.1 257.9 C362.5 259.2 363.7 263.0 364.8 265.5 C365.8 268.0 367.1 270.5 368.2 273.0 C369.3 275.6 370.5 278.1 371.4 280.6 C372.3 283.1 373.1 285.6 373.5 288.2 C374.0 290.7 374.1 293.2 374.0 295.7 C373.8 298.2 373.3 300.8 372.6 303.3 C371.9 305.8 370.8 308.3 369.7 310.9 C368.7 313.4 367.3 315.9 366.3 318.4 C365.2 320.9 364.1 323.5 363.4 326.0 C362.6 328.5 362.1 331.0 362.0 333.5 C361.9 336.1 362.1 338.6 362.7 341.1 C363.3 343.6 364.4 346.1 365.6 348.7 C366.8 351.2 368.4 353.7 369.9 356.2 C371.4 358.7 373.1 361.3 374.5 363.8 C375.9 366.3 377.4 368.8 378.3 371.4 C379.2 373.9 379.8 376.4 379.9 378.9 C380.1 381.4 379.8 384.0 379.1 386.5 C378.5 389.0 377.3 391.5 376.0 394.0 C374.7 396.6 373.0 399.1 371.5 401.6 C370.0 404.1 368.3 406.6 367.0 409.2 C365.7 411.7 364.6 414.2 363.9 416.7 C363.3 419.2 363.1 421.8 363.4 424.3 C363.7 426.8 364.5 429.3 365.7 431.9 C366.9 434.4 368.7 436.9 370.4 439.4 C372.2 441.9 374.4 444.5 376.3 447.0 C378.2 449.5 380.3 452.0 381.8 454.5 C383.3 457.1 384.7 460.8 385.3 462.1" fill="none" stroke="#2a1a0a" stroke-width="3.7" opacity="0.85" stroke-linecap="round"/><path d="M417.2 184.7 C417.7 185.9 419.2 189.7 419.9 192.2 C420.6 194.8 421.3 197.3 421.5 199.8 C421.7 202.4 421.6 204.9 421.2 207.4 C420.8 210.0 420.0 212.5 419.0 215.0 C418.0 217.5 416.6 220.1 415.3 222.6 C414.0 225.1 412.4 227.7 411.2 230.2 C409.9 232.7 408.7 235.2 407.9 237.8 C407.1 240.3 406.5 242.8 406.4 245.4 C406.4 247.9 406.7 250.4 407.4 252.9 C408.1 255.5 409.4 258.0 410.6 260.5 C411.9 263.1 413.5 265.6 415.0 268.1 C416.4 270.6 418.0 273.2 419.1 275.7 C420.2 278.2 421.1 280.8 421.5 283.3 C421.9 285.8 421.8 288.4 421.3 290.9 C420.7 293.4 419.6 295.9 418.2 298.5 C416.9 301.0 414.9 303.5 413.1 306.1 C411.3 308.6 409.1 311.1 407.4 313.6 C405.7 316.2 404.0 318.7 402.9 321.2 C401.8 323.8 401.1 326.3 401.0 328.8 C400.9 331.3 401.4 333.9 402.3 336.4 C403.3 338.9 404.9 341.5 406.6 344.0 C408.3 346.5 411.6 350.3 412.5 351.6" fill="none" stroke="#5a4020" stroke-width="8.3" opacity="0.73" stroke-linecap="round"/><path d="M341.9 -7.0 C342.1 -5.8 342.8 -2.0 343.1 0.5 C343.3 3.0 343.6 5.6 343.6 8.1 C343.6 10.6 343.6 13.1 343.3 15.6 C343.0 18.1 342.6 20.7 342.0 23.2 C341.4 25.7 340.6 28.2 339.7 30.7 C338.9 33.2 337.8 35.8 336.8 38.3 C335.7 40.8 334.5 43.3 333.4 45.8 C332.3 48.3 331.1 50.9 330.0 53.4 C329.0 55.9 328.0 58.4 327.2 60.9 C326.5 63.4 325.8 66.0 325.4 68.5 C324.9 71.0 324.7 73.5 324.7 76.0 C324.7 78.5 324.9 81.1 325.3 83.6 C325.7 86.1 326.4 88.6 327.2 91.1 C327.9 93.6 328.9 96.2 329.9 98.7 C330.8 101.2 331.9 103.7 332.9 106.2 C333.9 108.7 335.0 111.3 335.8 113.8 C336.6 116.3 337.4 118.8 337.9 121.3 C338.4 123.8 338.7 126.4 338.7 128.9 C338.8 131.4 338.5 133.9 338.0 136.4 C337.5 138.9 336.1 142.7 335.7 144.0" fill="none" stroke="#b08c52" stroke-width="4.6" opacity="0.68" stroke-linecap="round"/></g><g filter="url(#b1)"><path d="M358.3 -59.6 C358.6 -58.4 359.6 -54.7 360.2 -52.2 C360.8 -49.8 361.6 -47.3 362.1 -44.9 C362.6 -42.4 363.1 -40.0 363.2 -37.5 C363.4 -35.0 363.4 -32.6 363.0 -30.1 C362.7 -27.7 362.1 -25.2 361.4 -22.8 C360.6 -20.3 359.5 -17.9 358.4 -15.4 C357.4 -12.9 356.1 -10.5 355.0 -8.0 C353.9 -5.6 352.7 -3.1 351.8 -0.7 C351.0 1.8 350.3 4.2 350.0 6.7 C349.6 9.2 349.6 11.6 349.9 14.1 C350.2 16.5 350.9 19.0 351.7 21.4 C352.5 23.9 353.7 26.4 354.8 28.8 C355.9 31.3 357.2 33.7 358.3 36.2 C359.3 38.6 360.3 41.1 360.9 43.5 C361.5 46.0 361.9 48.5 361.8 50.9 C361.7 53.4 361.2 55.8 360.4 58.3 C359.6 60.7 357.5 64.4 356.9 65.6" fill="none" stroke="#e8d49c" stroke-width="2.6" opacity="0.70" stroke-linecap="round"/><path d="M361.5 -16.4 C362.3 -15.2 364.4 -11.7 365.8 -9.4 C367.3 -7.1 368.9 -4.8 370.3 -2.5 C371.6 -0.2 373.0 2.1 374.0 4.4 C375.0 6.7 375.9 9.0 376.4 11.3 C376.9 13.6 377.1 16.0 377.0 18.3 C377.0 20.6 376.5 22.9 376.1 25.2 C375.7 27.5 374.9 29.8 374.4 32.1 C373.9 34.4 373.2 36.7 373.0 39.0 C372.8 41.3 373.1 44.8 373.1 46.0" fill="none" stroke="#50381a" stroke-width="1.9" opacity="0.51" stroke-linecap="round"/><path d="M401.2 146.1 C401.5 147.3 402.3 151.1 402.8 153.6 C403.2 156.1 403.7 158.6 403.9 161.1 C404.1 163.6 404.2 166.1 404.0 168.6 C403.8 171.1 403.5 173.6 402.9 176.1 C402.4 178.6 401.6 181.1 400.7 183.6 C399.8 186.1 398.7 188.6 397.6 191.1 C396.6 193.6 395.3 196.1 394.3 198.6 C393.2 201.1 392.2 203.6 391.4 206.1 C390.6 208.7 389.9 211.2 389.5 213.7 C389.1 216.2 389.0 218.7 389.1 221.2 C389.3 223.7 389.7 226.2 390.3 228.7 C391.0 231.2 391.9 233.7 392.8 236.2 C393.8 238.7 395.0 241.2 396.0 243.7 C397.1 246.2 398.2 248.7 399.0 251.2 C399.9 253.7 400.6 256.2 401.0 258.7 C401.4 261.2 401.6 263.7 401.3 266.2 C401.1 268.7 400.0 272.5 399.7 273.7" fill="none" stroke="#50381a" stroke-width="2.0" opacity="0.55" stroke-linecap="round"/><path d="M414.2 325.3 C414.8 326.6 416.8 330.3 417.8 332.7 C418.7 335.2 419.5 337.7 419.9 340.2 C420.3 342.6 420.4 345.1 420.3 347.6 C420.1 350.1 419.5 352.5 418.8 355.0 C418.1 357.5 417.0 360.0 416.0 362.4 C415.0 364.9 413.7 367.4 412.6 369.9 C411.5 372.3 410.3 374.8 409.6 377.3 C408.8 379.8 408.1 382.2 407.9 384.7 C407.6 387.2 407.7 389.7 408.2 392.1 C408.8 394.6 409.7 397.1 411.0 399.6 C412.3 402.0 414.1 404.5 416.0 407.0 C417.9 409.5 420.2 411.9 422.4 414.4 C424.6 416.9 427.1 419.4 429.3 421.8 C431.4 424.3 433.6 426.8 435.3 429.3 C437.0 431.7 438.5 434.2 439.4 436.7 C440.3 439.2 440.8 441.6 440.8 444.1 C440.8 446.6 440.2 449.1 439.2 451.5 C438.3 454.0 436.8 456.5 435.2 459.0 C433.6 461.4 431.5 463.9 429.6 466.4 C427.8 468.9 424.9 472.6 424.0 473.8" fill="none" stroke="#50381a" stroke-width="2.2" opacity="0.79" stroke-linecap="round"/><path d="M343.9 201.1 C343.8 202.3 343.7 205.9 343.2 208.4 C342.7 210.8 341.9 213.2 341.0 215.7 C340.1 218.1 338.9 220.5 337.9 223.0 C336.8 225.4 335.6 227.8 334.8 230.3 C334.0 232.7 333.2 235.1 332.8 237.6 C332.5 240.0 332.4 242.4 332.7 244.9 C333.0 247.3 333.8 249.7 334.7 252.2 C335.6 254.6 337.0 257.0 338.2 259.5 C339.5 261.9 341.1 264.3 342.2 266.8 C343.4 269.2 344.7 271.6 345.4 274.1 C346.1 276.5 346.6 278.9 346.5 281.4 C346.4 283.8 345.9 286.2 345.0 288.7 C344.1 291.1 342.6 293.6 341.1 296.0 C339.6 298.4 337.7 300.9 336.1 303.3 C334.4 305.7 332.1 309.4 331.4 310.6" fill="none" stroke="#2c1c0c" stroke-width="2.8" opacity="0.55" stroke-linecap="round"/><path d="M369.8 226.8 C370.0 227.9 370.5 231.3 371.1 233.6 C371.8 235.9 372.6 238.2 373.5 240.5 C374.5 242.7 375.7 245.0 376.9 247.3 C378.2 249.6 379.7 251.9 381.1 254.1 C382.5 256.4 384.1 258.7 385.5 261.0 C386.9 263.2 388.3 265.5 389.5 267.8 C390.6 270.1 391.6 272.4 392.4 274.6 C393.1 276.9 393.6 279.2 393.8 281.5 C394.1 283.8 394.0 286.0 393.8 288.3 C393.5 290.6 393.0 292.9 392.5 295.2 C392.0 297.4 391.2 299.7 390.6 302.0 C390.1 304.3 389.4 307.7 389.1 308.8" fill="none" stroke="#3a2610" stroke-width="3.4" opacity="0.71" stroke-linecap="round"/><path d="M404.7 289.0 C404.3 290.3 403.2 294.0 402.2 296.5 C401.2 298.9 400.0 301.4 398.8 303.9 C397.6 306.4 396.3 308.8 395.1 311.3 C393.9 313.8 392.7 316.3 391.7 318.8 C390.7 321.2 389.8 323.7 389.2 326.2 C388.6 328.7 388.2 331.2 388.1 333.6 C388.0 336.1 388.2 338.6 388.6 341.1 C388.9 343.5 389.6 346.0 390.2 348.5 C390.9 351.0 391.8 353.5 392.5 355.9 C393.2 358.4 394.0 360.9 394.5 363.4 C395.1 365.9 395.5 368.3 395.6 370.8 C395.7 373.3 395.5 375.8 395.0 378.2 C394.5 380.7 393.6 383.2 392.6 385.7 C391.5 388.2 390.0 390.6 388.5 393.1 C387.0 395.6 385.1 398.1 383.5 400.6 C381.8 403.0 380.0 405.5 378.4 408.0 C376.9 410.5 375.5 412.9 374.4 415.4 C373.4 417.9 372.6 420.4 372.2 422.9 C371.8 425.3 371.9 427.8 372.2 430.3 C372.5 432.8 373.3 435.3 374.2 437.7 C375.1 440.2 377.0 443.9 377.6 445.2" fill="none" stroke="#d8bc80" stroke-width="1.9" opacity="0.46" stroke-linecap="round"/><path d="M358.4 53.9 C358.5 55.0 358.5 58.5 358.8 60.8 C359.1 63.1 359.7 65.4 360.4 67.7 C361.1 70.1 362.0 72.4 363.0 74.7 C364.1 77.0 365.3 79.3 366.5 81.6 C367.7 83.9 369.1 86.3 370.3 88.6 C371.5 90.9 372.7 93.2 373.6 95.5 C374.6 97.8 375.4 100.1 375.9 102.5 C376.4 104.8 376.7 107.1 376.7 109.4 C376.6 111.7 376.3 114.0 375.8 116.3 C375.2 118.6 374.3 121.0 373.4 123.3 C372.5 125.6 371.2 127.9 370.2 130.2 C369.1 132.5 367.8 134.8 366.9 137.2 C365.9 139.5 364.9 142.9 364.5 144.1" fill="none" stroke="#d8bc80" stroke-width="1.9" opacity="0.85" stroke-linecap="round"/><path d="M350.8 89.7 C350.9 90.9 350.9 94.6 351.2 97.0 C351.5 99.5 351.9 101.9 352.6 104.4 C353.2 106.8 354.1 109.3 355.0 111.7 C356.0 114.1 357.1 116.6 358.3 119.0 C359.5 121.5 360.8 123.9 362.1 126.4 C363.4 128.8 364.7 131.3 365.8 133.7 C367.0 136.1 368.1 138.6 369.0 141.0 C369.9 143.5 370.7 145.9 371.1 148.4 C371.6 150.8 371.9 153.2 371.9 155.7 C371.9 158.1 371.6 160.6 371.2 163.0 C370.8 165.5 370.1 167.9 369.4 170.3 C368.7 172.8 367.7 175.2 366.9 177.7 C366.1 180.1 365.1 182.6 364.4 185.0 C363.7 187.5 362.9 189.9 362.6 192.3 C362.2 194.8 362.0 197.2 362.1 199.7 C362.2 202.1 362.6 204.6 363.3 207.0 C364.0 209.4 365.8 213.1 366.3 214.3" fill="none" stroke="#ecd8a4" stroke-width="3.1" opacity="0.52" stroke-linecap="round"/><path d="M362.9 276.2 C363.0 277.4 363.2 281.1 363.5 283.5 C363.9 285.9 364.6 288.4 365.2 290.8 C365.8 293.2 366.6 295.7 367.3 298.1 C368.0 300.5 368.8 303.0 369.3 305.4 C369.7 307.8 370.2 310.3 370.3 312.7 C370.4 315.1 370.3 317.6 370.0 320.0 C369.6 322.4 368.9 324.9 368.1 327.3 C367.2 329.7 366.0 332.2 364.8 334.6 C363.6 337.1 362.2 339.5 360.9 341.9 C359.6 344.4 358.2 346.8 357.1 349.2 C355.9 351.7 354.9 354.1 354.2 356.5 C353.5 359.0 353.0 361.4 352.9 363.8 C352.8 366.3 353.0 368.7 353.5 371.1 C354.0 373.6 354.9 376.0 355.9 378.4 C356.8 380.9 358.1 383.3 359.2 385.7 C360.3 388.2 361.6 390.6 362.6 393.0 C363.6 395.5 364.6 397.9 365.1 400.3 C365.6 402.8 365.9 405.2 365.7 407.6 C365.6 410.1 365.0 412.5 364.2 414.9 C363.3 417.4 362.0 419.8 360.5 422.2 C359.1 424.7 357.2 427.1 355.5 429.5 C353.7 432.0 351.0 435.6 350.1 436.8" fill="none" stroke="#e0c890" stroke-width="3.4" opacity="0.61" stroke-linecap="round"/><path d="M389.4 276.1 C389.2 277.2 388.6 280.8 388.4 283.1 C388.2 285.5 388.1 287.8 388.1 290.2 C388.0 292.5 388.1 294.9 388.1 297.2 C388.1 299.6 388.2 301.9 388.2 304.3 C388.1 306.7 388.1 309.0 388.0 311.4 C387.8 313.7 387.5 316.1 387.1 318.4 C386.7 320.8 386.1 323.1 385.4 325.5 C384.6 327.8 383.7 330.2 382.6 332.5 C381.5 334.9 380.2 337.2 378.9 339.6 C377.6 341.9 376.0 344.3 374.5 346.6 C373.0 349.0 370.7 352.5 369.9 353.7" fill="none" stroke="#e8d49c" stroke-width="2.5" opacity="0.50" stroke-linecap="round"/><path d="M423.1 53.5 C423.1 54.7 423.1 58.2 423.5 60.6 C423.9 63.0 424.6 65.4 425.4 67.7 C426.1 70.1 427.1 72.5 427.9 74.9 C428.6 77.2 429.5 79.6 429.9 82.0 C430.3 84.4 430.6 86.7 430.4 89.1 C430.2 91.5 429.6 93.9 428.8 96.2 C427.9 98.6 426.5 101.0 425.1 103.4 C423.7 105.7 421.9 108.1 420.4 110.5 C418.8 112.9 417.1 115.2 415.8 117.6 C414.5 120.0 413.4 122.4 412.8 124.7 C412.2 127.1 412.0 129.5 412.3 131.9 C412.5 134.2 413.3 136.6 414.3 139.0 C415.3 141.4 416.8 143.7 418.1 146.1 C419.4 148.5 421.1 150.9 422.2 153.2 C423.3 155.6 424.5 158.0 424.9 160.4 C425.4 162.7 425.4 165.1 424.9 167.5 C424.4 169.9 423.2 172.2 421.8 174.6 C420.3 177.0 417.1 180.6 416.2 181.7" fill="none" stroke="#50381a" stroke-width="2.0" opacity="0.67" stroke-linecap="round"/><path d="M352.7 -57.0 C352.5 -55.7 351.9 -52.0 351.5 -49.4 C351.1 -46.9 350.5 -44.4 350.1 -41.9 C349.7 -39.4 349.3 -36.8 349.2 -34.3 C349.1 -31.8 349.2 -29.3 349.5 -26.8 C349.8 -24.2 350.4 -21.7 351.1 -19.2 C351.8 -16.7 352.8 -14.1 353.7 -11.6 C354.6 -9.1 355.8 -6.6 356.6 -4.1 C357.5 -1.5 358.4 1.0 358.9 3.5 C359.4 6.0 359.8 8.5 359.8 11.1 C359.8 13.6 359.5 16.1 359.1 18.6 C358.6 21.2 357.8 23.7 357.1 26.2 C356.4 28.7 355.4 31.2 354.7 33.8 C354.1 36.3 353.4 38.8 353.1 41.3 C352.8 43.8 352.7 46.4 353.0 48.9 C353.3 51.4 354.0 53.9 354.8 56.4 C355.7 59.0 357.0 61.5 358.2 64.0 C359.4 66.5 360.9 69.1 362.0 71.6 C363.2 74.1 364.4 76.6 365.1 79.1 C365.9 81.7 366.4 84.2 366.5 86.7 C366.5 89.2 365.8 93.0 365.6 94.3" fill="none" stroke="#ecd8a4" stroke-width="3.0" opacity="0.85" stroke-linecap="round"/><path d="M385.1 114.1 C385.3 115.4 386.1 119.1 386.6 121.6 C387.0 124.1 387.6 126.6 387.9 129.1 C388.3 131.5 388.6 134.0 388.6 136.5 C388.7 139.0 388.6 141.5 388.3 144.0 C388.1 146.5 387.6 149.0 387.0 151.5 C386.4 154.0 385.5 156.4 384.7 158.9 C383.9 161.4 383.0 163.9 382.2 166.4 C381.4 168.9 380.5 171.4 379.9 173.9 C379.3 176.4 378.8 178.8 378.5 181.3 C378.3 183.8 378.3 186.3 378.4 188.8 C378.6 191.3 379.1 193.8 379.7 196.3 C380.2 198.8 381.1 201.3 381.8 203.7 C382.6 206.2 383.6 208.7 384.3 211.2 C385.0 213.7 385.8 216.2 386.2 218.7 C386.7 221.2 387.0 223.7 387.0 226.2 C387.0 228.6 386.7 231.1 386.2 233.6 C385.7 236.1 384.8 238.6 383.9 241.1 C382.9 243.6 381.7 246.1 380.6 248.6 C379.4 251.0 378.1 253.5 377.1 256.0 C376.0 258.5 375.0 261.0 374.3 263.5 C373.6 266.0 373.3 269.7 373.1 271.0" fill="none" stroke="#c8a868" stroke-width="2.7" opacity="0.56" stroke-linecap="round"/><path d="M432.2 357.6 C432.3 358.8 433.2 362.3 433.1 364.7 C433.0 367.0 432.2 369.4 431.4 371.8 C430.5 374.1 429.0 376.5 427.9 378.8 C426.8 381.2 425.4 383.5 424.7 385.9 C423.9 388.3 423.4 390.6 423.6 393.0 C423.7 395.3 424.5 397.7 425.8 400.0 C427.1 402.4 429.2 404.8 431.4 407.1 C433.5 409.5 436.4 411.8 438.7 414.2 C441.0 416.6 443.6 418.9 445.3 421.3 C447.0 423.6 448.3 426.0 448.8 428.3 C449.3 430.7 449.0 433.1 448.1 435.4 C447.3 437.8 445.4 440.1 443.7 442.5 C441.9 444.8 439.4 447.2 437.6 449.6 C435.8 451.9 433.8 454.3 432.9 456.6 C431.9 459.0 431.5 461.4 432.1 463.7 C432.7 466.1 435.7 469.6 436.4 470.8" fill="none" stroke="#3a2610" stroke-width="1.9" opacity="0.50" stroke-linecap="round"/><path d="M360.8 -49.9 C360.2 -48.7 358.3 -45.0 357.3 -42.5 C356.3 -40.0 355.3 -37.5 354.6 -35.0 C353.9 -32.5 353.3 -30.1 353.0 -27.6 C352.6 -25.1 352.5 -22.6 352.6 -20.1 C352.7 -17.6 353.0 -15.1 353.3 -12.7 C353.7 -10.2 354.3 -7.7 354.8 -5.2 C355.3 -2.7 356.0 -0.2 356.4 2.2 C356.9 4.7 357.4 7.2 357.5 9.7 C357.7 12.2 357.8 14.7 357.5 17.1 C357.2 19.6 356.7 22.1 355.9 24.6 C355.2 27.1 354.0 29.6 352.7 32.0 C351.4 34.5 349.8 37.0 348.1 39.5 C346.4 42.0 344.4 44.5 342.6 47.0 C340.7 49.4 338.7 51.9 337.0 54.4 C335.2 56.9 333.5 59.4 332.1 61.9 C330.7 64.3 329.5 66.8 328.7 69.3 C327.9 71.8 327.5 75.5 327.3 76.8" fill="none" stroke="#e0c890" stroke-width="2.3" opacity="0.76" stroke-linecap="round"/></g></g><path d="M118.7 -25.4 C159.7 -36.8 320.9 -38.5 360.5 -25.4 C400.1 -12.4 353.8 31.1 356.2 53.0 C358.7 74.9 369.0 88.0 375.3 106.0 C381.7 124.0 390.0 143.5 394.4 161.2 C398.8 178.8 403.9 193.0 401.8 212.0 C399.7 231.1 386.8 256.3 381.7 275.7 C376.6 295.0 371.1 318.2 371.1 328.0 C371.1 337.8 383.4 326.6 381.7 334.4 C379.9 342.1 368.2 363.0 360.5 374.6 C352.7 386.3 344.9 397.3 335.0 404.3 C325.1 411.4 312.8 412.1 301.1 417.1 C289.4 422.0 278.5 430.8 265.1 434.0 C251.6 437.2 230.8 440.4 220.5 436.1 C210.3 431.9 213.5 412.1 203.6 408.6 C193.7 405.0 168.9 418.8 161.2 414.9 C153.4 411.1 165.4 392.7 156.9 385.3 C148.4 377.8 118.7 377.1 110.3 370.4 C101.8 363.7 106.7 355.5 106.0 345.0 C105.3 334.5 108.1 322.5 106.0 307.5 C103.9 292.4 95.9 273.9 93.3 254.5 C90.6 235.0 89.6 210.3 90.1 190.8 C90.6 171.4 93.8 153.0 96.5 137.8 C99.1 122.6 105.0 111.0 106.0 99.7 C107.1 88.4 101.4 79.5 102.8 70.0 C104.3 60.4 111.9 58.3 114.5 42.4 C117.2 26.5 77.7 -14.1 118.7 -25.4 Z" fill="url(#skin)" filter="url(#b1)"/><g filter="url(#b8)"><ellipse cx="135" cy="215" rx="34" ry="48" fill="#f0a898" opacity="0.5"/><ellipse cx="330" cy="275" rx="50" ry="40" fill="#cc7c6c" opacity="0.5"/><ellipse cx="230" cy="36" rx="105" ry="36" fill="#f2c8aa" opacity="0.75"/><ellipse cx="222" cy="225" rx="26" ry="75" fill="#b87c62" opacity="0.6" transform="rotate(-20 222 225)"/><ellipse cx="392" cy="190" rx="26" ry="120" fill="#8c5c3c" opacity="0.65"/><ellipse cx="350" cy="120" rx="30" ry="60" fill="#b88460" opacity="0.5"/><ellipse cx="290" cy="395" rx="80" ry="30" fill="#9c6848" opacity="0.7" transform="rotate(-20 290 395)"/><ellipse cx="215" cy="385" rx="60" ry="22" fill="#b87c60" opacity="0.6" transform="rotate(10 215 385)"/><ellipse cx="120" cy="330" rx="16" ry="40" fill="#c88c74" opacity="0.6"/><ellipse cx="148" cy="235" rx="24" ry="46" fill="#f4bca8" opacity="0.7" transform="rotate(-25 148 235)"/><ellipse cx="190" cy="302" rx="34" ry="10" fill="#b4705c" opacity="0.55" transform="rotate(12 190 302)"/><ellipse cx="240" cy="150" rx="26" ry="20" fill="#f0c0a4" opacity="0.5"/></g><g filter="url(#b4)"><ellipse cx="140" cy="120" rx="42" ry="24" fill="#b47a5c" opacity="0.7" transform="rotate(14 140 120)"/><ellipse cx="300" cy="178" rx="54" ry="28" fill="#b47a5c" opacity="0.65" transform="rotate(10 300 178)"/></g><path d="M99.7 61.5 C102.8 62.2 112.0 62.6 118.7 65.7 C125.5 68.9 133.6 75.3 139.9 80.6 C146.3 85.9 154.1 94.7 156.9 97.5" fill="none" stroke="#94683e" stroke-width="9" stroke-linecap="round" opacity="0.8" filter="url(#b2)"/><path d="M231.1 129.3 C237.8 129.0 257.6 126.2 271.4 127.2 C285.2 128.3 299.7 131.5 313.8 135.7 C328.0 139.9 349.2 149.8 356.2 152.7" fill="none" stroke="#9a7044" stroke-width="10" stroke-linecap="round" opacity="0.8" filter="url(#b2)"/><g filter="url(#b1)"><path d="M115.6 114.5 C117.3 110.8 125.3 107.4 131.5 107.1 C137.7 106.7 146.3 109.0 152.7 112.4 C159.0 115.7 166.1 122.3 169.6 127.2 C173.2 132.2 176.0 139.2 173.9 142.1 C171.8 144.9 163.3 144.5 156.9 144.2 C150.6 143.8 141.7 142.4 135.7 139.9 C129.7 137.5 124.2 133.6 120.9 129.3 C117.5 125.1 113.8 118.2 115.6 114.5 Z" fill="#6a4638"/><path d="M119.8 115.6 C121.4 112.7 128.1 110.3 133.6 110.3 C139.1 110.3 147.0 112.4 152.7 115.6 C158.3 118.7 164.5 125.3 167.5 129.3 C170.5 133.4 172.8 138.0 170.7 139.9 C168.6 141.9 160.4 141.5 154.8 141.0 C149.1 140.5 141.9 139.1 136.8 136.8 C131.6 134.5 126.9 130.8 124.0 127.2 C121.2 123.7 118.2 118.4 119.8 115.6 Z" fill="#dcdce4"/><circle cx="155.9" cy="126.2" r="15.3" fill="#73879a"/><circle cx="155.9" cy="126.2" r="10.6" fill="#627486"/><circle cx="156.5" cy="124.0" r="5.5" fill="#0c0c10"/><path d="M106.0 106.0 C108.8 105.3 116.6 101.8 123.0 101.8 C129.3 101.8 137.1 102.8 144.2 106.0 C151.3 109.2 160.3 115.9 165.4 120.9 C170.5 125.8 173.3 133.2 174.9 135.7" fill="none" stroke="#2c1c18" stroke-width="3.2" stroke-linecap="round"/><path d="M106.0 129.3 C108.8 131.5 115.9 138.9 123.0 142.1 C130.1 145.3 139.9 147.7 148.4 148.4 C156.9 149.1 169.6 146.7 173.9 146.3" fill="none" stroke="#7a5044" stroke-width="1.8" opacity="0.8"/><path d="M254.5 176.0 C254.1 172.1 265.8 167.5 273.5 165.4 C281.3 163.3 292.3 161.9 301.1 163.3 C309.9 164.7 320.2 169.3 326.5 173.9 C332.9 178.5 339.3 186.6 339.3 190.8 C339.3 195.1 332.9 198.1 326.5 199.3 C320.2 200.6 309.6 200.0 301.1 198.3 C292.6 196.5 283.4 192.4 275.7 188.7 C267.9 185.0 254.8 179.9 254.5 176.0 Z" fill="#7a4c3c"/><path d="M264.0 176.0 C264.3 173.2 271.6 170.2 277.8 168.6 C284.0 167.0 293.3 165.0 301.1 166.5 C308.9 167.9 318.8 173.0 324.4 177.1 C330.1 181.1 335.4 187.7 335.0 190.8 C334.7 194.0 328.3 195.6 322.3 196.1 C316.3 196.7 306.8 195.8 299.0 194.0 C291.2 192.3 281.5 188.5 275.7 185.5 C269.8 182.5 263.6 178.8 264.0 176.0 Z" fill="#e2e2ea"/><circle cx="310.6" cy="180.2" r="17.0" fill="#73879a"/><circle cx="310.6" cy="180.2" r="11.9" fill="#627486"/><circle cx="310.0" cy="177.7" r="6.4" fill="#0a0a0e"/><path d="M260.8 169.6 C264.3 168.2 273.9 162.7 282.0 161.2 C290.1 159.6 301.5 158.3 309.6 160.1 C317.7 161.9 325.1 167.0 330.8 171.8 C336.4 176.5 341.4 185.9 343.5 188.7" fill="none" stroke="#2c1c18" stroke-width="3.4" stroke-linecap="round"/><path d="M267.2 190.8 C271.4 192.6 284.1 199.3 292.6 201.4 C301.1 203.6 310.3 204.6 318.1 203.6 C325.8 202.5 335.7 196.5 339.3 195.1" fill="none" stroke="#7a5044" stroke-width="1.8" opacity="0.8"/><circle cx="259.8" cy="176.0" r="3.2" fill="#c87868"/></g><g filter="url(#b2)"><path d="M161.2 288.4 C162.6 287.0 172.8 285.2 178.1 285.2 C183.4 285.2 191.5 286.8 193.0 288.4 C194.4 290.0 190.5 293.9 186.6 294.7 C182.7 295.6 173.9 294.7 169.6 293.7 C165.4 292.6 159.7 289.8 161.2 288.4 Z" fill="#8a4c3c" opacity="0.85"/><path d="M127.2 243.9 C127.9 249.2 127.9 267.9 131.5 275.7 C135.0 283.4 142.8 287.7 148.4 290.5 C154.1 293.3 162.6 292.3 165.4 292.6" fill="none" stroke="#f4c4b4" stroke-width="7" opacity="0.35" stroke-linecap="round"/><path d="M197.2 296.9 C200.4 294.7 212.0 289.8 216.3 284.1 C220.5 278.5 222.6 269.6 222.6 262.9 C222.6 256.2 217.3 247.0 216.3 243.9" fill="none" stroke="#c08068" stroke-width="5" opacity="0.6" stroke-linecap="round"/></g><path d="M178.1 156.9 C174.6 163.6 164.7 183.1 156.9 197.2 C149.1 211.3 136.6 230.4 131.5 241.7 C126.4 253.0 125.7 258.3 126.4 265.1 C127.1 271.8 131.3 277.6 135.7 282.0 C140.1 286.4 149.8 290.0 152.7 291.6" fill="none" stroke="#cc8878" stroke-width="3" opacity="0.55" stroke-linecap="round" filter="url(#b2)"/><g filter="url(#b1)"><path d="M119.8 311.7 C122.3 309.3 128.8 312.1 135.7 313.8 C142.6 315.6 152.0 319.9 161.2 322.3 C170.3 324.7 182.4 325.0 190.8 328.0 C199.3 331.1 203.9 335.6 212.0 340.7 C220.2 345.8 236.4 353.8 239.6 358.7 C242.8 363.7 236.4 366.3 231.1 370.4 C225.8 374.5 216.6 380.1 207.8 383.1 C199.0 386.1 187.3 388.4 178.1 388.4 C168.9 388.4 160.4 386.5 152.7 383.1 C144.9 379.8 136.4 374.3 131.5 368.3 C126.5 362.3 124.8 353.8 123.0 347.1 C121.2 340.4 121.4 333.9 120.9 328.0 C120.3 322.1 117.3 314.1 119.8 311.7 Z" fill="#b4545a"/><path d="M135.7 321.6 C139.2 320.9 152.0 326.9 161.2 330.1 C170.3 333.3 182.0 337.0 190.8 340.7 C199.7 344.4 207.8 349.2 214.2 352.4 C220.5 355.6 230.1 358.6 229.0 359.8 C227.9 361.0 215.6 360.5 207.8 359.8 C200.0 359.1 190.8 357.7 182.4 355.6 C173.9 353.4 164.0 350.6 156.9 347.1 C149.8 343.5 143.5 338.6 139.9 334.4 C136.4 330.1 132.2 322.3 135.7 321.6 Z" fill="#f2ece6"/><path d="M127.2 353.4 C130.8 355.6 139.2 362.8 148.4 366.2 C157.6 369.5 171.8 373.2 182.4 373.6 C193.0 373.9 207.1 369.2 212.0 368.3" fill="none" stroke="#d88484" stroke-width="6" opacity="0.6" stroke-linecap="round"/><path d="M207.8 353.4 C210.6 354.3 219.5 357.8 224.8 358.7 C230.1 359.7 237.1 359.3 239.6 359.4" fill="none" stroke="#5a2420" stroke-width="2.4" stroke-linecap="round"/></g><path d="M275.7 455.2 C284.8 444.6 300.4 441.4 318.1 434.0 C335.7 426.6 362.0 416.7 381.7 410.7 C401.3 404.7 426.9 357.1 436.0 398.0 C445.0 438.9 468.0 613.0 436.0 656.0 C404.0 699.0 277.6 664.8 243.9 656.0 C210.1 647.3 231.5 623.0 233.2 603.7 C235.0 584.3 249.5 557.7 254.5 540.0 C259.4 522.4 259.4 511.8 262.9 497.6 C266.5 483.5 266.5 465.8 275.7 455.2 Z" fill="url(#vbody)" filter="url(#b1)"/><path d="M282.0 453.1 C288.4 445.0 312.1 435.4 330.8 427.7 C349.5 419.9 379.6 411.1 394.4 406.5 C409.2 401.9 415.3 398.3 419.8 400.1 C424.4 401.9 431.9 410.0 422.0 417.1 C412.1 424.1 379.6 433.3 360.5 442.5 C341.4 451.7 318.8 466.5 307.5 472.2 C296.2 477.8 296.9 479.6 292.6 476.4 C288.4 473.3 275.7 461.2 282.0 453.1 Z" fill="#2a0e06" filter="url(#b2)"/><g filter="url(#b4)"><ellipse cx="318.1" cy="550.6" rx="60" ry="20" fill="#a8685a" opacity="0.6" transform="rotate(-28 318.1 550.6)"/><ellipse cx="381.7" cy="476.4" rx="60" ry="16" fill="#8e5038" opacity="0.55" transform="rotate(-30 381.7 476.4)"/><ellipse cx="402.9" cy="603.7" rx="50" ry="60" fill="#963e18" opacity="0.6"/><ellipse cx="265.1" cy="593.1" rx="40" ry="50" fill="#6a3416" opacity="0.7"/></g><path d="M260.8 658.8 L324.4 597.3 L388.0 549.6 L441.1 514.6 L441.1 658.8 Z" fill="#94421c" filter="url(#b2)"/><path d="M250.2 656.0 C261.5 645.5 296.2 611.7 318.1 593.1 C340.0 574.4 362.0 558.4 381.7 544.3 C401.3 530.1 426.9 514.2 436.0 508.2" fill="none" stroke="#c49460" stroke-width="3" opacity="0.8" filter="url(#b2)"/><path d="M267.2 656.0 C277.8 646.6 309.9 616.6 330.8 599.4 C351.6 582.2 374.8 565.1 392.3 552.8 C409.8 540.4 428.7 529.8 436.0 525.2" fill="none" stroke="#5a2810" stroke-width="3" opacity="0.7" filter="url(#b2)"/><path d="M322.3 491.3 C323.7 486.7 332.9 483.1 339.3 476.4 C345.6 469.7 351.6 458.1 360.5 451.0 C369.3 443.9 382.0 438.6 392.3 434.0 C402.5 429.4 416.7 424.1 422.0 423.4 C427.3 422.7 428.3 426.6 424.1 429.8 C419.8 433.0 405.7 436.8 396.5 442.5 C387.3 448.2 377.1 455.6 369.0 463.7 C360.8 471.8 354.1 484.6 347.8 491.3 C341.4 498.0 335.0 504.0 330.8 504.0 C326.5 504.0 320.9 495.9 322.3 491.3 Z" fill="#140c0a" filter="url(#b1)"/><path d="M331.8 498.7 C332.6 496.6 339.1 490.0 343.5 484.9 C347.9 479.8 355.2 471.0 358.4 467.9 C361.5 464.9 363.7 464.1 362.6 466.9 C361.5 469.7 355.9 479.8 352.0 484.9 C348.1 490.0 342.6 495.3 339.3 497.6 C335.9 499.9 331.1 500.8 331.8 498.7 Z" fill="#2a1cf0"/><path d="M370.0 423.4 C371.4 421.8 376.4 418.1 379.6 416.0 C382.7 413.9 387.4 411.2 389.1 410.7 C390.8 410.2 391.2 411.8 389.7 413.2 C388.3 414.7 383.7 417.5 380.6 419.6 C377.5 421.7 372.8 425.3 371.1 426.0 C369.3 426.6 368.6 425.1 370.0 423.4 Z" fill="#2a1cf0"/><path d="M226.9 442.5 C231.5 438.8 261.5 433.7 269.3 437.2 C277.1 440.7 269.3 455.8 273.5 463.7 C277.8 471.7 291.9 477.8 294.7 484.9 C297.6 492.0 297.2 501.9 290.5 506.1 C283.8 510.4 261.2 513.9 254.5 510.4 C247.7 506.8 252.3 493.4 250.2 484.9 C248.1 476.4 245.6 466.5 241.7 459.5 C237.8 452.4 222.3 446.2 226.9 442.5 Z" fill="#34150c" filter="url(#b1)"/><path d="M273.5 459.5 C276.0 456.3 290.5 451.7 296.9 451.0 C303.2 450.3 310.3 452.8 311.7 455.2 C313.1 457.7 310.3 463.4 305.3 465.8 C300.4 468.3 287.3 471.1 282.0 470.1 C276.7 469.0 271.1 462.6 273.5 459.5 Z" fill="#6a5228" filter="url(#b1)"/><path d="M216.3 425.5 L241.7 435.1 L240.7 438.3 L215.2 428.7 Z" fill="#1c7a5c"/><path d="M148.4 603.7 C155.5 588.1 172.5 574.7 186.6 565.5 C200.7 556.3 216.6 549.9 233.2 548.5 C249.9 547.1 275.0 551.4 286.3 557.0 C297.6 562.7 304.6 572.9 301.1 582.5 C297.6 592.0 278.1 601.5 265.1 614.3 C252.0 627.0 242.8 651.4 222.6 658.8 C202.5 666.2 156.6 668.0 144.2 658.8 C131.8 649.6 141.4 619.2 148.4 603.7 Z" fill="#8a6234" filter="url(#b4)"/><path d="M182.4 548.5 C186.6 540.8 202.9 524.5 212.0 518.8 C221.2 513.2 234.7 511.8 237.5 514.6 C240.3 517.4 234.7 528.7 229.0 535.8 C223.4 542.9 210.6 552.1 203.6 557.0 C196.5 562.0 190.1 566.9 186.6 565.5 C183.1 564.1 178.1 556.3 182.4 548.5 Z" fill="#4a2418" filter="url(#b2)"/><path d="M250.2 535.8 C252.3 530.9 266.5 521.0 275.7 518.8 C284.8 516.7 302.5 519.5 305.3 523.1 C308.2 526.6 299.7 535.8 292.6 540.0 C285.6 544.3 270.0 549.2 262.9 548.5 C255.9 547.8 248.1 540.8 250.2 535.8 Z" fill="#3a180c" filter="url(#b4)" opacity="0.8"/><path d="M61.5 521.0 C60.8 512.8 70.7 500.5 76.3 489.2 C82.0 477.8 83.4 464.8 95.4 453.1 C107.4 441.4 130.4 426.8 148.4 419.2 C166.5 411.6 193.0 407.2 203.6 407.5 C214.2 407.9 208.9 415.8 212.0 421.3 C215.2 426.8 218.1 434.7 222.6 440.4 C227.2 446.0 236.1 449.6 239.6 455.2 C243.1 460.9 241.4 469.7 243.9 474.3 C246.3 478.9 253.7 477.8 254.5 482.8 C255.2 487.7 246.7 498.7 248.1 504.0 C249.5 509.3 265.4 510.0 262.9 514.6 C260.5 519.2 243.9 527.3 233.2 531.6 C222.6 535.8 215.6 540.0 199.3 540.0 C183.1 540.0 155.5 531.9 135.7 531.6 C115.9 531.2 92.9 539.7 80.6 537.9 C68.2 536.2 62.2 529.1 61.5 521.0 Z" fill="url(#bridge)" filter="url(#b1)"/><ellipse cx="127.2" cy="484.9" rx="11.7" ry="8.9" fill="#20120c" filter="url(#b1)"/><ellipse cx="153.7" cy="467.9" rx="9.3" ry="11.5" fill="#c4bcb4" filter="url(#b1)"/><ellipse cx="200.4" cy="476.4" rx="11.9" ry="16.1" fill="#6e5c34" transform="rotate(20 200.4 476.4)" filter="url(#b1)"/><path d="M206.7 459.5 C207.8 458.1 211.2 463.7 212.0 467.9 C212.9 472.2 213.5 481.0 212.0 484.9 C210.6 488.8 206.4 490.6 203.6 491.3 C200.7 492.0 194.7 491.6 195.1 489.2 C195.4 486.7 203.7 481.4 205.7 476.4 C207.6 471.5 205.7 460.9 206.7 459.5 Z" fill="#dcd8d4" filter="url(#b1)"/><path d="M214.2 463.7 C212.0 465.5 220.5 472.9 220.5 476.4 C220.5 480.0 212.0 484.9 214.2 484.9 C216.3 484.9 229.0 478.6 233.2 476.4 C237.5 474.3 239.6 474.0 239.6 472.2 C239.6 470.4 237.5 467.2 233.2 465.8 C229.0 464.4 216.3 461.9 214.2 463.7 Z" fill="#3c1c10" filter="url(#b1)"/><path d="M80.6 540.0 C91.9 530.1 105.7 519.7 118.7 512.5 C131.8 505.2 147.7 499.4 159.0 496.6 C170.3 493.7 180.2 492.5 186.6 495.5 C193.0 498.5 198.3 505.8 197.2 514.6 C196.1 523.4 188.4 533.7 180.2 548.5 C172.1 563.4 155.1 585.7 148.4 603.7 C141.7 621.6 161.9 647.3 139.9 656.0 C118.0 664.8 31.8 670.1 17.0 656.0 C2.1 642.0 40.3 591.2 50.9 571.9 C61.5 552.5 69.3 549.9 80.6 540.0 Z" fill="#221614" filter="url(#b1)"/><path d="M101.8 531.6 C107.4 528.7 123.7 519.2 135.7 514.6 C147.7 510.0 167.5 505.8 173.9 504.0" fill="none" stroke="#4a3830" stroke-width="5" opacity="0.7" filter="url(#b2)"/><path d="M0.0 588.8 C8.5 574.8 45.2 567.6 50.9 571.9 C56.5 576.1 39.9 600.2 33.9 614.3 C27.9 628.3 20.5 649.1 14.8 656.0 C9.2 663.0 2.5 667.2 0.0 656.0 C-2.5 644.8 -8.5 602.8 0.0 588.8 Z" fill="#b07854" filter="url(#b2)"/><path d="M173.9 410.7 L25.4 656.0" stroke="#8a7458" stroke-width="2.5999999999999996" opacity="0.55" filter="url(#b1)"/><path d="M93.3 455.2 L4.2 656.0" stroke="#7a6850" stroke-width="2.4" opacity="0.55" filter="url(#b1)"/><path d="M148.4 482.8 L70.0 656.0" stroke="#6a5844" stroke-width="2.4" opacity="0.55" filter="url(#b1)"/><path d="M135.7 489.2 L27.6 656.0" stroke="#54443a" stroke-width="2.2" opacity="0.55" filter="url(#b1)"/><path d="M0.0 448.9 L25.4 421.3 L55.1 387.4 L70.0 373.6 L84.8 368.3 L101.8 371.5 L118.7 378.9 L135.7 384.8 L158.0 382.7 L148.4 406.5 L135.7 427.7 L125.1 443.6 L117.7 448.9 L110.3 442.5 L101.8 429.8 L93.3 419.2 L82.7 412.8 L70.0 416.0 L55.1 429.8 L33.9 455.2 L0.0 495.5 Z" fill="url(#frog)" filter="url(#b1)" stroke="url(#frog)" stroke-width="2" stroke-linejoin="round"/><path d="M12.7 446.7 C19.8 438.6 43.1 408.9 55.1 398.0 C67.1 387.0 74.2 382.4 84.8 381.0 C95.4 379.6 113.1 388.1 118.7 389.5" fill="none" stroke="#b46a38" stroke-width="6" opacity="0.5" filter="url(#b2)" stroke-linecap="round"/><path d="M166.5 373.6 L-4.2 593.1" stroke="#d6cfbc" stroke-width="3.4" filter="url(#b1)"/><path d="M160.1 370.4 L169.6 371.5 L170.7 378.9 L163.3 380.0 Z" fill="#dcd8c8"/></g></svg></div>
<div class="a" style="left:0;top:1669px;width:1845px;height:31px;background:#484848;box-shadow:inset 0 1px 0 #505050"></div>
<div class="a" style="left:1756px;top:1680px;width:4px;height:20px;background:#3c3c3c"></div>
<div class="a" style="left:1850px;top:103px;width:700px;height:1597px;background:#292929;box-shadow:inset 1px 0 0 #2f2f2f"></div>
<div class="a" style="left:2552px;top:103px;width:26px;height:546px;background:repeating-linear-gradient(90deg,#2c2c2c 0,#2c2c2c 1px,#000 1px,#000 2px);border-top:1px solid #2c2c2c;border-bottom:1px solid #2c2c2c"></div>
<div class="a" style="left:2552px;top:1647px;width:26px;height:53px;background:repeating-linear-gradient(90deg,#2c2c2c 0,#2c2c2c 1px,#000 1px,#000 2px);border-top:1px solid #2c2c2c"></div>
<div class="a" style="left:2552px;top:650px;width:26px;height:267px;border-radius:3px 3px 4px 4px;background:linear-gradient(90deg,#6a6a6a 0%,#8c8c8c 22%,#929292 50%,#8c8c8c 75%,#606060 100%)"></div>
<div class="tri" style="left:2598px;top:923px;border-top:6.7px solid transparent;border-bottom:6.7px solid transparent;border-left:7px solid #4d4d4d"></div>
<svg class="a" style="left:2528px;top:30px" width="50" height="38" viewBox="0 0 50 38"><path d="M9.5 32.5 C4.8 32.5 3 29.6 3 27 C3 23.4 5.8 21.4 8.6 21.3 C8.8 17 12 14.6 15.4 14.8 C16.6 8.6 21.6 4.8 27 4.8 C33.6 4.8 38.6 9.6 38.8 16.6 C41 17.4 42 20 42 22.6 L40 32.5 Z" fill="#bdbdbd"/><circle cx="35.5" cy="23.8" r="10.8" fill="#000"/><circle cx="35.5" cy="23.8" r="9.3" fill="#1f9e6a"/><path d="M30.6 24 L34 27.4 L40.6 20.6" fill="none" stroke="#1b1b1b" stroke-width="2.6"/></svg>
<svg class="a" style="left:2502px;top:128px" width="28" height="28" viewBox="0 0 28 28"><path d="M4 4 L24 4 L14 24 Z" fill="#bababa" stroke="#161616" stroke-width="1.6" stroke-linejoin="round"/></svg>
<div class="box" style="top:176px;height:383px"></div>
<div class="a" style="left:1855px;top:559px;width:690px;height:1px;background:#3a3a3a"></div>
<div class="a" style="left:1882px;top:197px;width:636px;height:233px;border:1px solid #000;background:#393939;box-shadow:0 1px 0 #565656,1px 0 0 #565656"><div class="a" style="left:0;top:0;width:634px;height:231px;background:repeating-linear-gradient(90deg,transparent 0,transparent 30.7px,#3d3d3d 30.7px,#3d3d3d 31.7px),repeating-linear-gradient(0deg,transparent 0,transparent 22px,#3b3b3b 22px,#3b3b3b 23px)"></div><svg width="634" height="230" viewBox="0 0 634 230" style="position:absolute;left:0;top:1px"><defs><linearGradient id="hg" gradientUnits="userSpaceOnUse" x1="0" y1="60" x2="560" y2="260"><stop offset="0" stop-color="#8c8c8c"/><stop offset="0.5" stop-color="#b4b4b4"/><stop offset="1" stop-color="#dedede"/></linearGradient><linearGradient id="hr" x1="0" x2="1" y1="0" y2="0"><stop offset="0.3" stop-color="#c8403a"/><stop offset="0.7" stop-color="#e26868"/></linearGradient><linearGradient id="hgr" x1="0" x2="1" y1="0" y2="0"><stop offset="0.2" stop-color="#6fae46"/><stop offset="0.6" stop-color="#7cc862"/></linearGradient></defs><path d="M0,230V40h6V57h1V61h1V64h2V48h1V50h1V45h6V43h2V40h1V45h1V43h2V55h1V48h1V58h1V60h1V86h2V40h1V41h1V43h1V41h1V43h2V41h2V53h1V46h1V61h2V47h2V75h2V107h2V125h1V129h1V120h1V118h1V128h2V91h2V111h2V112h2V108h2V123h2V140h1V138h1V144h1V143h1V140h1V142h1V137h2V142h2V145h2V144h2V145h2V147h2V149h1V152h1V151h1V153h1V147h2V148h2V143h2V151h1V153h1V152h1V153h1V149h1V147h1V152h2V141h2V154h1V152h1V153h4V152h1V153h1V149h1V146h1V149h2V144h2V146h1V143h1V145h1V146h1V144h1V146h1V148h2V150h1V151h1V154h4V156h2V159h1V158h1V155h1V156h1V149h2V151h4V153h3V156h3V154h2V151h2V149h2V152h2V149h1V150h1V149h2V147h1V144h1V148h1V144h1V151h1V153h1V136h2V142h2V147h1V148h1V154h2V153h2V157h2V160h2V152h2V158h2V160h1V162h1V163h2V164h1V162h5V160h1V162h1V161h1V159h2V161h1V160h1V159h1V150h1V149h1V160h4V163h2V157h2V165h2V166h4V164h1V163h1V165h4V163h2V161h2V164h1V162h1V166h1V167h3V168h2V173h2V172h2V171h3V174h1V170h1V171h1V169h3V168h1V170h1V171h1V169h2V170h1V168h1V171h4V159h2V168h1V166h1V167h2V158h2V160h1V157h1V161h1V160h1V163h2V167h3V166h1V167h2V169h2V171h2V172h2V173h4V175h2V173h2V172h4V175h2V171h2V176h2V175h2V174h2V175h1V173h2V172h1V173h4V174h2V169h2V174h2V173h1V174h1V172h2V174h2V176h3V177h1V175h1V176h1V173h2V172h1V173h1V174h1V172h1V179h1V180h1V182h1V183h1V180h2V178h1V179h1V181h2V186h1V187h1V190h2V186h2V183h2V180h2V179h1V177h1V176h1V177h1V173h2V181h2V182h2V184h2V183h1V185h1V182h2V183h2V182h2V180h1V182h1V185h4V188h2V190h2V193h1V192h1V191h2V188h1V189h1V187h2V184h2V179h2V182h2V181h1V180h2V182h1V180h1V182h3V184h2V186h2V188h1V189h1V185h2V194h3V193h1V195h2V194h4V195h2V194h1V193h1V197h1V198h1V201h2V206h2V210h2V212h4V213h2V212h2V215h2V217h2V219h2V221h2V223h2V224h2V225h2V226h4V227h6V226h8V225h1V226h1V225h6V226h2V227h2V228h4V229h10V230h127V230z" fill="#4759b2" /><path d="M0,230V112h1V110h1V84h1V82h1V88h2V130h1V127h1V123h2V131h2V71h2V60h2V89h2V103h2V126h1V122h1V146h2V152h2V155h2V160h2V157h1V155h1V157h1V156h1V158h2V164h1V165h1V166h1V165h1V163h2V160h2V156h2V152h1V154h1V140h2V148h2V146h2V147h2V143h2V145h2V159h1V161h1V172h2V174h2V172h1V171h1V167h2V168h1V166h1V167h1V168h1V169h2V170h1V172h1V169h4V165h2V161h2V160h2V156h1V153h1V152h2V153h1V151h1V150h2V147h2V153h2V156h2V155h2V154h2V151h2V149h2V148h4V144h1V146h1V141h2V143h2V137h2V134h2V132h2V129h1V133h1V127h2V129h1V130h1V131h2V132h1V131h1V129h1V127h1V131h2V134h2V128h1V125h1V120h2V133h2V142h2V138h1V141h1V140h1V137h1V140h2V146h1V147h1V150h4V155h2V160h2V159h2V160h2V157h2V156h2V155h2V157h1V156h1V161h2V163h1V161h1V158h1V156h1V165h2V164h1V162h1V165h1V163h1V168h2V170h4V171h2V169h2V171h4V169h1V171h4V173h3V167h1V168h1V173h2V171h2V172h2V171h1V170h1V171h1V173h1V171h3V172h3V173h2V172h2V159h2V164h1V162h1V164h1V165h1V162h2V164h2V163h1V162h1V164h2V162h3V161h1V162h1V159h1V164h3V165h1V164h2V161h2V162h1V160h3V158h2V156h2V157h2V160h2V161h2V163h1V164h1V161h2V160h2V155h2V152h1V151h1V152h2V151h2V148h2V155h1V153h1V157h2V151h1V153h1V148h1V151h3V156h2V160h2V150h2V142h2V140h2V142h1V139h1V144h1V146h1V145h4V144h1V141h1V138h2V136h4V140h2V144h1V141h1V146h2V152h2V151h1V154h1V149h2V154h1V152h1V151h2V146h1V145h1V150h2V155h2V150h1V151h1V149h1V148h1V147h2V152h3V154h1V146h2V159h2V153h1V152h1V155h2V158h4V157h2V160h1V161h1V162h1V161h1V166h1V167h1V168h2V164h2V160h2V159h2V157h2V155h2V156h2V158h2V164h1V165h1V168h2V171h2V169h2V177h2V178h2V179h2V178h2V175h2V174h2V175h2V173h1V172h1V168h2V173h2V171h1V173h1V169h2V181h2V182h6V179h2V171h1V173h1V180h1V178h1V183h1V184h1V183h3V181h1V178h1V180h1V175h1V176h1V172h4V173h2V174h2V179h2V185h2V191h2V189h2V186h1V187h1V188h2V190h4V191h2V197h1V196h1V198h1V197h1V205h2V211h2V215h2V218h2V220h1V219h1V221h2V224h1V223h1V226h2V227h18V228h10V229h10V230h99V230z" fill="url(#hgr)" /><path d="M0,230V211h2V172h2V148h2V103h1V107h1V123h2V135h2V121h2V93h2V89h1V84h1V105h2V124h2V146h2V157h2V166h2V174h1V172h1V165h1V166h1V161h1V160h1V158h3V160h1V174h2V184h1V186h1V182h2V189h2V190h2V191h2V195h2V192h1V191h1V189h2V186h2V182h4V186h2V174h3V176h1V174h1V175h3V181h1V182h1V184h2V186h2V187h2V183h2V188h2V184h1V186h1V181h1V182h1V181h2V182h4V181h1V182h1V180h1V179h3V176h4V175h2V176h2V175h2V174h4V180h2V172h1V170h1V176h2V177h2V178h2V179h1V180h1V181h2V180h4V179h1V178h2V180h1V174h2V172h1V175h1V172h2V171h1V173h1V169h6V170h1V171h3V173h2V174h2V176h1V177h1V176h2V174h2V169h1V167h1V169h1V170h2V169h1V168h1V167h1V166h2V165h1V167h1V154h2V166h2V164h1V162h1V165h3V167h1V165h2V166h1V167h1V159h1V157h3V159h2V155h2V158h1V156h1V157h2V154h2V155h2V158h2V154h2V155h1V153h1V161h2V153h2V150h2V162h2V158h2V153h1V151h1V150h1V148h1V155h2V159h1V158h1V152h4V154h1V156h1V154h2V153h1V154h1V161h1V164h1V162h3V163h1V161h2V160h1V157h1V160h2V159h2V157h1V158h1V155h2V162h2V161h2V162h1V164h1V161h4V165h2V171h2V168h2V176h2V178h2V180h2V178h2V174h1V176h1V170h1V169h1V174h2V173h1V172h1V174h4V175h2V173h2V171h1V169h1V170h2V168h2V166h2V167h2V161h1V162h1V167h1V169h1V166h2V167h4V165h3V164h1V165h1V162h1V164h2V163h2V166h1V165h1V164h2V162h2V163h1V164h1V163h2V159h1V161h1V162h2V163h4V159h2V161h4V158h2V159h1V160h1V152h2V158h1V159h1V158h2V149h1V148h1V155h2V151h1V152h1V156h1V154h1V149h1V146h1V156h1V158h1V155h1V153h1V155h1V153h1V144h2V139h2V148h1V147h1V146h4V143h1V145h1V140h1V138h1V135h1V133h1V144h2V147h2V148h4V151h2V153h1V155h1V146h1V145h3V137h2V146h2V140h2V150h1V148h1V152h1V153h1V157h2V154h2V156h2V158h2V152h4V159h2V158h2V164h1V162h1V169h2V172h1V170h1V166h2V159h2V158h4V148h2V157h1V155h1V156h2V150h1V148h1V149h2V155h2V160h2V162h2V165h2V167h2V169h2V168h2V173h1V175h1V169h2V174h2V172h2V164h1V163h1V167h2V168h2V164h2V154h1V151h1V162h1V160h1V165h2V175h1V173h1V176h2V177h2V173h2V172h1V170h5V173h1V175h1V171h2V167h1V168h1V163h2V164h2V170h2V176h2V177h2V179h2V180h2V173h1V175h1V184h2V188h1V189h1V195h1V194h3V190h2V195h2V201h2V208h2V211h2V213h2V219h1V218h1V222h2V223h2V224h2V226h2V227h2V228h2V229h4V230h65V230z" fill="url(#hr)" /><path d="M0,230V112h1V110h1V84h1V82h1V88h2V130h1V127h1V123h2V131h2V71h2V60h2V89h2V103h2V126h1V122h1V146h2V152h2V155h2V160h2V157h1V155h1V157h1V156h1V158h2V164h1V165h1V166h1V165h1V163h2V160h2V156h2V152h1V154h1V140h2V148h2V146h2V147h2V143h2V145h2V159h1V161h1V172h2V174h2V172h1V171h1V167h2V168h1V166h1V167h1V168h1V169h2V170h1V172h1V169h4V165h2V161h2V160h2V156h1V153h1V152h2V153h2V152h1V153h1V149h1V147h1V153h2V156h2V155h2V154h2V153h2V152h1V153h1V149h1V148h1V149h2V144h1V146h2V143h1V145h1V146h1V144h1V146h1V148h2V150h1V151h1V154h4V156h2V159h1V158h1V155h1V156h1V149h2V151h4V153h3V156h3V154h2V151h2V149h2V152h2V149h1V150h5V155h2V160h2V159h2V160h2V157h2V156h2V155h2V157h2V161h2V163h1V161h1V158h2V165h2V164h1V163h1V165h1V163h1V168h2V170h4V171h2V169h2V171h4V169h1V171h4V173h3V167h1V168h1V173h2V171h2V172h2V171h1V170h1V171h1V173h1V171h3V172h3V173h2V172h2V168h2V173h2V172h2V171h3V174h1V170h1V171h1V169h3V168h1V170h1V171h1V169h2V170h1V168h1V171h4V161h2V168h1V166h1V167h2V158h2V160h1V157h1V161h1V160h1V163h2V167h3V166h1V167h2V169h2V171h2V172h2V173h4V175h2V173h2V172h4V175h2V171h2V176h2V175h2V174h2V175h1V173h2V172h1V173h4V174h2V169h2V174h2V173h1V174h1V172h2V174h2V176h3V177h1V175h1V176h1V173h2V172h1V173h1V174h1V172h1V179h1V180h1V182h1V183h1V180h2V178h1V179h1V181h2V186h1V187h1V190h2V186h2V183h2V180h2V179h1V177h1V176h1V177h1V173h2V181h2V182h2V184h2V183h1V185h1V182h2V183h2V182h2V180h1V182h1V185h4V188h2V190h2V193h1V192h1V191h2V188h1V189h1V187h2V184h2V179h2V182h2V181h1V180h2V182h1V180h1V182h3V184h2V186h2V188h1V189h1V185h2V194h3V193h1V195h2V194h4V195h2V194h1V193h1V197h1V198h1V201h2V206h2V210h2V212h4V213h2V212h2V215h2V217h2V219h2V221h2V223h2V224h2V225h2V226h4V227h6V226h8V225h1V226h1V225h6V226h2V227h2V228h4V229h10V230h127V230z" fill="#7accc9" /><path d="M0,230V211h2V172h2V148h2V103h1V107h1V123h2V135h2V121h2V93h2V89h1V84h1V105h2V124h2V146h2V157h2V166h2V174h1V172h1V165h1V166h1V161h1V160h1V158h3V160h1V174h2V184h1V186h1V182h2V189h2V190h2V191h2V195h2V192h1V191h1V189h2V186h2V182h4V186h2V174h3V176h1V174h1V175h3V181h1V182h1V184h2V186h2V187h2V183h2V188h2V184h1V186h1V181h1V182h1V181h2V182h4V181h1V182h1V180h1V179h3V176h4V175h2V176h2V175h2V174h4V180h2V172h1V170h1V176h2V177h2V178h2V179h1V180h1V181h2V180h4V179h1V178h2V180h1V174h2V172h1V175h1V172h2V171h1V173h1V169h6V170h1V171h3V173h2V174h2V176h1V177h1V176h2V174h2V169h1V167h1V169h1V170h2V169h1V168h1V167h1V166h2V165h1V167h1V157h2V166h2V164h1V162h1V165h3V167h1V165h2V166h1V167h1V162h4V160h1V162h1V161h1V159h2V161h1V160h1V159h1V154h2V160h4V163h2V157h2V165h2V166h4V164h1V163h1V165h4V163h2V161h2V164h1V162h1V166h1V167h3V168h2V173h2V172h2V171h3V174h1V170h1V171h1V169h3V168h1V170h1V171h1V169h2V170h1V168h1V171h4V161h2V168h1V166h1V167h2V161h2V165h2V171h2V168h2V176h2V178h2V180h2V178h2V174h1V176h1V172h2V174h2V173h2V175h2V174h2V175h2V173h2V175h2V171h2V176h2V175h2V174h2V175h1V173h2V172h1V173h4V174h2V169h2V174h2V173h1V174h1V172h2V174h2V176h3V177h1V175h1V176h1V173h2V172h1V173h1V174h1V172h1V179h1V180h1V182h1V183h1V180h2V178h1V179h1V181h2V186h1V187h1V190h2V186h2V183h2V180h2V179h1V177h1V176h1V177h1V173h2V181h2V182h2V184h2V183h1V185h1V182h2V183h2V182h2V180h1V182h1V185h4V188h2V190h2V193h1V192h1V191h2V188h1V189h1V187h2V184h2V179h2V182h2V181h1V180h2V182h1V180h1V182h3V184h2V186h2V188h1V189h1V185h2V194h3V193h1V195h2V194h4V195h2V194h1V193h1V197h1V198h1V201h2V206h2V210h2V212h4V213h2V212h2V215h2V217h2V219h2V221h2V223h2V224h2V225h2V226h4V227h6V226h8V225h1V226h1V225h6V226h2V227h2V228h4V229h10V230h127V230z" fill="#e030d6" /><path d="M0,230V211h2V172h2V148h2V130h1V127h1V123h2V135h2V121h2V93h2V89h2V105h2V126h1V124h1V146h2V157h2V166h2V174h1V172h1V165h1V166h1V161h1V160h1V158h2V164h1V165h1V174h2V184h1V186h1V182h2V189h2V190h2V191h2V195h2V192h1V191h1V189h2V186h2V182h4V186h2V174h3V176h1V174h1V175h3V181h1V182h1V184h2V186h2V187h2V183h2V188h2V184h1V186h1V181h1V182h1V181h2V182h4V181h1V182h1V180h1V179h3V176h4V175h2V176h2V175h2V174h4V180h2V172h1V170h1V176h2V177h2V178h2V179h1V180h1V181h2V180h4V179h1V178h2V180h1V174h2V172h1V175h1V172h2V171h1V173h1V169h6V170h1V171h3V173h2V174h2V176h1V177h1V176h2V174h2V169h1V167h1V169h1V170h2V169h1V168h1V167h1V166h2V165h1V167h1V157h1V156h1V166h2V164h1V162h1V165h3V167h1V165h2V166h1V167h1V168h2V170h4V171h2V169h2V171h4V169h1V171h4V173h3V167h1V168h1V173h2V171h2V172h2V171h1V170h1V171h1V173h1V171h3V172h3V173h2V172h2V159h2V164h1V162h1V164h1V165h1V162h1V164h3V163h2V164h2V162h3V161h1V162h1V159h1V164h3V165h1V164h2V161h2V162h1V164h1V161h4V165h2V171h2V168h2V176h2V178h2V180h2V178h2V174h1V176h1V170h1V169h1V174h2V173h1V172h1V174h4V175h2V173h2V171h1V169h1V170h2V168h2V166h2V167h2V161h1V162h1V167h1V169h1V166h2V167h4V165h3V164h1V165h1V162h1V164h2V163h2V166h1V165h1V164h2V162h2V163h1V164h1V163h2V159h1V161h1V162h2V163h4V159h2V161h4V158h2V159h1V160h1V152h2V158h1V159h1V158h2V159h2V155h4V158h4V157h1V158h1V160h1V161h1V162h1V161h1V166h1V167h1V168h2V164h2V160h2V159h2V157h2V155h2V156h2V158h2V164h1V165h1V168h2V171h2V169h2V177h2V178h2V179h2V178h2V175h2V174h2V175h2V173h1V172h1V168h2V173h2V171h1V173h1V169h2V181h2V182h6V179h2V171h1V173h1V180h1V178h1V183h1V184h1V183h3V181h1V178h1V180h1V175h1V176h1V172h4V173h2V174h2V179h2V185h2V191h2V189h2V186h1V187h1V188h2V190h4V191h2V197h1V196h1V198h1V197h1V205h2V211h2V215h2V218h2V220h1V219h1V221h2V224h1V223h1V226h2V227h18V228h10V229h10V230h99V230z" fill="#fbfb6e" /><path d="M0,230V211h2V172h2V148h2V130h1V127h1V123h2V135h2V121h2V93h2V89h2V105h2V126h1V124h1V146h2V157h2V166h2V174h1V172h1V165h1V166h1V161h1V160h1V158h2V164h1V165h1V174h2V184h1V186h1V182h2V189h2V190h2V191h2V195h2V192h1V191h1V189h2V186h2V182h4V186h2V174h3V176h1V174h1V175h3V181h1V182h1V184h2V186h2V187h2V183h2V188h2V184h1V186h1V181h1V182h1V181h2V182h4V181h1V182h1V180h1V179h3V176h4V175h2V176h2V175h2V174h4V180h2V172h1V170h1V176h2V177h2V178h2V179h1V180h1V181h2V180h4V179h1V178h2V180h1V174h2V172h1V175h1V172h2V171h1V173h1V169h6V170h1V171h3V173h2V174h2V176h1V177h1V176h2V174h2V169h1V167h1V169h1V170h2V169h1V168h1V167h1V166h2V165h1V167h1V157h2V166h2V164h1V162h1V165h3V167h1V165h2V166h1V167h1V168h2V170h4V171h2V169h2V171h4V169h1V171h4V173h3V167h1V168h1V173h2V171h2V172h2V171h1V170h1V171h1V173h1V171h3V172h3V173h2V172h2V168h2V173h2V172h2V171h3V174h1V170h1V171h1V169h3V168h1V170h1V171h1V169h2V170h1V168h1V171h4V161h2V168h1V166h1V167h2V161h2V165h2V171h2V168h2V176h2V178h2V180h2V178h2V174h1V176h1V172h2V174h2V173h2V175h2V174h2V175h2V173h2V175h2V171h2V176h2V175h2V174h2V175h1V173h2V172h1V173h4V174h2V169h2V174h2V173h1V174h1V172h2V174h2V176h3V177h1V175h1V176h1V173h2V172h1V173h1V174h1V172h1V179h1V180h1V182h1V183h1V180h2V178h1V179h1V181h2V186h1V187h1V190h2V186h2V183h2V180h2V179h1V177h1V176h1V177h1V173h2V181h2V182h2V184h2V183h1V185h1V182h2V183h2V182h2V180h1V182h1V185h4V188h2V190h2V193h1V192h1V191h2V188h1V189h1V187h2V184h2V179h2V182h2V181h1V180h2V182h1V180h1V182h3V184h2V186h2V188h1V189h1V185h2V194h3V193h1V195h2V194h4V195h2V194h1V193h1V197h1V198h1V201h2V206h2V210h2V212h4V213h2V212h2V215h2V217h2V219h2V221h2V223h2V224h2V225h2V226h4V227h6V226h8V225h1V226h1V225h6V226h2V227h2V228h4V229h10V230h127V230z" fill="url(#hg)" /><rect x="560" y="227" width="6" height="3" fill="#e030d6"/><rect x="568" y="227" width="4" height="3" fill="#fbfb6e"/><rect x="573" y="227" width="2" height="3" fill="#ffffff"/><rect x="578" y="227" width="2" height="3" fill="#ffffff"/><rect x="580" y="227" width="6" height="3" fill="#fbfb6e"/><rect x="589" y="227" width="6" height="3" fill="#fbfb6e"/><rect x="596" y="227" width="3" height="3" fill="#e030d6"/><rect x="599" y="227" width="3" height="3" fill="#e030d6"/><rect x="602" y="227" width="6" height="3" fill="#ffffff"/><rect x="608" y="227" width="4" height="3" fill="#fbfb6e"/><rect x="613" y="227" width="6" height="3" fill="#e030d6"/></svg><div class="a" style="left:630px;top:40px;width:4px;height:191px;background:linear-gradient(90deg,#bbb,#fff 40%)"></div><svg class="a" style="left:0;top:0" width="45" height="40" viewBox="0 0 45 40"><rect x="0.5" y="0.5" width="44" height="39" fill="#000" stroke="#fff" stroke-width="1.4"/><path d="M22.5 3.2 L42.5 37.2 L2.5 37.2 Z" fill="#fff"/></svg><svg class="a" style="left:589px;top:0" width="45" height="40" viewBox="0 0 45 40"><rect x="0.5" y="0.5" width="44" height="39" fill="#000" stroke="#2c2c2c" stroke-width="1"/><path d="M22.5 3.8 L42.5 37.2 L2.5 37.2 Z" fill="#b4b4b4"/></svg></div>
<div class="a" style="left:1868px;top:487px;width:664px;height:2px;background:#3c3c3c"></div>
<div class="a" style="left:1884px;top:514px;width:26px;height:18px;border:2px solid #8e8e8e;border-radius:1px"></div>
<div class="box" style="top:571px;height:78px"></div>
<div class="a" style="left:1855px;top:649px;width:690px;height:1px;background:#3a3a3a"></div>
<svg class="a" style="left:2509px;top:675px" width="28" height="28" viewBox="0 0 28 28"><path d="M4 4 L24 4 L14 24 Z" fill="#bababa" stroke="#161616" stroke-width="1.6" stroke-linejoin="round"/></svg>
<div class="box" style="left:1854px;width:691px;top:721px;height:926px;border-bottom:1px solid #000"></div>
<div class="sep" style="top:801px;height:2px;background:linear-gradient(#000 50%,#555 50%)"></div>
<div class="sep" style="top:888px;height:2px;background:linear-gradient(#000 50%,#555 50%)"></div>
<div class="sep" style="top:1086px;height:2px;background:linear-gradient(#0a0a0a 50%,#525252 50%)"></div>
<div class="sep" style="top:1273px;height:3px;background:linear-gradient(#414141 33%,#3e3e3e 33%,#3e3e3e 66%,#4e4e4e 66%)"></div>
<div class="sep" style="top:1502px;height:2px;background:linear-gradient(#0a0a0a 50%,#525252 50%)"></div>
<div class="a" style="left:2317px;top:749px;width:2px;height:29px;background:#2c2c2c"></div>
<div class="a" style="left:2405px;top:1113px;width:113px;height:38px;border-radius:16px;background:#3e3e3e"></div>
<div class="a" style="left:2076px;top:962px;width:342px;height:1px;background:#565656"></div>
<svg class="a" style="left:2000px;top:575px" width="410" height="65" viewBox="2000 575 410 65"><rect x="2019.2" y="591.65" width="34" height="4.7" rx="0.6" fill="#303030" stroke="#303030" stroke-width="2.4"/><circle cx="2026.7" cy="594" r="5.7" fill="#303030" stroke="#303030" stroke-width="2.4"/><rect x="2019.2" y="603.75" width="34" height="4.7" rx="0.6" fill="#303030" stroke="#303030" stroke-width="2.4"/><circle cx="2044.9" cy="606.1" r="5.7" fill="#303030" stroke="#303030" stroke-width="2.4"/><rect x="2019.2" y="615.75" width="34" height="4.7" rx="0.6" fill="#303030" stroke="#303030" stroke-width="2.4"/><circle cx="2034.8" cy="618.1" r="5.7" fill="#303030" stroke="#303030" stroke-width="2.4"/><rect x="2019.2" y="591.65" width="34" height="4.7" rx="0.6" fill="#ffffff" stroke="none" stroke-width="0"/><circle cx="2026.7" cy="594" r="5.7" fill="#ffffff" stroke="none" stroke-width="0"/><rect x="2019.2" y="603.75" width="34" height="4.7" rx="0.6" fill="#ffffff" stroke="none" stroke-width="0"/><circle cx="2044.9" cy="606.1" r="5.7" fill="#ffffff" stroke="none" stroke-width="0"/><rect x="2019.2" y="615.75" width="34" height="4.7" rx="0.6" fill="#ffffff" stroke="none" stroke-width="0"/><circle cx="2034.8" cy="618.1" r="5.7" fill="#ffffff" stroke="none" stroke-width="0"/><circle cx="2026.7" cy="594" r="2.5" fill="#333"/><circle cx="2044.9" cy="606.1" r="2.5" fill="#333"/><circle cx="2034.8" cy="618.1" r="2.5" fill="#333"/><path d="M2116.6 591.8 V612.3 H2137" fill="none" stroke="#303030" stroke-width="5.4" stroke-linecap="butt"/><path d="M2110 598.8 H2130.5 V619.4" fill="none" stroke="#303030" stroke-width="5.4"/><path d="M2138 598 A11 11 0 0 0 2128.5 588.6" fill="none" stroke="#303030" stroke-width="5.800000000000001"/><path d="M2123.2 588.6 L2130.2 583.6 L2130.2 593.6 Z" fill="#303030" stroke="#303030" stroke-width="2.2" stroke-linejoin="round"/><path d="M2108.6 613 A11 11 0 0 0 2118 622.3" fill="none" stroke="#303030" stroke-width="5.800000000000001"/><path d="M2123.2 622.3 L2116.2 617.3 L2116.2 627.3 Z" fill="#303030" stroke="#303030" stroke-width="2.2" stroke-linejoin="round"/><path d="M2116.6 591.8 V612.3 H2137" fill="none" stroke="#a6a6a6" stroke-width="3.2" stroke-linecap="butt"/><path d="M2110 598.8 H2130.5 V619.4" fill="none" stroke="#a6a6a6" stroke-width="3.2"/><path d="M2138 598 A11 11 0 0 0 2128.5 588.6" fill="none" stroke="#a6a6a6" stroke-width="3.6"/><path d="M2123.2 588.6 L2130.2 583.6 L2130.2 593.6 Z" fill="#a6a6a6" stroke="#a6a6a6" stroke-width="0" stroke-linejoin="round"/><path d="M2108.6 613 A11 11 0 0 0 2118 622.3" fill="none" stroke="#a6a6a6" stroke-width="3.6"/><path d="M2123.2 622.3 L2116.2 617.3 L2116.2 627.3 Z" fill="#a6a6a6" stroke="#a6a6a6" stroke-width="0" stroke-linejoin="round"/><g transform="translate(2208.2 604.8) rotate(-40)"><rect x="-20" y="-9" width="40" height="18" rx="9" fill="#a6a6a6" stroke="#303030" stroke-width="1.6"/><g transform="rotate(40)"><circle cx="0" cy="-5" r="1.8" fill="#303030"/><circle cx="-5" cy="0" r="1.8" fill="#303030"/><circle cx="5" cy="0" r="1.8" fill="#303030"/><circle cx="0" cy="5" r="1.8" fill="#303030"/></g></g><path d="M2277.6 594 H2290.2 M2283.9 587.6 V600.4" stroke="#303030" stroke-width="5.2" fill="none"/><path d="M2279.6 609.8 C2284 602 2290 599.2 2295.3 599.2 C2300.6 599.2 2306.6 602 2311 609.8 C2306.6 617.6 2300.6 620.6 2295.3 620.6 C2290 620.6 2284 617.6 2279.6 609.8 Z" fill="#a6a6a6" stroke="#303030" stroke-width="1.6"/><path d="M2277.6 594 H2290.2 M2283.9 587.6 V600.4" stroke="#a6a6a6" stroke-width="2.8" fill="none"/><circle cx="2295.3" cy="609.8" r="8.7" fill="#303030"/><circle cx="2295.3" cy="609.8" r="5.2" fill="#a6a6a6"/><circle cx="2297.6" cy="607.8" r="1.8" fill="#303030"/><defs><pattern id="chk" x="2359.1" y="591.8" width="3.7" height="3.7" patternUnits="userSpaceOnUse"><rect width="3.7" height="3.7" fill="#a6a6a6"/><rect width="1.85" height="1.85" fill="#2c2c2c"/><rect x="1.85" y="1.85" width="1.85" height="1.85" fill="#2c2c2c"/></pattern></defs><circle cx="2372.1" cy="604.8" r="19.7" fill="#303030"/><circle cx="2372.1" cy="604.8" r="13.2" fill="url(#chk)"/><circle cx="2372.1" cy="604.8" r="16.3" fill="none" stroke="#a6a6a6" stroke-width="3.2" stroke-dasharray="5.63 2.90" transform="rotate(-84 2372.1 604.8)"/></svg>
<svg class="a" style="left:1854px;top:674px" width="30" height="26" viewBox="1854 674 30 26"><path d="M1856.8 687 C1860.5 680.5 1865 678.2 1869 678.2 C1873 678.2 1877.6 680.5 1881.3 687 C1877.6 693.5 1873 695.9 1869 695.9 C1865 695.9 1860.5 693.5 1856.8 687 Z" fill="#6e6e6e"/><circle cx="1869" cy="687" r="6.8" fill="#292929"/><circle cx="1869" cy="687" r="4.2" fill="#6e6e6e"/><circle cx="1870.8" cy="685.3" r="1.5" fill="#292929"/></svg>
<svg class="a" style="left:2472px;top:828px" width="46" height="38" viewBox="2472 828 46 38"><rect x="2476" y="831.7" width="14" height="10" fill="none" stroke="#9a9a9a" stroke-width="1.7"/><rect x="2498.6" y="831.7" width="14" height="10" fill="none" stroke="#9a9a9a" stroke-width="1.7"/><rect x="2476" y="851.2" width="14" height="10" fill="none" stroke="#9a9a9a" stroke-width="1.7"/><rect x="2498.6" y="851.2" width="14" height="10" fill="none" stroke="#9a9a9a" stroke-width="1.7"/></svg>
<svg class="a" style="left:2107px;top:837.5px" width="14" height="18" viewBox="0 0 14 18"><path d="M7 1.2 L12.2 7.2 L1.8 7.2 Z" fill="#8a8a8a"/><path d="M7 16.8 L12.2 10.8 L1.8 10.8 Z" fill="#8a8a8a"/></svg>
<svg class="a" style="left:2437px;top:913.3px" width="14" height="18" viewBox="0 0 14 18"><path d="M7 1.2 L12.2 7.2 L1.8 7.2 Z" fill="#8a8a8a"/><path d="M7 16.8 L12.2 10.8 L1.8 10.8 Z" fill="#8a8a8a"/></svg>
<svg class="a" style="left:1876px;top:896px" width="80" height="80" viewBox="1876 896 80 80"><defs><linearGradient id="edg" x1="0" y1="0" x2="0" y2="1"><stop offset="0" stop-color="#464646"/><stop offset="1" stop-color="#242424"/></linearGradient><linearGradient id="edw" x1="0" y1="0" x2="0" y2="1"><stop offset="0" stop-color="#e4e4e4"/><stop offset="1" stop-color="#a8a8a8"/></linearGradient></defs><circle cx="1915.8" cy="936" r="33.9" fill="#3f3f3f"/><g transform="translate(1885 963) rotate(-45)"><rect x="58" y="-4.6" width="22.5" height="9.2" rx="4.6" fill="url(#edg)" stroke="#000" stroke-width="2"/><path d="M0 -2.3 L8.5 -2.3 L11.5 -5 L52 -5 L52 5 L11.5 5 L8.5 2.3 L0 2.3 Q-1.8 0 0 -2.3 Z" fill="#1c1c1c" stroke="#000" stroke-width="2.6" stroke-linejoin="round"/><path d="M11.5 -5 L52 -5 L52 5 L11.5 5 Z" fill="url(#edg)"/><path d="M0 -2.3 L8.5 -2.3 L11.5 -5 L25.5 -5 L34 5 L11.5 5 L8.5 2.3 L0 2.3 Z" fill="url(#edw)"/><path d="M27 -2.6 L50 -2.6" stroke="#9a9a9a" stroke-width="0.9"/><rect x="48.5" y="-11" width="13.5" height="22" rx="3.4" fill="url(#edg)" stroke="#000" stroke-width="2.2"/></g></svg>
<div class="trk" style="top:997.2px"><i style="background:linear-gradient(90deg,#3a3eb0 0%,#55579a 25%,#6a6a74 50%,#8a8858 72%,#b4ac34 100%)"></i></div>
<div class="tk" style="top:991.0px"></div>
<svg class="kn" style="top:988.2px" width="26" height="23" viewBox="0 0 26 23"><path d="M13 1 C14.5 4.5 23.3 8.5 23.3 14.3 C23.3 18.6 20.2 21 17 21 L9 21 C5.8 21 2.7 18.6 2.7 14.3 C2.7 8.5 11.5 4.5 13 1Z" fill="url(#kg)" stroke="#050505" stroke-width="1.7" stroke-linejoin="round"/></svg>
<div class="trk" style="top:1046.2px"><i style="background:linear-gradient(90deg,#2eaa2e 0%,#528a52 28%,#6e6e6e 50%,#94609a 72%,#b832b8 100%)"></i></div>
<div class="tk" style="top:1040.0px"></div>
<svg class="kn" style="top:1037.2px" width="26" height="23" viewBox="0 0 26 23"><path d="M13 1 C14.5 4.5 23.3 8.5 23.3 14.3 C23.3 18.6 20.2 21 17 21 L9 21 C5.8 21 2.7 18.6 2.7 14.3 C2.7 8.5 11.5 4.5 13 1Z" fill="url(#kg)" stroke="#050505" stroke-width="1.7" stroke-linejoin="round"/></svg>
<div class="trk" style="top:1182.2px"><i style="background:linear-gradient(90deg,#343434 0%,#4c4c4c 45%,#747474 100%)"></i></div>
<svg class="kn" style="top:1173.2px" width="26" height="23" viewBox="0 0 26 23"><path d="M13 1 C14.5 4.5 23.3 8.5 23.3 14.3 C23.3 18.6 20.2 21 17 21 L9 21 C5.8 21 2.7 18.6 2.7 14.3 C2.7 8.5 11.5 4.5 13 1Z" fill="url(#kg)" stroke="#050505" stroke-width="1.7" stroke-linejoin="round"/></svg>
<div class="trk" style="top:1231.2px"><i style="background:linear-gradient(90deg,#747474 0%,#4c4c4c 55%,#343434 100%)"></i></div>
<div class="tk" style="top:1225.0px"></div>
<svg class="kn" style="top:1222.2px" width="26" height="23" viewBox="0 0 26 23"><path d="M13 1 C14.5 4.5 23.3 8.5 23.3 14.3 C23.3 18.6 20.2 21 17 21 L9 21 C5.8 21 2.7 18.6 2.7 14.3 C2.7 8.5 11.5 4.5 13 1Z" fill="url(#kg)" stroke="#050505" stroke-width="1.7" stroke-linejoin="round"/></svg>
<div class="trk" style="top:1313.2px"><i style="background:linear-gradient(90deg,#343434 0%,#4c4c4c 45%,#747474 100%)"></i></div>
<div class="tk" style="top:1307.0px"></div>
<svg class="kn" style="top:1304.2px" width="26" height="23" viewBox="0 0 26 23"><path d="M13 1 C14.5 4.5 23.3 8.5 23.3 14.3 C23.3 18.6 20.2 21 17 21 L9 21 C5.8 21 2.7 18.6 2.7 14.3 C2.7 8.5 11.5 4.5 13 1Z" fill="url(#kg)" stroke="#050505" stroke-width="1.7" stroke-linejoin="round"/></svg>
<div class="trk" style="top:1362.1px"><i style="background:linear-gradient(90deg,#343434 0%,#4c4c4c 45%,#747474 100%)"></i></div>
<div class="tk" style="top:1355.9px"></div>
<svg class="kn" style="top:1353.1px" width="26" height="23" viewBox="0 0 26 23"><path d="M13 1 C14.5 4.5 23.3 8.5 23.3 14.3 C23.3 18.6 20.2 21 17 21 L9 21 C5.8 21 2.7 18.6 2.7 14.3 C2.7 8.5 11.5 4.5 13 1Z" fill="url(#kg)" stroke="#050505" stroke-width="1.7" stroke-linejoin="round"/></svg>
<div class="trk" style="top:1411.2px"><i style="background:linear-gradient(90deg,#343434 0%,#4c4c4c 45%,#747474 100%)"></i></div>
<div class="tk" style="top:1405.0px"></div>
<svg class="kn" style="top:1402.2px" width="26" height="23" viewBox="0 0 26 23"><path d="M13 1 C14.5 4.5 23.3 8.5 23.3 14.3 C23.3 18.6 20.2 21 17 21 L9 21 C5.8 21 2.7 18.6 2.7 14.3 C2.7 8.5 11.5 4.5 13 1Z" fill="url(#kg)" stroke="#050505" stroke-width="1.7" stroke-linejoin="round"/></svg>
<div class="trk" style="top:1460.3px"><i style="background:linear-gradient(90deg,#343434 0%,#4c4c4c 45%,#747474 100%)"></i></div>
<div class="tk" style="top:1454.1px"></div>
<svg class="kn" style="top:1451.3px" width="26" height="23" viewBox="0 0 26 23"><path d="M13 1 C14.5 4.5 23.3 8.5 23.3 14.3 C23.3 18.6 20.2 21 17 21 L9 21 C5.8 21 2.7 18.6 2.7 14.3 C2.7 8.5 11.5 4.5 13 1Z" fill="url(#kg)" stroke="#050505" stroke-width="1.7" stroke-linejoin="round"/></svg>
<div class="trk" style="top:1590.2px"><i style="background:linear-gradient(90deg,#747474 0%,#4c4c4c 55%,#343434 100%)"></i></div>
<div class="tk" style="top:1584.0px"></div>
<svg class="kn" style="top:1581.2px" width="26" height="23" viewBox="0 0 26 23"><path d="M13 1 C14.5 4.5 23.3 8.5 23.3 14.3 C23.3 18.6 20.2 21 17 21 L9 21 C5.8 21 2.7 18.6 2.7 14.3 C2.7 8.5 11.5 4.5 13 1Z" fill="url(#kg)" stroke="#050505" stroke-width="1.7" stroke-linejoin="round"/></svg>
<div class="trk" style="top:1639.0px"><i style="background:linear-gradient(90deg,#747474 0%,#4c4c4c 55%,#343434 100%)"></i></div>
<div class="tk" style="top:1632.8px"></div>
<svg class="kn" style="top:1630.0px" width="26" height="23" viewBox="0 0 26 23"><path d="M13 1 C14.5 4.5 23.3 8.5 23.3 14.3 C23.3 18.6 20.2 21 17 21 L9 21 C5.8 21 2.7 18.6 2.7 14.3 C2.7 8.5 11.5 4.5 13 1Z" fill="url(#kg)" stroke="#050505" stroke-width="1.7" stroke-linejoin="round"/></svg>
<span class="t" style="left:1293.20px;top:23.33px;font-size:41.90px;color:#9a9a9a;transform:scaleX(1.0088)">Library</span>
<span class="t" style="left:1478.72px;top:23.33px;font-size:41.90px;color:#ffffff;transform:scaleX(1.0016)">Develop</span>
<span class="t" style="left:1689.29px;top:23.33px;font-size:41.90px;color:#9a9a9a;transform:scaleX(1.0113)">Map</span>
<span class="t" style="left:1827.74px;top:23.33px;font-size:41.90px;color:#9a9a9a;transform:scaleX(0.9959)">Book</span>
<span class="t" style="left:1977.72px;top:23.33px;font-size:41.90px;color:#9a9a9a;transform:scaleX(0.9780)">Slideshow</span>
<span class="t" style="left:2222.78px;top:23.33px;font-size:41.90px;color:#9a9a9a;transform:scaleX(0.9829)">Print</span>
<span class="t" style="left:2368.00px;top:23.33px;font-size:41.90px;color:#9a9a9a;transform:scaleX(0.9439)">Web</span>
<span class="t" style="left:2309.10px;top:125.50px;font-size:36.03px;color:#a2a2a2;transform:scaleX(1.0319);text-shadow:1px 1px 0 rgba(0,0,0,.4)">Histogram</span>
<span class="t" style="left:2399.66px;top:673.62px;font-size:35.89px;color:#a2a2a2;transform:scaleX(0.9407);text-shadow:1px 1px 0 rgba(0,0,0,.4)">Basic</span>
<span class="t" style="left:2013.75px;top:446.30px;font-size:26.82px;color:#a0a0a0;transform:scaleX(0.9791);text-shadow:1px 1px 0 rgba(0,0,0,.4)">R</span>
<span class="t" style="left:2068.91px;top:446.30px;font-size:26.82px;color:#f0f0f0;transform:scaleX(0.9458);text-shadow:1px 1px 0 rgba(0,0,0,.4)">100</span>
<span class="t" style="left:2133.36px;top:446.30px;font-size:26.82px;color:#a0a0a0;transform:scaleX(0.9888);text-shadow:1px 1px 0 rgba(0,0,0,.4)">G</span>
<span class="t" style="left:2188.80px;top:446.30px;font-size:26.82px;color:#f0f0f0;transform:scaleX(0.9529);text-shadow:1px 1px 0 rgba(0,0,0,.4)">100</span>
<span class="t" style="left:2253.44px;top:446.30px;font-size:26.82px;color:#a0a0a0;transform:scaleX(0.9819);text-shadow:1px 1px 0 rgba(0,0,0,.4)">B</span>
<span class="t" style="left:2307.00px;top:446.30px;font-size:26.82px;color:#f0f0f0;transform:scaleX(0.9529);text-shadow:1px 1px 0 rgba(0,0,0,.4)">100</span>
<span class="t" style="left:2359.79px;top:446.30px;font-size:26.82px;color:#a0a0a0;transform:scaleX(0.9637);text-shadow:1px 1px 0 rgba(0,0,0,.4)">%</span>
<span class="t" style="left:1926.09px;top:509.56px;font-size:28.63px;color:#969696;transform:scaleX(0.9797);text-shadow:1px 1px 0 rgba(0,0,0,.4)">Original Photo</span>
<span class="t" style="left:1880.07px;top:748.18px;font-size:28.49px;color:#b4b4b4;transform:scaleX(0.9725);text-shadow:1px 1px 0 rgba(0,0,0,.4)">Treatment :</span>
<span class="t" style="left:2221.70px;top:748.18px;font-size:28.49px;color:#ffffff;transform:scaleX(0.9758);text-shadow:1px 1px 0 rgba(0,0,0,.4)">Color</span>
<span class="t" style="left:2346.63px;top:747.88px;font-size:28.49px;color:#9c9c9c;transform:scaleX(0.9727);text-shadow:1px 1px 0 rgba(0,0,0,.4)">Black &amp; White</span>
<span class="t" style="left:1879.43px;top:832.28px;font-size:28.49px;color:#b4b4b4;transform:scaleX(0.9761);text-shadow:1px 1px 0 rgba(0,0,0,.4)">Profile :</span>
<span class="t" style="left:2031.61px;top:832.28px;font-size:28.49px;color:#d4d4d4;transform:scaleX(0.9668);text-shadow:1px 1px 0 rgba(0,0,0,.4)">Color</span>
<span class="t" style="left:2076.70px;top:909.20px;font-size:28.35px;color:#a6a6a6;transform:scaleX(0.9548);text-shadow:1px 1px 0 rgba(0,0,0,.4)">WB :</span>
<span class="t" style="left:2333.20px;top:909.20px;font-size:28.35px;color:#d4d4d4;transform:scaleX(0.9237);text-shadow:1px 1px 0 rgba(0,0,0,.4)">As Shot</span>
<span class="t" style="left:2063.97px;top:1119.90px;font-size:28.35px;color:#b4b4b4;transform:scaleX(0.9785);text-shadow:1px 1px 0 rgba(0,0,0,.4)">Tone</span>
<span class="t" style="left:2432.00px;top:1119.19px;font-size:27.65px;color:#e8e8e8;transform:scaleX(1.0490);text-shadow:1px 1px 0 rgba(0,0,0,.4)">Auto</span>
<span class="t" style="left:2062.63px;top:1530.80px;font-size:28.35px;color:#b4b4b4;transform:scaleX(0.9329);text-shadow:1px 1px 0 rgba(0,0,0,.4)">Presence</span>
<span class="t" style="left:1980.16px;top:986.32px;font-size:28.21px;color:#b4b4b4;transform:scaleX(1.0074);text-shadow:1px 1px 0 rgba(0,0,0,.4)">Temp</span>
<span class="t" style="left:2494.14px;top:989.79px;font-size:26.12px;color:#8e8e8e;transform:scaleX(1.0568);text-shadow:1px 1px 0 rgba(0,0,0,.4)">0</span>
<span class="t" style="left:2000.24px;top:1035.32px;font-size:28.21px;color:#b4b4b4;transform:scaleX(1.0474);text-shadow:1px 1px 0 rgba(0,0,0,.4)">Tint</span>
<span class="t" style="left:2494.14px;top:1038.79px;font-size:26.12px;color:#8e8e8e;transform:scaleX(1.0568);text-shadow:1px 1px 0 rgba(0,0,0,.4)">0</span>
<span class="t" style="left:1934.88px;top:1171.32px;font-size:28.21px;color:#b4b4b4;transform:scaleX(0.9625);text-shadow:1px 1px 0 rgba(0,0,0,.4)">Exposure</span>
<span class="t" style="left:2459.40px;top:1174.67px;font-size:26.26px;color:#8e8e8e;transform:scaleX(0.9793);text-shadow:1px 1px 0 rgba(0,0,0,.4)">0.00</span>
<span class="t" style="left:1946.03px;top:1220.32px;font-size:28.21px;color:#b4b4b4;transform:scaleX(0.9602);text-shadow:1px 1px 0 rgba(0,0,0,.4)">Contrast</span>
<span class="t" style="left:2494.14px;top:1223.79px;font-size:26.12px;color:#8e8e8e;transform:scaleX(1.0568);text-shadow:1px 1px 0 rgba(0,0,0,.4)">0</span>
<span class="t" style="left:1923.76px;top:1302.32px;font-size:28.21px;color:#b4b4b4;transform:scaleX(1.0141);text-shadow:1px 1px 0 rgba(0,0,0,.4)">Highlights</span>
<span class="t" style="left:2494.14px;top:1305.79px;font-size:26.12px;color:#8e8e8e;transform:scaleX(1.0568);text-shadow:1px 1px 0 rgba(0,0,0,.4)">0</span>
<span class="t" style="left:1939.57px;top:1351.22px;font-size:28.21px;color:#b4b4b4;transform:scaleX(0.9458);text-shadow:1px 1px 0 rgba(0,0,0,.4)">Shadows</span>
<span class="t" style="left:2494.14px;top:1354.69px;font-size:26.12px;color:#8e8e8e;transform:scaleX(1.0568);text-shadow:1px 1px 0 rgba(0,0,0,.4)">0</span>
<span class="t" style="left:1965.80px;top:1400.32px;font-size:28.21px;color:#b4b4b4;transform:scaleX(0.9691);text-shadow:1px 1px 0 rgba(0,0,0,.4)">Whites</span>
<span class="t" style="left:2494.14px;top:1403.79px;font-size:26.12px;color:#8e8e8e;transform:scaleX(1.0568);text-shadow:1px 1px 0 rgba(0,0,0,.4)">0</span>
<span class="t" style="left:1970.92px;top:1449.42px;font-size:28.21px;color:#b4b4b4;transform:scaleX(0.9437);text-shadow:1px 1px 0 rgba(0,0,0,.4)">Blacks</span>
<span class="t" style="left:2494.14px;top:1452.89px;font-size:26.12px;color:#8e8e8e;transform:scaleX(1.0568);text-shadow:1px 1px 0 rgba(0,0,0,.4)">0</span>
<span class="t" style="left:1958.77px;top:1579.32px;font-size:28.21px;color:#b4b4b4;transform:scaleX(0.9820);text-shadow:1px 1px 0 rgba(0,0,0,.4)">Texture</span>
<span class="t" style="left:2494.14px;top:1582.79px;font-size:26.12px;color:#8e8e8e;transform:scaleX(1.0568);text-shadow:1px 1px 0 rgba(0,0,0,.4)">0</span>
<span class="t" style="left:1969.19px;top:1628.12px;font-size:28.21px;color:#b4b4b4;transform:scaleX(0.9922);text-shadow:1px 1px 0 rgba(0,0,0,.4)">Clarity</span>
<span class="t" style="left:2494.14px;top:1631.59px;font-size:26.12px;color:#8e8e8e;transform:scaleX(1.0568);text-shadow:1px 1px 0 rgba(0,0,0,.4)">0</span>
<div class="a" style="left:1850px;top:1647px;width:700px;height:53px;background:#292929"></div>
<div class="tri" style="left:2193px;top:1656px;border-left:7.7px solid transparent;border-right:7.7px solid transparent;border-top:7.7px solid #7c7c7c"></div>
<div class="a" style="left:1862px;top:1669px;width:331px;height:40px;background:linear-gradient(#555,#4a4a4a);border:2px solid #1e1e1e;box-shadow:inset 0 1px 0 #686868"></div>
<div class="a" style="left:2206px;top:1669px;width:331px;height:40px;background:linear-gradient(#555,#4a4a4a);border:2px solid #1e1e1e;box-shadow:inset 0 1px 0 #686868"></div>
<span class="t" style="left:1961.00px;top:1691.88px;font-size:28.49px;color:#c8c8c8;transform:scaleX(1.2141);text-shadow:1px 1px 0 rgba(0,0,0,.4)">Previous</span>
<span class="t" style="left:2328.27px;top:1691.88px;font-size:28.49px;color:#c8c8c8;transform:scaleX(1.1369);text-shadow:1px 1px 0 rgba(0,0,0,.4)">Reset</span>
</body></html>
